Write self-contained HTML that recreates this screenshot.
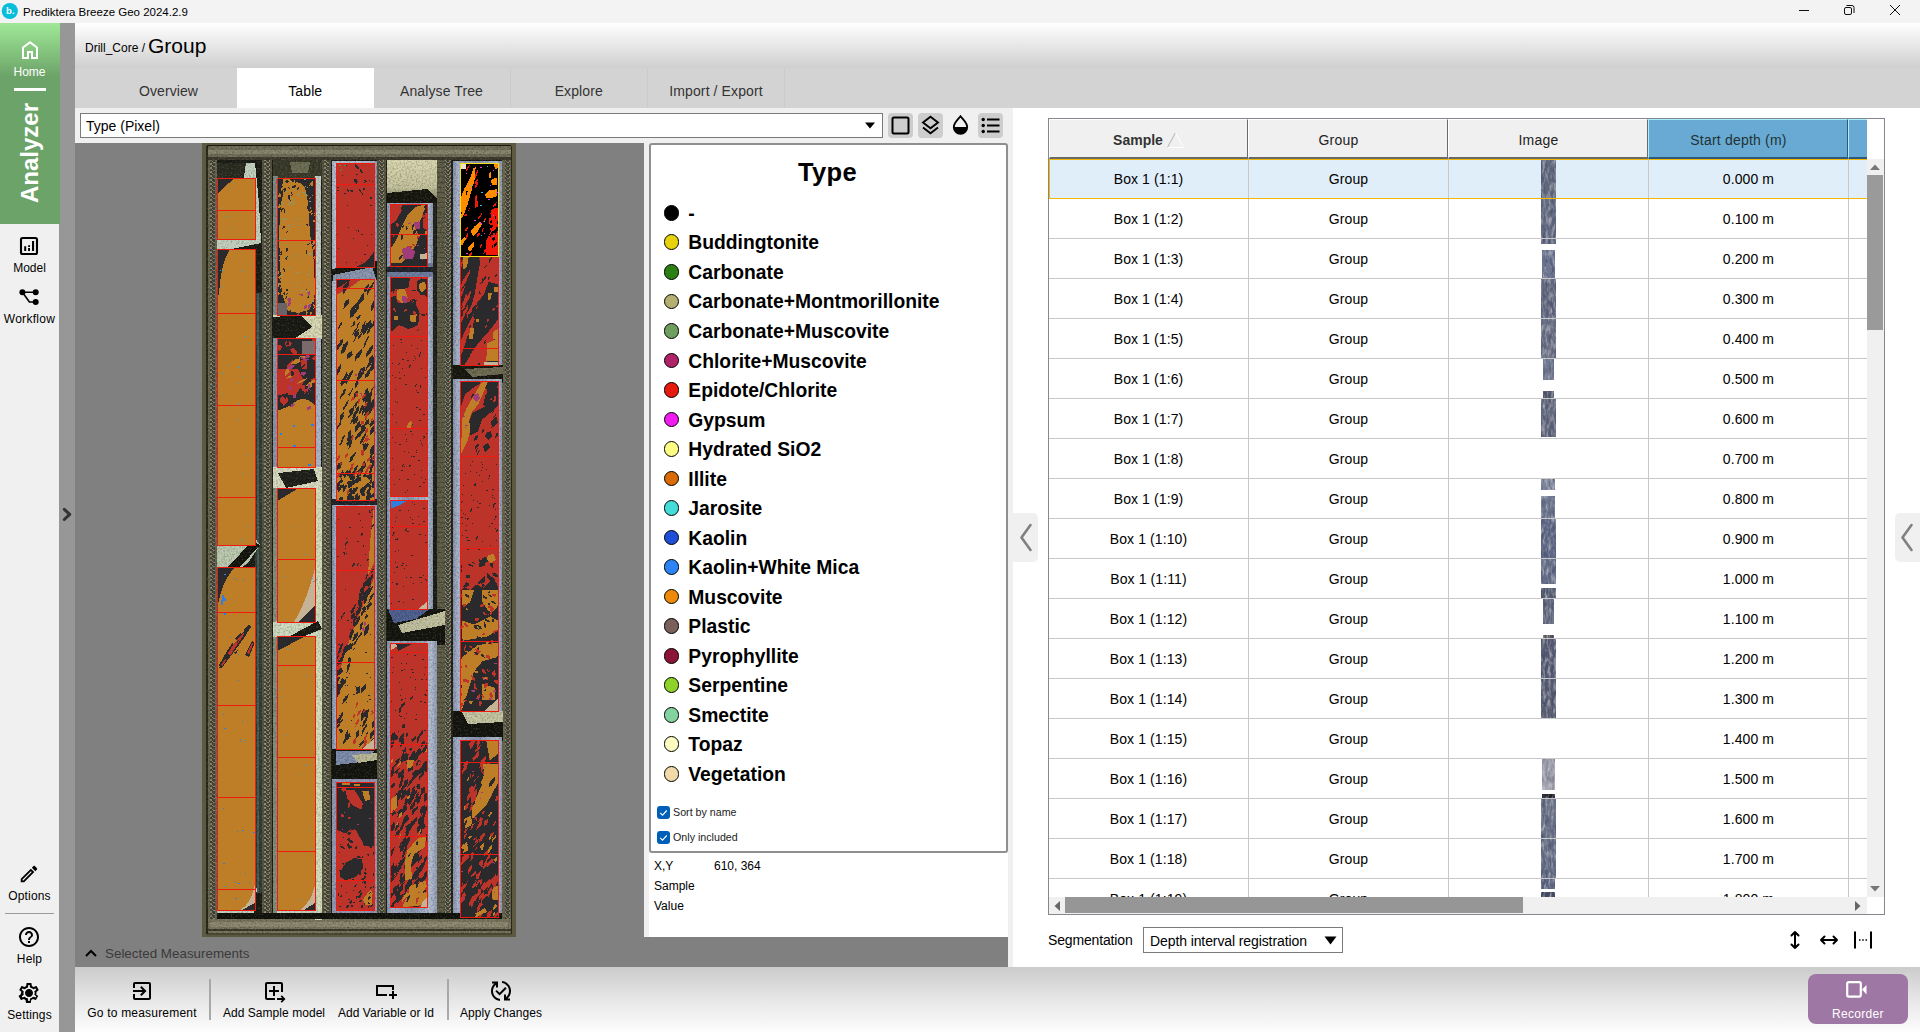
<!DOCTYPE html>
<html lang="en"><head><meta charset="utf-8"><title>Prediktera Breeze Geo 2024.2.9</title>
<style>
*{box-sizing:border-box;margin:0;padding:0}
html,body{width:1920px;height:1032px;overflow:hidden;background:#fff}
body{position:relative;font-family:"Liberation Sans",sans-serif;font-size:14px;color:#000;letter-spacing:.2px}
.abs,body>div,body>svg{position:absolute}
div,span,i,b,svg{position:absolute}
#title{left:0;top:0;width:1920px;height:23px;background:#f3f3f3}
#title .t{left:23px;top:1px;line-height:23px;font-size:11.5px;letter-spacing:0;white-space:nowrap}
#side{left:0;top:23px;width:59px;height:1009px;background:#f0f0f0;z-index:2}
#green{left:0;top:0;width:60px;height:201px;background:linear-gradient(#9fe897 0,#6ca368 54px,#6ca368 100%)}
#strip{left:59px;top:23px;width:16px;height:1009px;background:#979797}
.nl{left:0;width:59px;text-align:center;font-size:12px;letter-spacing:.15px;white-space:nowrap;line-height:16px}
#head{left:75px;top:23px;width:1845px;height:45px;background:linear-gradient(#fff 0,#fdfdfd 4%,#cfcfcf 100%)}
#tabs{left:75px;top:68px;width:1845px;height:40px;background:#d3d3d3}
.tab{top:0;height:40px;line-height:47px;text-align:center;font-size:14px;color:#333;letter-spacing:.1px;border-right:1px solid #cbcbcb}
.tab.on{background:#fff;color:#000;border:0}
#left{left:75px;top:108px;width:938px;height:859px;background:#f0f0f0}
#combo{left:5px;top:5px;width:803px;height:25px;background:#fff;border:1px solid #7a7a7a;font-size:14px;line-height:24px;padding-left:5px;letter-spacing:0}
.ib{top:5px;width:25px;height:25px;border-radius:4px;background:#cdcdcd}
#imgarea{left:0;top:35px;width:569px;height:824px;background:#808080}
#selbar{left:0;top:829px;width:933px;height:30px;background:#808080}
#legend{left:574px;top:35px;width:359px;height:710px;background:#fff;border:2px solid #8f8f8f;border-radius:3px}
#legend h1{position:absolute;left:-1px;top:12px;width:355px;text-align:center;font-size:25.5px;line-height:30px;font-weight:bold;letter-spacing:.3px}
.li{left:0;height:24px;width:355px}
.li i{left:12.7px;top:4.2px;width:15.6px;height:15.6px;border-radius:50%;border:1.3px solid #000}
.li b{left:37.3px;top:1px;line-height:24px;font-size:19.3px;letter-spacing:0;white-space:nowrap}
.cb{left:6px;width:13px;height:13px;border-radius:3px;background:#005fb8}
.cbl{left:22px;font-size:10.7px;letter-spacing:0;color:#222;white-space:nowrap;line-height:13px}
#info{left:574px;top:745px;width:359px;height:84px;background:#fff;font-size:12px;letter-spacing:0}
#info span{line-height:14px;white-space:nowrap}
#right{left:1013px;top:108px;width:907px;height:859px;background:#fff}
#tbl{left:35px;top:10px;width:837px;height:797px;border:1px solid #828790;background:#fff;overflow:hidden}
.th{top:0;height:40px;line-height:40px;text-align:center;font-size:14px;color:#222;background:#f0f0f0;border-top:1px solid #fff;border-left:1px solid #fff;border-right:1px solid #696969;border-bottom:2px solid #696969;white-space:nowrap}
.th.blue{background:#68aad3;border-top:1px solid #a8eefa;border-left:1px solid #a8eefa;border-right:1px solid #2d5a78;border-bottom:2px solid #2d5a78;color:#233}
.tr{left:0;width:818px;height:41px;border-top:1px solid #c8c8c8;border-bottom:1px solid #c8c8c8;z-index:2}
.tr.sel{border:1px solid #f5b800;z-index:3;margin-top:1px;height:40px;width:830px}
.c{top:0;height:39px;line-height:40px;text-align:center;font-size:14px;white-space:nowrap;letter-spacing:.1px}
.sel .c{top:-1px;margin-left:-1px}
.sel:after{margin-left:-1px;margin-top:-1px}
.c1{left:0;width:199px}.c2{left:199px;width:200px;border-left:1px solid #c8c8c8}.c3{left:399px;width:200px;border-left:1px solid #c8c8c8}.c4{left:599px;width:200px;border-left:1px solid #c8c8c8}
.tr:after{content:"";position:absolute;left:799px;top:0;width:1px;height:39px;background:#c8c8c8}
.st{display:block;z-index:3}
#vs{left:818px;top:40px;width:17px;height:738px;background:#f0f0f0;z-index:4}
#hs{left:0;top:778px;width:818px;height:17px;background:#f0f0f0;z-index:4}
#bottom{left:75px;top:967px;width:1845px;height:65px;background:linear-gradient(#cbcbcb 0,#e4e4e4 45%,#fdfdfd 100%)}
.bl{top:38px;font-size:12px;letter-spacing:.05px;white-space:nowrap;text-align:center;line-height:16px}
.sep{top:12px;width:1.5px;height:41px;background:#a8a8a8}
#rec{left:1733px;top:7px;width:100px;height:50px;border-radius:8px;background:#9e77a5}
#rec span{left:0;top:32px;width:100px;text-align:center;color:#fff;font-size:12px;letter-spacing:.3px;line-height:16px}
.col{background:#f0f0f0;width:25px;height:49px;top:405px}

</style></head>
<body>
<div id="title">
<svg style="left:1px;top:2px" width="18" height="18" viewBox="0 0 18 18"><circle cx="8.800" cy="9" r="8.100" fill="#06bddc"/><text x="5" y="12.300" font-family="Liberation Sans,sans-serif" font-weight="bold" font-size="9.500" fill="#fff">b.</text></svg>
<span class="t">Prediktera Breeze Geo 2024.2.9</span>
<svg style="left:1790px;top:0" width="130" height="23" viewBox="0 0 130 23" fill="none" stroke="#111" stroke-width="1"><path d="M9 10.5h10"/><rect x="54.5" y="7.5" width="7" height="7" rx="1.5"/><path d="M56.5 5.5h5.5a2 2 0 0 1 2 2v5.5"/><path d="M100 5l10 10M110 5l-10 10"/></svg>
</div>
<div id="side">
<div id="green">
<svg style="left:18px;top:15px" width="24" height="24" viewBox="0 0 24 24" fill="#fff"><path fill-rule="evenodd" d="M4 21V9l8-6 8 6v12h-7v-6h-2v6zM6 19h3v-6h6v6h3v-9l-6-4.500L6 10z"/></svg>
<span class="nl" style="top:41px;color:#fff;letter-spacing:0">Home</span>
<i style="left:14px;top:65px;width:32px;height:2.500px;background:#fff"></i>
<span style="left:0;top:180px;width:100px;height:59px;line-height:59px;transform-origin:0 0;transform:rotate(-90deg);color:#fff;font-weight:bold;font-size:24px;text-align:center;letter-spacing:0">Analyzer</span>
</div>
<svg style="left:0;top:200px" width="59" height="100" viewBox="0 200 59 100"><rect x="21" y="215" width="16" height="16" rx="1.500" fill="none" stroke="#000" stroke-width="2.100"/><path d="M24.200 223.300h2v4.700h-2zM28.100 222.200h1.900v1.700h-1.900zM28.100 224.900h1.900v3.100h-1.900zM32 218h2.100v10H32z"/><g stroke="#000" stroke-width="1.600" fill="none"><path d="M22.400 269.200h13.300M22.400 269.200l7 9.800h6.300"/></g><circle cx="22.400" cy="269.200" r="3"/><circle cx="35.700" cy="269.200" r="3"/><circle cx="35.700" cy="279" r="3"/></svg>
<span class="nl" style="top:237px;letter-spacing:0">Model</span>
<span class="nl" style="top:288px;letter-spacing:.3px">Workflow</span>
<svg style="left:18px;top:840px" width="22" height="22" viewBox="0 0 24 24" fill="#000"><path d="M14.060 9.020l.92.920L5.920 19H5v-.920l9.060-9.060M17.660 3c-.25 0-.51.100-.7.290l-1.830 1.830 3.750 3.750 1.830-1.830c.39-.39.39-1.020 0-1.410l-2.340-2.340c-.2-.2-.45-.29-.71-.29zm-3.600 3.190L3 17.250V21h3.750L17.810 9.940l-3.750-3.750z"/></svg>
<span class="nl" style="top:865px">Options</span>
<i style="left:5px;top:890px;width:49px;height:1px;background:#9a9a9a"></i>
<svg style="left:17px;top:902px" width="24" height="24" viewBox="0 0 24 24" fill="#000"><path d="M11 18h2v-2h-2v2zm1-16C6.480 2 2 6.480 2 12s4.480 10 10 10 10-4.480 10-10S17.520 2 12 2zm0 18c-4.410 0-8-3.590-8-8s3.590-8 8-8 8 3.590 8 8-3.590 8-8 8zm0-14c-2.210 0-4 1.790-4 4h2c0-1.100.9-2 2-2s2 .9 2 2c0 2-3 1.750-3 5h2c0-2.250 3-2.500 3-5 0-2.210-1.790-4-4-4z"/></svg>
<span class="nl" style="top:928px">Help</span>
<svg style="left:17px;top:958px" width="24" height="24" viewBox="0 0 24 24" fill="#000"><path d="M19.430 12.980c.04-.32.070-.64.070-.98 0-.34-.03-.66-.07-.98l2.110-1.650c.19-.15.240-.42.120-.64l-2-3.460c-.09-.16-.26-.25-.44-.25-.06 0-.12.010-.17.030l-2.490 1c-.52-.4-1.080-.73-1.690-.98l-.38-2.650C14.460 2.180 14.250 2 14 2h-4c-.25 0-.46.180-.49.420l-.38 2.650c-.61.250-1.170.59-1.690.98l-2.490-1c-.06-.02-.12-.03-.18-.03-.17 0-.34.090-.43.250l-2 3.460c-.13.220-.07.490.12.640l2.110 1.650c-.4.320-.7.650-.7.980 0 .33.030.66.070.98l-2.110 1.650c-.19.150-.24.420-.12.640l2 3.460c.9.160.26.250.44.250.06 0 .12-.1.170-.03l2.490-1c.52.400 1.080.73 1.690.98l.38 2.650c.3.240.24.420.49.420h4c.25 0 .46-.18.490-.42l.38-2.650c.61-.25 1.170-.59 1.690-.98l2.490 1c.6.020.12.030.18.030.17 0 .34-.9.430-.25l2-3.460c.12-.22.070-.49-.12-.64l-2.110-1.650zm-1.980-1.710c.4.310.5.520.5.730 0 .21-.2.430-.5.730l-.14 1.130.89.700 1.080.84-.7 1.210-1.270-.51-1.040-.42-.9.680c-.43.320-.84.560-1.250.73l-1.060.43-.16 1.130-.2 1.350h-1.400l-.19-1.350-.16-1.130-1.060-.43c-.43-.18-.83-.41-1.230-.71l-.91-.7-1.060.43-1.270.51-.7-1.210 1.080-.84.890-.7-.14-1.130c-.03-.31-.05-.54-.05-.74s.02-.43.050-.73l.14-1.130-.89-.7-1.080-.84.700-1.210 1.270.51 1.040.42.900-.68c.43-.32.840-.56 1.250-.73l1.060-.43.160-1.130.2-1.350h1.390l.19 1.350.16 1.130 1.060.43c.43.180.83.410 1.230.71l.91.700 1.060-.43 1.270-.51.700 1.210-1.070.85-.89.700.14 1.130zM12 8c-2.210 0-4 1.790-4 4s1.790 4 4 4 4-1.790 4-4-1.790-4-4-4zm0 6c-1.100 0-2-.9-2-2s.9-2 2-2 2 .9 2 2-.9 2-2 2z"/><circle cx="12" cy="12" r="2.600"/></svg>
<span class="nl" style="top:984px">Settings</span>
</div>
<div id="strip"><svg style="left:0;top:480px" width="16" height="24" viewBox="0 480 16 24" fill="none" stroke="#333" stroke-width="3" stroke-linecap="round" stroke-linejoin="round"><path d="M5.300 486.300l5.400 5.100-5.400 5.100"/></svg></div>
<div id="head"><span style="left:10px;top:17px;font-size:12px;line-height:16px;letter-spacing:0;white-space:nowrap">Drill_Core /</span><span style="left:73px;top:8px;font-size:21px;line-height:30px;letter-spacing:0;white-space:nowrap">Group</span></div>
<div id="tabs">
<span class="tab" style="left:25px;width:137px;border-right:0">Overview</span>
<span class="tab on" style="left:162px;width:136.500px">Table</span>
<span class="tab" style="left:298.500px;width:137px">Analyse Tree</span>
<span class="tab" style="left:435.500px;width:137.500px">Explore</span>
<span class="tab" style="left:573px;width:137px">Import / Export</span>
</div>
<div id="left">
<div id="combo">Type (Pixel)<svg style="left:783px;top:8px" width="12" height="7" viewBox="0 0 12 7"><path d="M1 .5h10L6 6.500z" fill="#000"/></svg></div>
<div class="ib" style="left:813px"><svg style="left:3px;top:3px" width="19" height="19" viewBox="0 0 19 19"><rect x="1.500" y="1.500" width="16" height="16" rx="1.500" fill="none" stroke="#000" stroke-width="2"/></svg></div>
<div class="ib" style="left:843px"><svg style="left:3px;top:2px" width="19" height="21" viewBox="0 0 19 21" fill="none" stroke="#000" stroke-width="1.900" stroke-linejoin="miter"><path d="M9.500 1.800L17 7.500 9.500 13.200 2 7.500z"/><path d="M2 12.500l7.500 5.700 7.500-5.700"/></svg></div>
<div class="ib" style="left:873px;background:none"><svg style="left:3px;top:1px" width="19" height="21" viewBox="0 0 19 21"><path d="M9.500 2.200C7 5.500 2.800 9 2.800 13a6.700 6.700 0 0 0 13.400 0c0-4-4.200-7.500-6.700-10.800z" fill="none" stroke="#000" stroke-width="1.900"/><path d="M2.800 13h13.400a6.700 6.700 0 0 1-13.400 0z" fill="#000"/></svg></div>
<div class="ib" style="left:903px"><svg style="left:3px;top:3px" width="19" height="19" viewBox="0 0 19 19" fill="#000"><circle cx="2.200" cy="3.500" r="1.700"/><circle cx="2.200" cy="9.500" r="1.700"/><circle cx="2.200" cy="15.500" r="1.700"/><rect x="6" y="2.500" width="12.500" height="2"/><rect x="6" y="8.500" width="12.500" height="2"/><rect x="6" y="14.500" width="12.500" height="2"/></svg></div>
<div id="imgarea"><div style="left:127px;top:0;width:314px;height:794px;overflow:hidden"><svg width="314" height="794" viewBox="0 0 314 794" shape-rendering="crispEdges">
<defs>
<pattern id="cg" width="6" height="4" patternUnits="userSpaceOnUse"><rect width="6" height="4" fill="#45443a"/><path d="M0 4L3 .5 6 4" fill="none" stroke="#858268" stroke-width="1"/></pattern>
<pattern id="cg2" width="6" height="4" patternUnits="userSpaceOnUse"><rect width="6" height="4" fill="#46453a"/><path d="M0 4L3 .5 6 4" fill="none" stroke="#8f8c72" stroke-width="1"/></pattern>
<pattern id="hl" width="4" height="5" patternUnits="userSpaceOnUse"><rect width="4" height="5" fill="#5f5d47"/><rect y="4" width="4" height="1" fill="#4c4a38"/></pattern>
<linearGradient id="rk3" x1="0" x2="1" y1="0" y2="0"><stop offset="0" stop-color="#8490ae"/><stop offset=".1" stop-color="#aab4ca"/><stop offset=".5" stop-color="#8894b0"/><stop offset=".88" stop-color="#b4bed0"/><stop offset="1" stop-color="#8e9ab4"/></linearGradient>
<linearGradient id="rk2" x1="0" x2="1" y1="0" y2="0"><stop offset="0" stop-color="#a4aec4"/><stop offset=".1" stop-color="#bec6d4"/><stop offset=".9" stop-color="#b0bace"/><stop offset="1" stop-color="#8490aa"/></linearGradient>
<linearGradient id="crm" x1="0" x2="0" y1="0" y2="1"><stop offset="0" stop-color="#dad9b2"/><stop offset=".6" stop-color="#c4c39c"/><stop offset="1" stop-color="#54533e"/></linearGradient>
<filter id="gr" x="0" y="0" width="100%" height="100%"><feTurbulence type="fractalNoise" baseFrequency=".55" numOctaves="2" seed="11" result="n"/><feColorMatrix in="n" values="0 0 0 0 .9 0 0 0 0 .9 0 0 0 0 .85 1.200 0 0 0 -.66" result="w"/><feColorMatrix in="n" values="0 0 0 0 0 0 0 0 0 0 0 0 0 0 0 0 1.500 0 0 -.6" result="d"/><feMerge><feMergeNode in="w"/><feMergeNode in="d"/></feMerge></filter>
<clipPath id="k0"><rect x="15.5" y="35" width="37.5" height="61"/></clipPath>
<clipPath id="k1"><rect x="15.5" y="106" width="37.5" height="296"/></clipPath>
<clipPath id="k2"><rect x="15.5" y="424" width="37.5" height="343"/></clipPath>
<clipPath id="k3"><rect x="75.5" y="35" width="37.5" height="137"/></clipPath>
<clipPath id="k4"><rect x="75.5" y="195" width="37.5" height="129"/></clipPath>
<clipPath id="k5"><rect x="75.5" y="345" width="37.5" height="134"/></clipPath>
<clipPath id="k6"><rect x="75.5" y="493" width="37.5" height="274"/></clipPath>
<clipPath id="k7"><rect x="134" y="20" width="38" height="104"/></clipPath>
<clipPath id="k8"><rect x="134" y="136" width="38" height="221"/></clipPath>
<clipPath id="k9"><rect x="134" y="363" width="38" height="243"/></clipPath>
<clipPath id="k10"><rect x="134" y="639" width="38" height="128"/></clipPath>
<clipPath id="k11"><rect x="188" y="61" width="37.5" height="62"/></clipPath>
<clipPath id="k12"><rect x="188" y="134" width="37.5" height="219"/></clipPath>
<clipPath id="k13"><rect x="188" y="357" width="37.5" height="109"/></clipPath>
<clipPath id="k14"><rect x="188" y="500" width="37.5" height="264"/></clipPath>
<clipPath id="k15"><rect x="258" y="113" width="38" height="109"/></clipPath>
<clipPath id="k16"><rect x="258" y="238" width="38" height="330"/></clipPath>
<clipPath id="k17"><rect x="258" y="597" width="38" height="177"/></clipPath>
<clipPath id="ks"><rect x="258" y="20" width="38" height="93"/></clipPath>
</defs>
<rect width="314" height="794" fill="#5a583f"/>
<rect x="4" y="2" width="306" height="790" fill="#1a1a12"/>
<rect x="5" y="3" width="304" height="14" fill="#6f6c56"/><rect x="5" y="7" width="304" height="4" fill="#87846c"/><rect x="5" y="14" width="304" height="3" fill="#3c3a2a"/>
<rect x="5" y="776" width="304" height="16" fill="#77745c"/><rect x="8" y="779" width="298" height="5" fill="#8c8970"/><rect x="5" y="786" width="304" height="1.500" fill="#3a3828"/><rect x="5" y="790" width="304" height="2" fill="#4a4834"/>
<rect x="5" y="17" width="10" height="759" fill="#67654e"/><rect x="8" y="17" width="5" height="759" fill="url(#cg)"/><rect x="0" y="0" width="5" height="794" fill="#5c5a40"/><rect x="4" y="3" width="1.500" height="788" fill="#2a281c"/>
<rect x="300" y="17" width="10" height="759" fill="#67654e"/><rect x="303" y="17" width="5" height="759" fill="url(#cg)"/><rect x="309" y="0" width="5" height="794" fill="#5c5a40"/><rect x="308.500" y="3" width="1.500" height="788" fill="#2a281c"/>
<rect x="15" y="17" width="285" height="759" fill="#1b1c15"/>
<rect x="60" y="17" width="10" height="758" fill="#56543f"/><rect x="62" y="17" width="6" height="758" fill="url(#cg2)"/>
<rect x="120" y="17" width="9" height="758" fill="#56543f"/><rect x="122" y="17" width="5" height="758" fill="url(#cg2)"/>
<rect x="175" y="17" width="9" height="758" fill="#56543f"/><rect x="177" y="17" width="5" height="758" fill="url(#cg2)"/>
<rect x="235" y="17" width="15" height="758" fill="url(#hl)"/><rect x="243" y="17" width="6" height="758" fill="url(#cg2)"/><rect x="249" y="17" width="2" height="758" fill="#24241a"/>
<rect x="53" y="150" width="7" height="600" fill="#2f3d35"/><rect x="55" y="150" width="2" height="600" fill="#485a52"/>
<rect x="15" y="100" width="2" height="670" fill="#56604e"/>
<path d="M44 20L53 20 57 60 59 100 30 106 15 118 15 96 38 60z" fill="#c5d2c0"/><path d="M15 20H44L38 44 15 60z" fill="#2a2b20"/>
<path d="M15 395L53 395 58 402 46 420 15 440z" fill="#bccab0"/><path d="M26 424L50 398 58 402 38 424z" fill="#15150e"/>
<path d="M15 760L55 745 52 772 30 776 15 774z" fill="#c3d2c2"/>
<rect x="71" y="17" width="49" height="20" fill="#3a3a2a"/><path d="M88 19H108L106 30H90z" fill="#6e6d54"/>
<rect x="113" y="33" width="6" height="140" fill="#c4cec6"/><rect x="71" y="33" width="5" height="140" fill="#7d8a86"/>
<path d="M71 172L120 172 120 196 71 196z" fill="#d9d9b6"/><path d="M71 174L98 172 110 184 92 196 71 196z" fill="#1a1a14"/>
<rect x="113" y="195" width="6" height="130" fill="#aab6c8"/><rect x="71" y="195" width="5" height="130" fill="#8a96a8"/>
<path d="M71 324L120 324 120 346 71 346z" fill="#d9dcc0"/><path d="M76 330L112 326 116 338 84 345z" fill="#20201a"/>
<rect x="113" y="345" width="7" height="432" fill="#d6deba"/><rect x="71" y="345" width="5" height="430" fill="#82907a"/>
<path d="M71 479L120 470 120 494 71 494z" fill="#cfdcc0"/><path d="M88 493L116 478 120 486 100 494z" fill="#191912"/>
<path d="M75 767L113 750 116 770 92 776 75 775z" fill="#c8d6c0"/>
<rect x="130" y="18" width="45" height="108" fill="url(#rk2)"/>
<path d="M130 126L175 118 175 136 130 140z" fill="#15150f"/><path d="M131 132L170 124 175 138 131 142z" fill="#8a96b0"/>
<rect x="130" y="138" width="45" height="222" fill="url(#rk2)"/>
<rect x="130" y="358" width="45" height="250" fill="url(#rk3)"/><rect x="130" y="356" width="45" height="6" fill="#23232a"/>
<path d="M130 606L175 606 175 640 130 640z" fill="#15150f"/><path d="M134 608L172 608 168 618 134 622z" fill="#7f8cab"/><path d="M150 612L175 610 175 617 156 620z" fill="#b9b996"/>
<rect x="130" y="636" width="45" height="136" fill="#9298b2"/>
<rect x="185" y="17" width="50" height="46" fill="url(#crm)"/><path d="M185 50L225 46 235 56 235 70 185 70z" fill="#17170f"/>
<rect x="185" y="60" width="46" height="70" fill="url(#rk3)"/>
<path d="M185 123L231 120 231 136 185 138z" fill="#6e7d9e"/><rect x="185" y="124" width="46" height="5" fill="#20222c"/>
<rect x="185" y="134" width="46" height="222" fill="url(#rk3)"/><rect x="231" y="60" width="3" height="300" fill="#22231b"/>
<rect x="185" y="352" width="46" height="118" fill="url(#rk3)"/>
<path d="M185 466L243 466 243 502 185 502z" fill="#15150f"/><path d="M186 466L228 466 214 476 192 480z" fill="#4f6090"/><path d="M196 482L243 468 243 482 200 490z" fill="#c2c2a0"/>
<rect x="185" y="498" width="50" height="272" fill="url(#rk3)"/>
<rect x="251" y="18" width="49" height="208" fill="url(#rk3)"/>
<path d="M251 222L301 222 301 240 251 240z" fill="#17170f"/><path d="M262 226L301 224 301 231 270 234z" fill="#6d6b52"/>
<rect x="251" y="236" width="49" height="336" fill="url(#rk3)"/>
<path d="M251 568L301 568 301 598 251 598z" fill="#15150f"/><path d="M260 569L301 568 301 579 266 581z" fill="#c6c5a2"/>
<rect x="251" y="594" width="49" height="182" fill="url(#rk3)"/>
<rect x="15" y="770" width="285" height="6" fill="#12120c"/>
<rect x="5" y="3" width="304" height="788" filter="url(#gr)" opacity=".38"/>
<rect x="15.5" y="35" width="37.5" height="61" fill="#be7e28"/>
<g clip-path="url(#k0)">
<path d="M15 35H33L27 40 22 44 18 48 15 52z" fill="#2a2a2c"/>
<path d="M27 44h1v1h-1zM18 67h1v1h-1zM18 65h1v1h-1zM31 40h1v1h-1zM31 84h1v1h-1zM24 73h2v1h-2z" fill="#5f9f8f"/>
</g>
<rect x="15.5" y="106" width="37.5" height="296" fill="#be7e28"/>
<g clip-path="url(#k1)">
<path d="M15 106H28Q19 120 17 150L15 160z" fill="#2a2a2c"/>
<path d="M36 224h2v1h-2zM17 358h1v1h-1zM21 144h1v1h-1zM45 162h1v1h-1zM39 217h1v1h-1zM18 127h1v1h-1zM40 233h1v1h-1zM37 240h1v1h-1zM44 312h1v1h-1zM36 261h2v1h-2zM42 193h2v1h-2zM20 230h2v1h-2zM21 251h1v1h-1zM40 330h1v1h-1zM47 200h1v1h-1zM37 277h1v1h-1zM46 383h1v1h-1zM39 127h2v1h-2zM39 397h2v1h-2zM26 221h1v1h-1zM16 243h1v1h-1zM20 127h2v1h-2z" fill="#4f9fb0"/>
</g>
<rect x="15.5" y="424" width="37.5" height="343" fill="#be7e28"/>
<g clip-path="url(#k2)">
<path d="M15 424H33Q24 434 20 446T15 468z" fill="#2a2a2c"/>
<path d="M17 522L25 508 33 496 42 486 47 481 49 484 42 495 34 506 25 518 19 526z" fill="#2a2a2c"/>
<path d="M26 510L33 499 41 490 42.500 491 35 502 28 513zM19 522l4-6 1.500 1-4 6z" fill="#bc3429"/>
<path d="M30 500l3-4 2 1-3 4zM38 490l3-3 1 1-3 3z" fill="#be7e28"/>
<path d="M43 512L50 498 52.500 500 47 514z" fill="#2a2a2c"/>
<path d="M45 510L50 500 51 501 47 511z" fill="#bc3429"/>
<path d="M35.5 495L37.5 494L37.5 493L38 491L38 491L36.5 492.5L36 493.5L35.5 495ZM24 515L25.5 514L25.5 512.5L26 510.5L26 510.5L24.5 511.5L24 513L24 515ZM17.5 525.5L18.5 525L19.5 524L20.5 522.5L20.5 522.5L18.5 523L17.5 524.5L17.5 525.5ZM27.5 505.5L29.5 505L29 504L29.5 503L29.5 503L28 503.5L28 504L27.5 505.5ZM32.5 511.5L34 510.5L35.5 508.5L36 507L36 507L34.5 508L32.5 509.5L32.5 511.5ZM34.5 500L36 499.5L36.5 498L37 497L37 497L35.5 497.5L35 498.5L34.5 500Z" fill="#2a2a2c"/>
<path d="M20 452h2v3h2v3h-3v4h-2v-5h1zM22 470h2v2h-2z" fill="#2f7fe0"/>
<path d="M34 436h1v1h-1zM22 431h2v1h-2zM22 585h2v1h-2zM36 537h1v1h-1zM35 688h1v1h-1zM36 511h1v1h-1zM43 597h1v1h-1zM43 730h1v1h-1zM38 596h1v1h-1zM40 578h1v1h-1zM33 739h1v1h-1zM47 739h1v1h-1zM36 740h2v1h-2zM20 470h1v1h-1zM18 509h1v1h-1zM40 687h2v1h-2zM21 665h1v1h-1zM21 720h2v1h-2zM23 743h1v1h-1zM33 755h2v1h-2zM21 571h1v1h-1zM28 494h1v1h-1zM41 436h1v1h-1zM31 435h1v1h-1zM38 598h1v1h-1zM51 689h2v1h-2z" fill="#2f7fe0"/>
<path d="M53 740V767H38Q50 760 53 740z" fill="#c4b394"/>
<path d="M53 760V767H40z" fill="#2a2a2c"/>
</g>
<rect x="75.5" y="35" width="37.5" height="137" fill="#2a2a2c"/>
<g clip-path="url(#k3)">
<path d="M84 40Q96 36 103 44L106 60 108 90 112 120 113 150 108 166 96 170 86 168 80 150 78 120 77 90 79 60z" fill="#be7e28"/>
<path d="M78.5 74.5L80 73.5L80.5 72L81.5 70L81.5 70L79.5 70.5L79.5 72.5L78.5 74.5ZM79.5 166.5L80 164.5L79 162.5L77.5 160.5L77.5 160.5L78 163L79 165L79.5 166.5ZM76.5 65.5L77.5 64.5L79 63.5L78.5 61.5L78.5 61.5L76.5 62.5L76 63.5L76.5 65.5ZM105.5 98L107.5 96L107 94L107 91.5L107 91.5L105 93.5L105 95.5L105.5 98ZM85.5 61.5L86.5 59L87 57L86 55L86 55L84 57.5L84.5 59.5L85.5 61.5ZM86.5 86.5L88 85.5L88 84L88 82.5L88 82.5L87 83.5L86.5 85L86.5 86.5ZM102.5 128.5L104.5 127L105.5 125L105 122.5L105 122.5L103.5 124L103 126L102.5 128.5ZM105 118L107 116.5L108.5 115.5L108.5 113L108.5 113L106 114L105 115.5L105 118ZM99.5 46.5L101 46L101.5 44.5L101 43L101 43L100.5 44L99.5 45L99.5 46.5ZM80 72L81.5 72L82.5 71L82.5 69L82.5 69L81.5 69.5L80 70L80 72ZM113 165.5L114 163L113 162L111 161L111 161L111.5 163L112 164.5L113 165.5ZM106.5 134L108.5 133L109.5 131.5L111 129.5L111 129.5L108 130L107.5 132L106.5 134ZM109.5 135L110.5 134L111 132.5L110.5 131L110.5 131L109 132L109 133.5L109.5 135ZM112 159L113.5 156.5L112 155L110 154L110 154L109.5 156L111 157.5L112 159ZM111 73.5L113 72.5L113.5 71L112.5 69.5L112.5 69.5L111 70L110.5 71.5L111 73.5ZM89.5 50.5L89.5 48.5L89.5 47.5L88 46.5L88 46.5L88 48L88 49.5L89.5 50.5ZM108 67.5L108.5 66L109.5 65L109 63.5L109 63.5L107.5 64.5L107.5 66L108 67.5ZM106 154L107 153.5L107 152.5L108.5 151L108.5 151L106 151.5L106 152.5L106 154ZM78.5 48L80.5 47L81.5 45.5L82 43.5L82 43.5L79.5 44.5L78.5 45.5L78.5 48ZM85.5 41.5L87.5 40L89 38.5L88.5 36.5L88.5 36.5L87.5 38L86 39.5L85.5 41.5ZM112 80.5L112.5 79L112.5 77.5L112 76.5L112 76.5L110 78L111.5 79L112 80.5ZM82.5 45L83 43.5L82.5 42L80 41L80 41L80.5 42.5L81 44L82.5 45ZM80.5 38L83 38L83 36.5L83.5 34.5L83.5 34.5L81.5 35L80.5 36L80.5 38ZM107.5 42.5L109.5 41.5L111 40L111.5 38L111.5 38L110 38.5L108 40L107.5 42.5ZM87.5 76.5L89.5 74.5L89 72.5L87.5 70.5L87.5 70.5L86.5 72.5L86.5 74.5L87.5 76.5ZM105 139L106 137.5L106.5 136L107.5 133.5L107.5 133.5L105 135L105 137L105 139ZM108 172L109.5 171L110 170L108.5 168.5L108.5 168.5L108 169.5L108 170.5L108 172ZM84 71.5L85 70.5L84.5 69L84 68L84 68L81 69L83 70L84 71.5ZM110.5 43L111 41.5L110 40.5L108.5 40L108.5 40L108 41.5L109 42.5L110.5 43ZM82.5 40L83.5 38.5L84 37L84.5 35L84.5 35L82.5 36.5L82.5 38L82.5 40ZM82.5 39L84 37.5L85.5 36.5L84 34.5L84 34.5L83 36L82 37L82.5 39ZM78 105.5L79.5 104L82 102.5L82 100L82 100L80.5 101.5L78.5 103L78 105.5ZM81.5 67.5L83 66.5L83.5 65.5L84.5 63.5L84.5 63.5L82 64L82 65.5L81.5 67.5ZM92.5 41.5L92.5 40L93 38L92 36.5L92 36.5L91.5 38.5L91.5 40L92.5 41.5ZM78 138L80 136.5L80.5 135L80 133.5L80 133.5L79.5 135L78 136.5L78 138ZM82 145L83.5 143.5L83 142.5L81.5 141.5L81.5 141.5L81 143L81.5 144L82 145ZM81 60L84 59.5L85 58L84.5 55.5L84.5 55.5L82.5 56.5L81.5 58L81 60ZM111.5 117L113 116L114 114.5L114 112L114 112L112 113L111.5 114.5L111.5 117ZM107 56L109 55L110 53.5L111 52L111 52L109.5 53L108 54L107 56ZM80.5 52L82.5 50.5L83 48.5L82 46L82 46L80.5 47.5L80.5 49.5L80.5 52ZM76.5 144L78.5 143.5L79 142L80 140L80 140L77.5 140.5L76 141.5L76.5 144ZM75.5 153L77 152L78 150.5L76.5 148.5L76.5 148.5L75 149.5L75.5 151.5L75.5 153ZM103.5 109.5L106 108.5L107.5 107.5L107 105L107 105L105 106L104 107L103.5 109.5ZM111 102.5L112.5 101L113.5 99.5L113 97L113 97L111 98.5L110 100.5L111 102.5ZM81.5 43L82.5 41L83 39L80.5 37L80.5 37L81 39L80.5 41L81.5 43ZM83.5 54.5L84.5 52.5L84.5 50L83.5 48L83.5 48L82.5 50L83 52.5L83.5 54.5ZM110.5 107L112 105.5L113 104L112 102L112 102L112 103.5L110.5 105L110.5 107ZM104.5 171.5L106 169.5L105 168L104 166.5L104 166.5L103.5 168.5L104 170L104.5 171.5ZM78.5 146L78.5 144.5L80.5 142.5L80.5 140.5L80.5 140.5L79 142L76.5 143.5L78.5 146ZM84.5 101.5L86.5 99.5L85.5 97.5L84.5 95.5L84.5 95.5L84 97.5L83.5 99.5L84.5 101.5ZM109 70.5L109.5 68.5L110 67.5L108.5 66.5L108.5 66.5L108.5 68L107.5 69.5L109 70.5ZM78.5 91L79.5 89.5L81.5 87.5L80.5 85.5L80.5 85.5L79 87L78 89L78.5 91ZM80.5 121L82.5 119.5L83.5 117.5L82 115L82 115L80.5 116.5L80 118.5L80.5 121ZM88 124L88.5 122L88.5 120.5L87 119L87 119L85.5 121L86 122.5L88 124ZM94 171L95.5 169L95 167.5L94 166L94 166L93.5 168L94 169.5L94 171ZM85 131.5L85 129.5L83.5 128L82.5 126.5L82.5 126.5L82.5 128.5L84 130L85 131.5ZM109.5 110.5L111 109L111.5 107L113 105L113 105L110 106L109.5 108L109.5 110.5ZM79 152.5L80.5 150.5L81.5 148.5L82 146.5L82 146.5L80.5 148L79 150L79 152.5ZM90.5 164L90.5 162.5L90.5 161L88.5 161L88.5 161L87.5 162.5L88.5 163L90.5 164ZM103 86L105.5 85L107 83L106.5 80.5L106.5 80.5L105 81.5L103 83L103 86ZM108 113.5L109.5 112.5L110 111L109 109.5L109 109.5L109 111L108 112L108 113.5ZM107.5 90.5L108 88L108 86L107.5 83.5L107.5 83.5L106.5 86L106 88L107.5 90.5ZM105 67L105.5 65L106 63.5L103.5 62.5L103.5 62.5L103.5 64L104 65.5L105 67ZM77 136.5L78 135.5L79 134L78.5 132L78.5 132L77.5 133L76.5 134.5L77 136.5ZM81.5 44L83 42.5L84 40.5L84 38L84 38L82.5 39.5L81.5 42L81.5 44ZM77 54.5L79 53.5L79 51.5L77.5 49.5L77.5 49.5L77 51L75.5 52.5L77 54.5ZM77.5 132L76.5 130L76.5 128L74.5 126L74.5 126L75 128L75.5 130.5L77.5 132ZM108 72.5L109.5 71.5L111.5 70.5L112.5 68.5L112.5 68.5L110.5 69.5L109 70.5L108 72.5ZM111.5 144.5L112.5 143L111 141.5L110 141L110 141L110 142.5L111 144L111.5 144.5ZM87.5 38.5L88 36.5L87.5 35.5L85.5 34L85.5 34L85.5 36L85.5 37.5L87.5 38.5Z" fill="#be7e28"/>
<path d="M80 112.5L80 111.5L80 110.5L79 110L79 110L78 111.5L78.5 112L80 112.5ZM83.5 117.5L85 116L85.5 114L86 112L86 112L84 114L83.5 115.5L83.5 117.5ZM89 53L90.5 51.5L90 49.5L90.5 48L90.5 48L89 49.5L89.5 51.5L89 53ZM103 148.5L104.5 148L104.5 147.5L105 146L105 146L103.5 146.5L103.5 147.5L103 148.5ZM111 73.5L113 71.5L112 70L112 68.5L112 68.5L110.5 70.5L109.5 72L111 73.5ZM76.5 144.5L78 144.5L79 143.5L79.5 141.5L79.5 141.5L77.5 142L76.5 143L76.5 144.5ZM83 71L83 69L82.5 67.5L82.5 66L82.5 66L82 67.5L82 69.5L83 71ZM105 102L106.5 102L107.5 101L107.5 100L107.5 100L107 100.5L105.5 101L105 102ZM111.5 46L113 44.5L113 43L113 41.5L113 41.5L112 43L112 44.5L111.5 46ZM85.5 171L87 170L87.5 168.5L89 167L89 167L86.5 168L86.5 169.5L85.5 171ZM82.5 48.5L83.5 48L84 46.5L84.5 45L84.5 45L82.5 45.5L82 47L82.5 48.5ZM93 40L94.5 39L95 38L95.5 36.5L95.5 36.5L93.5 37L93 38L93 40ZM107 156L107 154.5L107.5 153L105.5 151.5L105.5 151.5L106.5 153L105.5 154.5L107 156ZM84.5 148L85.5 148L86 147.5L86 146L86 146L84 146L83.5 147L84.5 148ZM87 54L87.5 53L87.5 52L86.5 51.5L86.5 51.5L86 52.5L86 53.5L87 54ZM106 83.5L106 82L105 81L104 80.5L104 80.5L103.5 82L104.5 82.5L106 83.5ZM95 47L96 46.5L96.5 45.5L96.5 44L96.5 44L96 44.5L95 45.5L95 47ZM84 109.5L85.5 108L86 106L86.5 104L86.5 104L84.5 105.5L84 107.5L84 109.5ZM79.5 112.5L80 111L79.5 109.5L79.5 108L79.5 108L78.5 109.5L78.5 111L79.5 112.5ZM76 85.5L77 84.5L77 83.5L77 82.5L77 82.5L75 83.5L75.5 84.5L76 85.5ZM79 69L80.5 67.5L81.5 66L81.5 64.5L81.5 64.5L80 65.5L79 67L79 69ZM110 54.5L111 53.5L111 53L109.5 52.5L109.5 52.5L109 53L109 53.5L110 54.5ZM88.5 57.5L88 56L87 55L87 53.5L87 53.5L86 55L87 56.5L88.5 57.5ZM105 111.5L105.5 110L105 108.5L104.5 107L104.5 107L104 108.5L104 110L105 111.5ZM110 169L110 167.5L109 166L108 165.5L108 165.5L107 167L109 168L110 169ZM112 158L113 157.5L113 156.5L112.5 155.5L112.5 155.5L111.5 156L111.5 157L112 158ZM102 39L102.5 37.5L102.5 35.5L101.5 34L101.5 34L100.5 35.5L100.5 37.5L102 39ZM79.5 51.5L81.5 50.5L80.5 49L80 47.5L80 47.5L79 49L79.5 50.5L79.5 51.5ZM78.5 160L79.5 158L79 156L78.5 154L78.5 154L77.5 156L78 158L78.5 160ZM85 90.5L85 89.5L86 88L84.5 87.5L84.5 87.5L84.5 88.5L84 89.5L85 90.5ZM89.5 47L90.5 46L91.5 44.5L92 42.5L92 42.5L90 43.5L89.5 45.5L89.5 47ZM80.5 85.5L82.5 85L83 84L83 82.5L83 82.5L81 82.5L81 84L80.5 85.5ZM83 156.5L84 155.5L85 154.5L84.5 153L84.5 153L84 154L83 155L83 156.5ZM87.5 46.5L88 45.5L86.5 44.5L86.5 43.5L86.5 43.5L86 44.5L87 45.5L87.5 46.5ZM84 153L84.5 152L86 151L87 149.5L87 149.5L85 150.5L84 151.5L84 153ZM81.5 152.5L83 151L83.5 149.5L83 148L83 148L82 149L81.5 150.5L81.5 152.5ZM106 67L106.5 65.5L106 63.5L105 62L105 62L104.5 64L105.5 65.5L106 67ZM93 45L93.5 43.5L93.5 42.5L91.5 41.5L91.5 41.5L91.5 43.5L92 44.5L93 45ZM87 56.5L88 55.5L88 54L89 52.5L89 52.5L87 53.5L87 55L87 56.5ZM82.5 128.5L83 127L82.5 126L81.5 125L81.5 125L81 126.5L81.5 127.5L82.5 128.5Z" fill="#2a2a2c"/>
<path d="M89 58h1v1h-1zM76 169h2v1h-2zM79 132h2v1h-2zM96 50h1v1h-1zM91 61h1v1h-1zM76 160h1v1h-1zM98 162h1v1h-1zM85 69h1v1h-1zM76 140h2v1h-2zM86 61h1v1h-1zM106 161h1v1h-1zM104 148h2v1h-2zM87 60h2v1h-2zM87 85h1v1h-1zM89 148h1v1h-1zM77 112h1v1h-1zM105 131h2v1h-2zM110 102h1v1h-1zM81 76h1v1h-1zM78 128h1v1h-1zM91 166h1v1h-1zM77 95h1v1h-1zM102 36h2v1h-2zM106 142h1v1h-1zM86 125h1v1h-1zM91 81h1v1h-1zM99 147h2v1h-2zM81 75h1v1h-1zM96 82h1v1h-1zM79 79h1v1h-1zM110 158h2v1h-2zM111 165h1v1h-1zM105 44h1v1h-1zM97 76h1v1h-1zM110 100h1v1h-1zM86 82h2v1h-2zM77 61h1v1h-1zM92 47h1v1h-1zM89 114h1v1h-1zM95 112h1v1h-1zM80 60h2v1h-2zM95 51h2v1h-2zM85 48h1v1h-1zM85 102h1v1h-1zM84 113h1v1h-1zM94 115h1v1h-1zM90 45h1v1h-1zM107 110h2v1h-2zM103 51h2v1h-2zM101 49h2v1h-2zM90 59h2v1h-2zM96 140h1v1h-1zM103 43h1v1h-1zM89 38h1v1h-1zM83 76h2v1h-2zM91 155h1v1h-1zM107 111h2v1h-2zM107 58h2v1h-2zM88 139h1v1h-1zM105 52h1v1h-1zM102 163h2v1h-2zM77 117h1v1h-1zM95 144h1v1h-1zM109 127h1v1h-1zM82 96h2v1h-2zM96 51h1v1h-1zM79 144h1v1h-1zM95 75h1v1h-1zM89 55h2v1h-2zM95 129h2v1h-2z" fill="#6fa58f"/>
<path d="M106.5 152.5L108 151L107.5 149.5L107.5 148L107.5 148L105.5 149.5L105.5 151L106.5 152.5ZM101 153L100.5 151.5L99 150.5L97 150.5L97 150.5L97.5 152L99.5 153L101 153ZM97 173L97 172L96.5 170.5L96 170L96 170L94 172L95.5 172.5L97 173ZM102 166.5L104 165.5L105 164L104.5 161.5L104.5 161.5L102.5 162.5L102 164L102 166.5ZM87 159.5L88 158L89.5 157L87 155.5L87 155.5L85.5 156.5L85.5 158L87 159.5ZM88 158.5L89 157L89 155.5L87.5 154.5L87.5 154.5L85 156L86 157.5L88 158.5ZM85.5 163.5L88 162.5L89 160L89.5 158L89.5 158L87.5 159L86 161L85.5 163.5ZM108 164L109 162L108 161L106 162L106 162L106 164L106.5 165.5L108 164Z" fill="#a03c78"/>
<path d="M76 160h9v12h-9z" fill="#6a6468"/>
</g>
<rect x="75.5" y="195" width="37.5" height="129" fill="#be7e28"/>
<g clip-path="url(#k4)">
<path d="M75 195H113V262Q100 250 90 262L75 268z" fill="#2a2a2c"/>
<path d="M98 219L100.5 221.5L102.5 219.5L104.5 218L104.5 218L101.5 214.5L99.5 216.5L98 219ZM100 219L102.5 220L105 219.5L105.5 216.5L105.5 216.5L103 215L101 216L100 219ZM106.5 250.5L105.5 246.5L103.5 245.5L102.5 242L97 242.5L97 242.5L99.5 246L101 248.5L102 251L106.5 250.5ZM77.5 208L79.5 205.5L80.5 203L77 201.5L77 201.5L74.5 204L75.5 206.5L77.5 208ZM93.5 242.5L99 240L97.5 237L95.5 233.5L95.5 233.5L89.5 236L92.5 239L93.5 242.5ZM108 240L112 240.5L114.5 239L114 234.5L114 234.5L110.5 235.5L108 236.5L108 240ZM82.5 251L86.5 249.5L88 247L90.5 244.5L89.5 240L89.5 240L86 242L82.5 244L82 247L82.5 251ZM115.5 216L113.5 213L112 213L110 215.5L110 215.5L111.5 217L113.5 217L115.5 216ZM114 201.5L115 197.5L116.5 194L109.5 195L109.5 195L109.5 198.5L110.5 200.5L114 201.5ZM95.5 212L94.5 208L92 205.5L87.5 203.5L87.5 203.5L89 208.5L91 211L95.5 212ZM84.5 203.5L89 202.5L89.5 200.5L86.5 197.5L86.5 197.5L83.5 198.5L82.5 200.5L84.5 203.5ZM86 230L88.5 227.5L89.5 224.5L90.5 221L90.5 217L90.5 217L87 220L84.5 222.5L84.5 226L86 230ZM78 246L82 242.5L81 240L77 237.5L77 237.5L72.5 241L74 244L78 246ZM105 226.5L105 222L105.5 218L99.5 217.5L99.5 217.5L99 222L100 225.5L105 226.5ZM81.5 262.5L85.5 258.5L85.5 255L81 252L81 252L77.5 256L78.5 259L81.5 262.5ZM103 205.5L105.5 206.5L108.5 207L110 203L110 203L106.5 201L104.5 203L103 205.5Z" fill="#bc3429"/>
<path d="M76 226h20l6 12-8 14H76z" fill="#bc3429"/>
<path d="M84.5 235.5L87.5 235L90.5 233.5L92 231L92 231L89.5 231.5L86.5 233L84.5 235.5ZM103.5 205.5L107.5 205L110.5 203.5L113.5 200L113.5 200L108.5 199.5L106 202.5L103.5 205.5ZM89.5 220.5L93.5 221L97 219.5L99 215.5L99 215.5L95 215.5L91.5 217.5L89.5 220.5ZM83 233L85.5 231L87.5 228.5L87 224.5L87 224.5L84 226.5L82.5 229.5L83 233ZM94.5 241L98 240L100.5 238.5L103.5 237L106 235L106 235L102.5 236L99.5 237L97 238.5L94.5 241ZM105 246L107.5 245L110 243.5L110 241L110 241L107.5 241.5L106 243.5L105 246ZM103.5 243L107 242.5L109.5 240.5L112 239.5L114.5 236.5L114.5 236.5L111 237L108 238L106 240.5L103.5 243ZM97 217L100.5 217L103 216L104 212.5L104 212.5L101 213L97.5 213.5L97 217Z" fill="#be7e28"/>
<path d="M88.5 247L89.5 245L90.5 243.5L87 242L87 242L87 244L86.5 245.5L88.5 247ZM104.5 267.5L106.5 266.5L109 266L109.5 263L109.5 263L106.5 263.5L104.5 264.5L104.5 267.5ZM87.5 264L90 264L91 263.5L92.5 261.5L92.5 261.5L89.5 261L89 262L87.5 264ZM108.5 217.5L106 216L103 215.5L100.5 215.5L100.5 215.5L102 217.5L105.5 218L108.5 217.5ZM103.5 216L102 215L100.5 214L98.5 214.5L98.5 214.5L99.5 216.5L101.5 216.5L103.5 216ZM90.5 255L93.5 254.5L94.5 253.5L93.5 251L93.5 251L92.5 252L90.5 252.5L90.5 255ZM99 232L101.5 232.5L103.5 231L104 229L104 229L102.5 229L99.5 229L99 232ZM89 239.5L90 238L91.5 236.5L89 234.5L89 234.5L88 236.5L88 238L89 239.5ZM109.5 245.5L108.5 243.5L107.5 241L105 240.5L105 240.5L106 242.5L107 245L109.5 245.5ZM108 213.5L106.5 212L104 212L102.5 213.5L102.5 213.5L103.5 215.5L106.5 215L108 213.5ZM84.5 226L88.5 226L90.5 225.5L92.5 222.5L92.5 222.5L88.5 222L87 223.5L84.5 226ZM109 248L108 246L106 245L104.5 245.5L104.5 245.5L104.5 248L107 248L109 248Z" fill="#a03c78"/>
<path d="M103.5 254.5L104 252.5L106 250L104.5 247.5L104.5 247.5L103.5 249.5L102 252L103.5 254.5ZM85 211.5L85.5 210L86 208L85 206.5L85 206.5L84 208L84 210L85 211.5ZM108.5 220L108 218.5L107 216.5L105 216.5L105 216.5L105 219L106.5 220.5L108.5 220ZM100.5 216.5L99 215.5L99 214L97.5 214L97.5 214L98 215L98 216.5L100.5 216.5ZM109.5 240L109 237.5L109.5 235L109.5 232.5L109.5 232.5L108 235L107.5 237.5L109.5 240ZM87.5 220L86 218L86 218L84 218.5L84 218.5L85 220L85 220.5L87.5 220ZM89.5 233.5L91.5 231.5L91.5 229.5L89.5 227.5L89.5 227.5L89 229.5L88.5 231.5L89.5 233.5ZM84 206.5L87.5 206.5L89.5 205.5L92 203.5L92 203.5L88 203L86.5 204L84 206.5ZM103 249.5L101.5 248.5L98.5 248L96.5 249L96.5 249L98.5 250L101.5 250L103 249.5ZM102.5 209L104 208L104 207L104.5 205.5L104.5 205.5L103 206.5L103 207.5L102.5 209ZM92.5 260L91 259L90 258.5L88 259L88 259L89.5 260L90.5 260.5L92.5 260ZM90 259L90.5 257L90 255L88.5 254L88.5 254L88 256L89 258L90 259ZM99 226L101 224.5L102.5 223L103 220.5L103 220.5L101 222L99.5 223.5L99 226ZM84 256L84 254L83.5 252L81 251L81 251L81.5 253.5L82.5 255L84 256ZM109.5 251L109 248.5L107 246.5L105.5 245L105.5 245L105.5 247.5L107.5 249.5L109.5 251ZM83.5 202.5L87 202L87 200.5L87.5 198L87.5 198L85 198.5L84.5 200L83.5 202.5ZM98.5 207.5L99.5 206L100 204.5L100 203L100 203L98.5 204.5L98.5 206L98.5 207.5ZM80 251.5L83 252.5L85 252.5L87 251L87 251L84.5 250L82.5 251L80 251.5Z" fill="#2a2a2c"/>
<path d="M100 198h13v14h-13z" fill="#7a6a6c"/>
<path d="M106 321h3v2h-3zM109 281h3v2h-3zM78 290h2v2h-2zM91 302h3v2h-3zM91 282h2v2h-2z" fill="#2f7fe0"/>
</g>
<rect x="75.5" y="345" width="37.5" height="134" fill="#be7e28"/>
<g clip-path="url(#k5)">
<path d="M75 345H97L75 358z" fill="#2a2a2c"/>
<path d="M113 425V479H92Q104 460 113 425z" fill="#c4b394"/>
<path d="M113 462V479H96z" fill="#2a2a2c"/>
<path d="M90 383h1v1h-1zM102 411h1v1h-1zM83 433h1v1h-1zM85 416h2v1h-2zM111 438h2v1h-2zM109 435h2v1h-2z" fill="#4f9fb0"/>
</g>
<rect x="75.5" y="493" width="37.5" height="274" fill="#be7e28"/>
<g clip-path="url(#k6)">
<path d="M75 493H104L75 508z" fill="#2a2a2c"/>
<path d="M113 742V767H98Q110 758 113 742z" fill="#c4b394"/>
<path d="M113 760V767H102z" fill="#2a2a2c"/>
<path d="M78 553h1v1h-1zM107 686h1v1h-1zM85 592h1v1h-1zM98 756h1v1h-1zM77 545h1v1h-1zM108 708h1v1h-1zM79 527h1v1h-1zM103 622h2v1h-2zM108 705h1v1h-1zM105 533h1v1h-1zM96 631h1v1h-1zM85 505h2v1h-2z" fill="#4f9fb0"/>
</g>
<rect x="134" y="20" width="38" height="104" fill="#bc3429"/>
<g clip-path="url(#k7)">
<path d="M161.5 52L160 49.5L158.5 47L157 45L157 45L157.5 47.5L159 49.5L161.5 52ZM147 49.5L146.5 47.5L145.5 45.5L144.5 44L144.5 44L144.5 46L145.5 48L147 49.5ZM155 41L155.5 38.5L155 36.5L152.5 35L152.5 35L153.5 37.5L154 39.5L155 41ZM164.5 39.5L164.5 38.5L163.5 37.5L161.5 37L161.5 37L163 38L163.5 39L164.5 39.5ZM151 49.5L151 48L150 47L148 46.5L148 46.5L148.5 48.5L150 49L151 49.5ZM157.5 27L157 24L155 22.5L153 21.5L153 21.5L153 24L155.5 25.5L157.5 27ZM154.5 24L154 22L152.5 20L151.5 18.5L151.5 18.5L152 20.5L153 22.5L154.5 24ZM162.5 47.5L162.5 46L162.5 45L161.5 44L161.5 44L161.5 45L161 46.5L162.5 47.5ZM155 41.5L155 39L154.5 37L151.5 36L151.5 36L152 38.5L153.5 40L155 41.5ZM160.5 30.5L160.5 29L160 27.5L158.5 26L158.5 26L158 28L159 29.5L160.5 30.5Z" fill="#2a2a2c"/>
<path d="M135 44h2v1h-2zM168 54h2v1h-2zM162 111h2v1h-2zM154 31h2v1h-2zM146 84h1v1h-1zM154 119h1v1h-1zM154 87h1v1h-1zM168 62h2v1h-2zM159 119h1v1h-1zM142 50h2v1h-2zM135 47h2v1h-2zM170 38h1v1h-1zM159 91h2v1h-2zM162 46h1v1h-1zM135 91h1v1h-1zM144 119h1v1h-1zM156 87h1v1h-1zM160 51h1v1h-1zM137 22h1v1h-1zM140 32h1v1h-1zM169 91h1v1h-1zM162 39h1v1h-1zM145 62h1v1h-1zM151 95h1v1h-1zM168 55h2v1h-2zM136 105h1v1h-1zM165 102h1v1h-1zM144 22h1v1h-1zM167 37h1v1h-1zM156 88h1v1h-1z" fill="#2a2a2c"/>
<path d="M172 108V124H154Q166 120 172 108z" fill="#2a2a2c"/>
<path d="M137 22h2v1h-2zM139 26h1v1h-1zM137 22h1v1h-1zM142 22h2v1h-2zM138 27h1v1h-1z" fill="#3f9f3f"/>
</g>
<rect x="134" y="136" width="38" height="221" fill="#be7e28"/>
<g clip-path="url(#k8)">
<path d="M134 136H160L146 146 134 152z" fill="#bc3429"/>
<path d="M134 136H150L134 146z" fill="#2a2a2c"/>
<path d="M160.5 193L163 191L164.5 188L166.5 185.5L167.5 182.5L167.5 182.5L165.5 185L163 187.5L161.5 190L160.5 193ZM149.5 192.5L152 190L154 187.5L156 184.5L156.5 182L158 178.5L158 178.5L155.5 181L155 184L152.5 186.5L151 189.5L149.5 192.5ZM167.5 285L169.5 282.5L172 280L173 276.5L173 276.5L169.5 278.5L167.5 281.5L167.5 285ZM145.5 277L147.5 274L150.5 271L151.5 268L152 264.5L153 261.5L153 261.5L151 264L150 267L148.5 270.5L145.5 273.5L145.5 277ZM136.5 303L140 300.5L141 297.5L142 295L143.5 291.5L143.5 291.5L140 294L139.5 297L138.5 300L136.5 303ZM168 311L171 308.5L173.5 306.5L173.5 303L173 299.5L173 299.5L171.5 302L169 304.5L168 307.5L168 311ZM150 275.5L153.5 272.5L156 269.5L157 266L157 262L157 262L154.5 265L153.5 268L151 271.5L150 275.5ZM167 318L169 314.5L171 311.5L173 308L174 304L174 304L171.5 307L169.5 310.5L167.5 314L167 318ZM161.5 268L166.5 266.5L168 263.5L169 259.5L169 256L169 256L166.5 258L163.5 261L162.5 264L161.5 268ZM138.5 276.5L141 274L141.5 271L142 268L142 268L140 270.5L138 273L138.5 276.5ZM142 240.5L145.5 238.5L147.5 236L149 232.5L150.5 230L151.5 226.5L151.5 226.5L148.5 228.5L147 231L145.5 234.5L143.5 237L142 240.5ZM138 256.5L139.5 254L142.5 251L143.5 248.5L144.5 245L144.5 245L141.5 247L140.5 250L138.5 253L138 256.5ZM161 205.5L163.5 202.5L164.5 199L166 196L167.5 192L167.5 192L165 195L163 198.5L162 202L161 205.5ZM159 291.5L162 289L164 285.5L162.5 281L162.5 281L158.5 283.5L158.5 287.5L159 291.5ZM134.5 327L138 325.5L139.5 322.5L140 319L140 319L136.5 320.5L134.5 323L134.5 327ZM168.5 169L171 166L173 163L175 159.5L173 155L173 155L171.5 158.5L169.5 162L168.5 165L168.5 169ZM147 335L150.5 333L152.5 330L154.5 327.5L155.5 324.5L156 321.5L156 321.5L153.5 323.5L152 326L151 329.5L148.5 331.5L147 335ZM145.5 215.5L148.5 214L151 212L149.5 208L149.5 208L146.5 209.5L145 212L145.5 215.5ZM146.5 305.5L149 303L150 300L150 297L151 293.5L151 293.5L148.5 296L147.5 299L147 302L146.5 305.5ZM161.5 309.5L163 307L165.5 304.5L167 301L167 301L164 303.5L162 306.5L161.5 309.5ZM166.5 271.5L167.5 268.5L169 265.5L169.5 261.5L169.5 261.5L166.5 264.5L165.5 267.5L166.5 271.5ZM168 228.5L171 226L174.5 223.5L176 220.5L175.5 216L175.5 216L172.5 218.5L171 221.5L168 224.5L168 228.5ZM158.5 312L161.5 310L163 307L165 304.5L166 301L167 298L167 298L165 300.5L163 303L161.5 306L160 309L158.5 312ZM160 190.5L162.5 188L164 185.5L165.5 183L164.5 179.5L164.5 179.5L164 182L162 184.5L160.5 187.5L160 190.5ZM162 274L164.5 271L166 267.5L165.5 263.5L165.5 263.5L163.5 266.5L162.5 270.5L162 274ZM144 241.5L146 238L147.5 234.5L147.5 230.5L147.5 230.5L146 234L143.5 237.5L144 241.5ZM166.5 220.5L170 218.5L171 215.5L171 212L171 212L168 214L167 217L166.5 220.5ZM161.5 150L165 147.5L166.5 144L167 140L167 140L164.5 143L162 146L161.5 150ZM151 199.5L153 197L154.5 194L156.5 191.5L156.5 188.5L157 185L157 185L155 187.5L154.5 190.5L153.5 193.5L152 196.5L151 199.5ZM160.5 306.5L162.5 304.5L164.5 303L164 300L164 300L160.5 301.5L160.5 304L160.5 306.5ZM156 332L158 329.5L159.5 326L162 323.5L163 320L163.5 316.5L163.5 316.5L161.5 319L160 322.5L158 325.5L155.5 328.5L156 332ZM165 259L168.5 256.5L169.5 253L169.5 249L169.5 249L166 251.5L165.5 255.5L165 259ZM168 320.5L171 318.5L171.5 315.5L173 312.5L173 312.5L169.5 314.5L168 317L168 320.5ZM165 259.5L167.5 256.5L168.5 253.5L170 250L170.5 247L172 243.5L172 243.5L169.5 246.5L168.5 249.5L167 252.5L166 256L165 259.5ZM169 228L171.5 226L171.5 223L175 221L175 217.5L175 214L175 214L172.5 216L171.5 219L169 221.5L169 225L169 228ZM165.5 152L167.5 148.5L169.5 145L170 141L170 141L167 144L165 147.5L165.5 152ZM168.5 292L171 290L173 287.5L174.5 285L173.5 281L173.5 281L171.5 283L169 285.5L167.5 288.5L168.5 292ZM160.5 260L163 257L163 254L164.5 250.5L166 247.5L166 244L166 244L163.5 247L162.5 250L161.5 253.5L160.5 256.5L160.5 260ZM139 244L141 241.5L142.5 238.5L144 235.5L146 232.5L144.5 229L144.5 229L143 231.5L141.5 234.5L139 237L138.5 240.5L139 244ZM169.5 165L172 163L172.5 160L173 157L173 157L171 159L170 162L169.5 165ZM153 297.5L155.5 295L158.5 293L158.5 290L159.5 286.5L159.5 286.5L157 289L155.5 291.5L153.5 294.5L153 297.5ZM155 177.5L157 176L158 174L159 171.5L159 171.5L156.5 173L154.5 174.5L155 177.5ZM163.5 269L165 266.5L167 263.5L167.5 260.5L169 257L169 257L166.5 259.5L165.5 263L163.5 266L163.5 269ZM148.5 175.5L150.5 173L153.5 170.5L153 167.5L152.5 163.5L152.5 163.5L149.5 166L149.5 169L147.5 172L148.5 175.5ZM135.5 207L137.5 204.5L139.5 201.5L141 199.5L141 195.5L141 195.5L138 197.5L137.5 200.5L134.5 203L135.5 207ZM148 270.5L149.5 269L151 267L149.5 264.5L149.5 264.5L148 266L146.5 268L148 270.5ZM151 256L154.5 253.5L155.5 251L155.5 247.5L155.5 247.5L152.5 249.5L152 252.5L151 256ZM157.5 302L160 299.5L162 296L164 292.5L164 289L164 289L162 292L160 295L158 298.5L157.5 302ZM139 211L142.5 209L144 206.5L144.5 203.5L146 200.5L146.5 197L146.5 197L144.5 199.5L141 201.5L140.5 204.5L139.5 207.5L139 211ZM163.5 227.5L165.5 225.5L167.5 223L169.5 220.5L171 218L172 215L172 215L169 216.5L167 219L165.5 222L164 224.5L163.5 227.5ZM165 189.5L167 187.5L169 185L172 182.5L172 179L172 179L170.5 181.5L167.5 183.5L166 186.5L165 189.5ZM153 218.5L154.5 216L157.5 214L159 211.5L160 208L160 205L160 205L158 207L156 209.5L154 212L152.5 215L153 218.5ZM149.5 183.5L152.5 182L152.5 179.5L153 177.5L153 177.5L151.5 179L151 181L149.5 183.5ZM164 214L166.5 211.5L169 208.5L170.5 205.5L170.5 202L170.5 202L168.5 204.5L166.5 207.5L164.5 210L164 214ZM157 271.5L159.5 268.5L161.5 265L161 261.5L161 261.5L159 264L157.5 268L157 271.5ZM140.5 268.5L142.5 266L144.5 263L146 260L147 256.5L147 256.5L144.5 259L143 262L141 265L140.5 268.5ZM153.5 288.5L156.5 285.5L159 282L157.5 278L157.5 278L155 281L153 284L153.5 288.5ZM162.5 278.5L164.5 275.5L165.5 272.5L167.5 269.5L168 266.5L169 263L169 263L166 266L165.5 269L164 272L163.5 275.5L162.5 278.5ZM163 282.5L166.5 281L167.5 279L166.5 276L166.5 276L164.5 277.5L163 279.5L163 282.5ZM165 212.5L168.5 210.5L170 207L169 203L169 203L167 206L165 208.5L165 212.5ZM146.5 255L148 252L150 248.5L151 244.5L151 244.5L149 248L146.5 251.5L146.5 255ZM148.5 175L151.5 173L153 170.5L155 168L157 165L157.5 161.5L157.5 161.5L155 163.5L153 166.5L150.5 169L150 172L148.5 175ZM158.5 189.5L161 187L163 183.5L163 180.5L164.5 177L164.5 177L162 180L160.5 182.5L159.5 186L158.5 189.5ZM136 187L138 184L140 181.5L140.5 178L140.5 178L138 180.5L136.5 183.5L136 187ZM163 235L166.5 233L168.5 230L167.5 225.5L167.5 225.5L165.5 228.5L163.5 231.5L163 235ZM148 171L150.5 168.5L153 166L155.5 162.5L156 158.5L156 158.5L153 161L150 164L148.5 167L148 171ZM135 287L136.5 284L139 281L139.5 277.5L141.5 274.5L142 271L142 271L140 274L138 277L137.5 280.5L135.5 283.5L135 287ZM141.5 165.5L144.5 163L147.5 160.5L147 156L147 156L143 158L142 161.5L141.5 165.5ZM147 319.5L150.5 317.5L151 314.5L153 312L154.5 308.5L154.5 308.5L151.5 310.5L149 313L148 316L147 319.5ZM165.5 224.5L167 222L169.5 219.5L171.5 216.5L173 213.5L174.5 211L174.5 211L172 213L170.5 216L168.5 218.5L166 221.5L165.5 224.5ZM151 281.5L155 279.5L156.5 276L156 272L156 272L153.5 274.5L151.5 277.5L151 281.5ZM148 282L150.5 279L152.5 276L154 273L154.5 269.5L154.5 269.5L152.5 272L151 275L149 278L148 282ZM167 331.5L170 329L170.5 325.5L172 322L173.5 319L173.5 315L173.5 315L171 318L170 321L168 324.5L167.5 328L167 331.5ZM140.5 207.5L142.5 206L143.5 203.5L144 200.5L144 200.5L141.5 202L140 204.5L140.5 207.5ZM141 151L143.5 148.5L144 145L147 142L146.5 138L146.5 138L144 140.5L141 143.5L140.5 147L141 151ZM153 194.5L156 192.5L156 190L156.5 187L156.5 187L153 188.5L152 191L153 194.5ZM165 270.5L168 267.5L170.5 265L171 261.5L173.5 258.5L173.5 255L173.5 255L170.5 257L169 260.5L167 263L166 266.5L165 270.5ZM135.5 231.5L137.5 228.5L139 224.5L139 220.5L139 220.5L136.5 224L135 227.5L135.5 231.5ZM170.5 181L172.5 180L173 178L173 176L173 176L172 177.5L170.5 178.5L170.5 181ZM163 260L165.5 257.5L166.5 254.5L167 251L166.5 247.5L166.5 247.5L164 250L161.5 253L162.5 256.5L163 260ZM158.5 329.5L161.5 326.5L164.5 323L164 319L164 319L162 322L158.5 325L158.5 329.5ZM145 298.5L148.5 296.5L149 293L148.5 290L149.5 286.5L149.5 286.5L146.5 289L146 292L145.5 295.5L145 298.5ZM160.5 190.5L163.5 188.5L165.5 186L168 183.5L168.5 180.5L169.5 176.5L169.5 176.5L166 179L164.5 181L161.5 183.5L160 186.5L160.5 190.5ZM164.5 192.5L167 189.5L168.5 186.5L169.5 183L170 179.5L170 179.5L167.5 182.5L167 186L165.5 189L164.5 192.5ZM156 162L159 159.5L162 157L161.5 153.5L162.5 149.5L162.5 149.5L159.5 152L158 155L156 158L156 162ZM154 239L157 236.5L159.5 234L161.5 231L162.5 228L162.5 223.5L162.5 223.5L158.5 225.5L157 229L156 232L155 235.5L154 239ZM167 271L169.5 268.5L170 266L172 263.5L172.5 260L172.5 260L170.5 262.5L168 264.5L167.5 267.5L167 271ZM145 304L146.5 301.5L148.5 299.5L150.5 297L150.5 294L151.5 291L151.5 291L149 293L147.5 295L146.5 298L144.5 300.5L145 304ZM169.5 224L171.5 220.5L173 217L172.5 213.5L172.5 213.5L171 216.5L170 220L169.5 224ZM153.5 244.5L155 243L156 241L156 238L156 238L153.5 240L153 242L153.5 244.5ZM155.5 197L158 194.5L159.5 192.5L160.5 189.5L160.5 189.5L158 191.5L156 193.5L155.5 197ZM153 266L154.5 263.5L155.5 260L156.5 256.5L156.5 256.5L153.5 259.5L152.5 262.5L153 266ZM144.5 335L146.5 332L148 329.5L150 326.5L151 323L152 320L152 320L150.5 323L148.5 325.5L146.5 328.5L145.5 331.5L144.5 335ZM159.5 273L161.5 270.5L163.5 267.5L163.5 264.5L164.5 261.5L164.5 261.5L161 263.5L161 266.5L160 269.5L159.5 273ZM168.5 147L170.5 144.5L171.5 141.5L172.5 138L172.5 138L170 140.5L169.5 143.5L168.5 147Z" fill="#2a2a2c"/>
<path d="M163.5 298L165 296L165.5 294L165.5 292L165.5 292L164 293.5L163.5 295.5L163.5 298ZM170 267L172 266L172.5 265L173 263L173 263L171 264L170.5 265.5L170 267ZM161 302.5L162 300L164.5 297L164 293.5L164 293.5L163 296.5L160.5 299L161 302.5ZM154.5 254L156.5 253.5L156 252L155.5 250L155.5 250L153 250.5L154 252.5L154.5 254ZM162.5 276L165 273.5L166.5 271.5L167 268L167 268L164.5 270L164 273L162.5 276ZM159.5 256.5L162 255L163.5 253L163.5 250.5L163.5 250.5L161.5 252L160 254L159.5 256.5ZM152 331L155 330.5L155 329L154 327.5L154 327.5L153 328L153 329L152 331ZM164 330.5L165.5 329.5L166 328L165.5 326L165.5 326L164 327L164 328.5L164 330.5ZM148.5 297.5L151 296.5L151.5 294.5L152.5 292L152.5 292L150 293.5L149 295.5L148.5 297.5ZM163.5 290L166 289L165.5 287L165.5 285L165.5 285L164 286.5L162.5 288L163.5 290ZM156 261L157.5 259.5L158 257L159 255L159 255L156.5 256.5L156 258.5L156 261ZM168.5 278.5L170 277L171.5 276L171 274L171 274L170 275L168.5 276.5L168.5 278.5ZM143 315L145 313.5L146 312L146 310L146 310L144 311.5L143 313L143 315ZM148 328L151 326L151.5 322.5L152.5 319L152.5 319L149.5 321.5L149 325L148 328ZM149 258L151.5 257L153 255.5L151 253L151 253L150 254L149.5 256L149 258ZM165 299.5L165.5 298L167.5 296.5L166 294.5L166 294.5L165 295.5L162.5 297L165 299.5ZM162 332L164.5 330L165.5 327.5L167 325L167 325L164 326.5L163 329L162 332ZM160.5 323.5L162.5 323L163 322L162.5 320L162.5 320L160 320L160 321.5L160.5 323.5ZM165 327L168 325.5L169 323L169 320.5L169 320.5L167 322L165 324.5L165 327ZM159 282L161.5 281L161.5 279.5L161.5 277.5L161.5 277.5L159 278L159 279.5L159 282ZM163 276.5L165.5 276L165 274L166 272.5L166 272.5L162.5 272.5L163 274.5L163 276.5ZM161.5 266L164 264L165 261.5L166 258.5L166 258.5L163 260.5L163 263L161.5 266Z" fill="#bc3429"/>
<path d="M146.5 357.5L148 355.5L149.5 353.5L150 350L150 350L146.5 351.5L145.5 354L146.5 357.5ZM145 359.5L147.5 358.5L150 357L151 354L151 354L148.5 355L146 357L145 359.5ZM145.5 361L148.5 358L149.5 355.5L148.5 351.5L148.5 351.5L144.5 354L145.5 357.5L145.5 361ZM135 347L137.5 346L137.5 344L137 341.5L137 341.5L135 342.5L133.5 344L135 347ZM164.5 357.5L168 356.5L169 353.5L169 350L169 350L166 351.5L164 354.5L164.5 357.5ZM167.5 341.5L170 340L170 338.5L169.5 336L169.5 336L168 338L167.5 339.5L167.5 341.5ZM142 335L144 333L145.5 330L145.5 326.5L145.5 326.5L143.5 329L141 331.5L142 335ZM153.5 339L155.5 338.5L159 337.5L159.5 333.5L159.5 333.5L155.5 334L154 336.5L153.5 339ZM153 340.5L155.5 339.5L157.5 337.5L156 334L156 334L153.5 336L150.5 337.5L153 340.5ZM149 337.5L151.5 336.5L153 335.5L152.5 332.5L152.5 332.5L149 333L149.5 335L149 337.5ZM146 333.5L148.5 332L149 330L149 327.5L149 327.5L146.5 328.5L146.5 331L146 333.5ZM147 351L151 351.5L151 349.5L151.5 346.5L151.5 346.5L148 347L148 349L147 351ZM150 351.5L152.5 351L154 348.5L155 345.5L155 345.5L152 346.5L149.5 348.5L150 351.5ZM148.5 358.5L149.5 356.5L152 355L149 352L149 352L148 354L147 356L148.5 358.5ZM134.5 343.5L137.5 343L137.5 341.5L136 340L136 340L135 340.5L134 341.5L134.5 343.5ZM167 345.5L168 344.5L169.5 343.5L168.5 341.5L168.5 341.5L166.5 342L166 343.5L167 345.5ZM138 335L140 333L142 330L140.5 327L140.5 327L139.5 329L137.5 332L138 335ZM148 337L151 334.5L152.5 332.5L150.5 329L150.5 329L149.5 331L147.5 333.5L148 337ZM170 345L173.5 344L173 340.5L173 337.5L173 337.5L170.5 339L170 342L170 345ZM137 360L140.5 359L141 356.5L140.5 354L140.5 354L137.5 354.5L137 357L137 360ZM135 334.5L137 334L138.5 333L138.5 330.5L138.5 330.5L137 331.5L135.5 332.5L135 334.5ZM163.5 351L167 349L169 346.5L169.5 343.5L169.5 343.5L167 345L165.5 347.5L163.5 351ZM169 353L171 352.5L172 351.5L172.5 349.5L172.5 349.5L170.5 350.5L170 351.5L169 353ZM148.5 342.5L150 341L151 339L150.5 337L150.5 337L149.5 338.5L148 340.5L148.5 342.5ZM136.5 342L139 340L141.5 338.5L139.5 335L139.5 335L138.5 337L136 339L136.5 342ZM166 356.5L167 354L168.5 351L168 347.5L168 347.5L165.5 350.5L164.5 353.5L166 356.5ZM151.5 357L154.5 354.5L155.5 352.5L155.5 349.5L155.5 349.5L153.5 351.5L153 354L151.5 357ZM136.5 349L138 347L139.5 344.5L139 341.5L139 341.5L137.5 343.5L135.5 346L136.5 349ZM159.5 352L162 349.5L164 346.5L163.5 342.5L163.5 342.5L159.5 345L157.5 348L159.5 352ZM170.5 354L172.5 353L173.5 351.5L173.5 349L173.5 349L171.5 350L170 351.5L170.5 354ZM145.5 346L147 345L149.5 344L149.5 341L149.5 341L147.5 341.5L145.5 343.5L145.5 346ZM146.5 343.5L149.5 343L149.5 340.5L150 338L150 338L146 338L145 340L146.5 343.5ZM146 349.5L149.5 349L150 347.5L150 345L150 345L148 345.5L146.5 347L146 349.5ZM160 353.5L162 353L163 352L163 349.5L163 349.5L160 350L159 351L160 353.5ZM137.5 345.5L140.5 344.5L142 343L141.5 340.5L141.5 340.5L140.5 341.5L138.5 343L137.5 345.5ZM151 348L154.5 348L155.5 346.5L156 343.5L156 343.5L153.5 344.5L151.5 345L151 348ZM167.5 337L170 335.5L170 333L169.5 330.5L169.5 330.5L165 332L165 334L167.5 337ZM148 357L150.5 357L152.5 356L152 353L152 353L150 353.5L147 353.5L148 357ZM147.5 342L152 341.5L154 339.5L154.5 335.5L154.5 335.5L151.5 337L148.5 338L147.5 342ZM155 335.5L156.5 334L157.5 333L158 331L158 331L155.5 332L154.5 333.5L155 335.5ZM155.5 334L158 332L159 329.5L158.5 326.5L158.5 326.5L155.5 328L155.5 331L155.5 334ZM141 349L143 347L144.5 344.5L145.5 341.5L145.5 341.5L142 343L141 345.5L141 349ZM162.5 345.5L165.5 344.5L167.5 342L167 339.5L167 339.5L165 340.5L163 343L162.5 345.5ZM155 334.5L158.5 333L160 330.5L161 327L161 327L157.5 329L155.5 330.5L155 334.5ZM154 358L157 357.5L158 355L158 352L158 352L155 353L152.5 355L154 358ZM161.5 334L164.5 334L164.5 332L164 330.5L164 330.5L162.5 331L160.5 332L161.5 334ZM166 356L169.5 355L171 353L172.5 350.5L172.5 350.5L169.5 351.5L166.5 352.5L166 356ZM136.5 347.5L139 347L139 345.5L139.5 343.5L139.5 343.5L137.5 343.5L136.5 345L136.5 347.5Z" fill="#2a2a2c"/>
<path d="M160 313L161.5 311.5L161.5 309L162 306.5L162 306.5L159.5 308.5L159 311L160 313ZM135.5 318.5L136.5 317L138 314.5L137.5 312L137.5 312L136 314L134.5 316L135.5 318.5ZM159.5 309L160.5 308.5L162.5 307L161 305.5L161 305.5L160.5 306.5L158.5 307.5L159.5 309ZM165.5 319L167.5 317.5L167.5 315.5L168 313.5L168 313.5L166 315L165 316.5L165.5 319ZM150.5 333.5L152.5 332.5L154 330.5L154.5 328.5L154.5 328.5L153 329.5L152 331.5L150.5 333.5ZM137.5 322L139.5 321.5L140 320L138 319L138 319L138 320L137.5 321L137.5 322ZM155.5 332.5L157 332L159 330L159 327.5L159 327.5L157 328.5L155.5 330.5L155.5 332.5ZM135.5 335L137 333.5L138 331.5L137 329L137 329L136 330.5L135 332.5L135.5 335ZM145.5 352L146.5 350L147.5 348L147 346L147 346L145.5 347.5L145 349.5L145.5 352ZM169 317.5L171 317L171 315.5L172 314L172 314L169.5 314.5L170 316L169 317.5Z" fill="#bc3429"/>
<path d="M159.5 253L160 252L159.5 251L160 250L160 250L158 250.5L158.5 251.5L159.5 253ZM156 241L157 241L157.5 240.5L157 239L157 239L156 239L155.5 240L156 241ZM155.5 232L155 231L154 230.5L152.5 231L152.5 231L153.5 232.5L154.5 232.5L155.5 232ZM159.5 229.5L160.5 229L160.5 228L160 227L160 227L159 227.5L158.5 228.5L159.5 229.5Z" fill="#a03c78"/>
</g>
<rect x="134" y="363" width="38" height="243" fill="#bc3429"/>
<g clip-path="url(#k9)">
<path d="M172 435L166 450 158 470 150 490 143 510 137 530 134 545V606H172z" fill="#be7e28"/>
<path d="M172 363V420L166 432 168 400 170 380z" fill="#be7e28"/>
<path d="M169 430L170.5 429L171.5 427L172.5 425L172.5 425L170.5 426.5L169 428L169 430ZM155 424L156 422.5L156.5 421.5L157 420L157 420L155 421L155.5 422.5L155 424ZM143 407L143 406.5L144 406L143 405L143 405L143 405.5L142 406L143 407ZM140 402.5L141 402L140 401L140 400.5L140 400.5L139 400.5L140.5 401.5L140 402.5ZM141.5 412.5L143 411.5L143 410L143.5 408L143.5 408L141.5 409.5L141.5 410.5L141.5 412.5ZM164.5 418.5L165.5 417.5L167.5 417L167 415.5L167 415.5L166 416L164.5 417L164.5 418.5ZM159 393L160.5 392L161 391L160 389L160 389L159 390L159 391.5L159 393ZM152 422L152.5 421.5L153 420.5L152 419L152 419L151.5 420L151 421L152 422ZM169.5 385.5L170 384L171.5 382.5L172 380.5L172 380.5L170.5 382L169.5 383.5L169.5 385.5ZM156 373.5L156.5 372.5L157.5 371L157.5 369.5L157.5 369.5L157 370.5L155.5 372L156 373.5ZM150.5 423.5L151.5 422.5L153 421.5L153 419.5L153 419.5L151.5 420.5L150 422L150.5 423.5ZM169 368L170 367L171 366L171 365L171 365L170 366L169 367L169 368ZM155 400L155 399.5L156.5 398.5L156 397.5L156 397.5L155.5 398L154 399L155 400ZM161 404L161.5 403.5L162.5 402.5L162 401L162 401L161.5 402L160.5 402.5L161 404ZM143 403L144.5 401.5L145.5 400L146 398L146 398L144.5 399L143 401L143 403ZM167.5 370L168.5 369.5L168.5 368.5L167.5 367L167.5 367L166.5 368L166.5 368.5L167.5 370Z" fill="#2a2a2c"/>
<path d="M153 551.5L157.5 550L158.5 547L158 543L158 543L154 544.5L154.5 548.5L153 551.5ZM134.5 582L137 579.5L138.5 577L140 574L141 571.5L141 568L141 568L139.5 570.5L138 573L135.5 575.5L134.5 578.5L134.5 582ZM144 531L146.5 527.5L147.5 524L147.5 519.5L147.5 519.5L145 523L145 527L144 531ZM163.5 455.5L166.5 452.5L168.5 449.5L168 446L169 442.5L169 442.5L166 445.5L165 448.5L164 451.5L163.5 455.5ZM163.5 444L168 441.5L168.5 438.5L170.5 435L170.5 431L170.5 431L168.5 434L166 437L165.5 440.5L163.5 444ZM152.5 482.5L154.5 480.5L155.5 478L156 475.5L156 475.5L154.5 477.5L153 479.5L152.5 482.5ZM158.5 455L160.5 452.5L161.5 450L162 447L162 447L160 449.5L158.5 452L158.5 455ZM148 498L149.5 495L150.5 492L152 489L151 485.5L151 485.5L149 488L147.5 491L147.5 494.5L148 498ZM138.5 477.5L140 474.5L142.5 471L143.5 467.5L143.5 467.5L141.5 470.5L138.5 473.5L138.5 477.5ZM163 492L165 490.5L165 488.5L166 486.5L166 486.5L162.5 487.5L162.5 489.5L163 492ZM135 545L137.5 544L137 542.5L136 540L136 540L134 541.5L133.5 543L135 545ZM159.5 592.5L161.5 589.5L163 586L165 583L165.5 579.5L165.5 579.5L163.5 582.5L161 585.5L160 588.5L159.5 592.5ZM160 458.5L163 456L165.5 452.5L165 448.5L165 448.5L162.5 451L161 454.5L160 458.5ZM135.5 522.5L138 521L140 519.5L137 516.5L137 516.5L136 518L135.5 520.5L135.5 522.5ZM162 454.5L164.5 452L167 449.5L168 445.5L168 445.5L164.5 448L162.5 451L162 454.5ZM162 454L165 451.5L165.5 448.5L165.5 445.5L165.5 445.5L163 448L161.5 450.5L162 454ZM159 467.5L162 466.5L163 465L162.5 463L162.5 463L161 464L160.5 465.5L159 467.5ZM162 461.5L164.5 458.5L165.5 455L165 451L165 451L163 454L162 457.5L162 461.5ZM149 476.5L152.5 475L153.5 472.5L153 469.5L153 469.5L150.5 470.5L149 473L149 476.5ZM135.5 540.5L136.5 538.5L137.5 536L137.5 533.5L137.5 533.5L135 535.5L134 537.5L135.5 540.5ZM162 574.5L166 572L166.5 569L167 565.5L167 565.5L164 567.5L162.5 570L162 574.5ZM164.5 442L168.5 440L169 436.5L170.5 433L170.5 433L165.5 435L165.5 438.5L164.5 442ZM162.5 442L165 440.5L166.5 438.5L166 435.5L166 435.5L165 437.5L164 440L162.5 442ZM139.5 545.5L141 542.5L144 539.5L143.5 535.5L143.5 535.5L141 538.5L138.5 541.5L139.5 545.5ZM137 532L139.5 530L141 528L139.5 524.5L139.5 524.5L137 526.5L136.5 529L137 532ZM159.5 585L161.5 583L163.5 580.5L164.5 578L165.5 574.5L165.5 572L165.5 572L164 574L162.5 577L161 579L160.5 582L159.5 585ZM135 550.5L136.5 547.5L140 544.5L138.5 540.5L138.5 540.5L136 543L134 546.5L135 550.5ZM161 445L164.5 442.5L166.5 439L166 435L166 435L163.5 438L161 441L161 445ZM156.5 462L159 459L160.5 456L160.5 452.5L160.5 452.5L158.5 455L156 458L156.5 462ZM150.5 483.5L153 481L153 478L155 475L154.5 471.5L154.5 471.5L153.5 474.5L150.5 477L150.5 480L150.5 483.5ZM152 502.5L154 500L155.5 497L157 494.5L159.5 492L159.5 488.5L159.5 488.5L158 491L156 494L154.5 496.5L152.5 499.5L152 502.5ZM162 493L165 490.5L166.5 487.5L167 484L166.5 480.5L166.5 480.5L164 483L162.5 486L161.5 489L162 493ZM143.5 598L147 596L147.5 593L147.5 590L147.5 590L144.5 592L143.5 594.5L143.5 598ZM146.5 497L148.5 494L150 490.5L151 486.5L151 486.5L148.5 489.5L147 493L146.5 497ZM159.5 473L161.5 470.5L163.5 467L163.5 463.5L163.5 463.5L161.5 466.5L159 469.5L159.5 473ZM147 508L148 505.5L149.5 503L149 499.5L149 499.5L146.5 502L146 505L147 508ZM156 466.5L159.5 464.5L160 462L160.5 458.5L160.5 458.5L157.5 460.5L157 463.5L156 466.5ZM137.5 582L138.5 580L140.5 578L141 575.5L141 575.5L139.5 577L137.5 579.5L137.5 582ZM159.5 459.5L161 456.5L163 454L163 451L163 447.5L163 447.5L161.5 450.5L161 453.5L160 456.5L159.5 459.5ZM157 604L160 601.5L162 599L162.5 595.5L162.5 595.5L160 598L158.5 600.5L157 604ZM140 513.5L141.5 512L143.5 511L143 508.5L143 508.5L141 509.5L140 511L140 513.5ZM150 498.5L154 496L155.5 493L156 489L156 489L152.5 491.5L151 494.5L150 498.5ZM159 579L161 576L163 573L162.5 569L162.5 569L160 572L158.5 575L159 579ZM139 544.5L140 543L140.5 541.5L141.5 539.5L141.5 539.5L140 541L139 542.5L139 544.5ZM135 549L138.5 547L139.5 544L139.5 540L139.5 540L136.5 542L135 545L135 549ZM158.5 551L161 548.5L163.5 546.5L164 543L164.5 540L164.5 540L162 542L160 544.5L158.5 547L158.5 551ZM132.5 552.5L135.5 550.5L135.5 547.5L138 544.5L136.5 541L136.5 541L134.5 544L133 546.5L132 549.5L132.5 552.5ZM157.5 455L160 452.5L161 449.5L160.5 446.5L160.5 446.5L159 449L157 451.5L157.5 455ZM157.5 450.5L159 448L162 445.5L163 442.5L163 439L163 439L161.5 441.5L160 444.5L157.5 447L157.5 450.5ZM133.5 518.5L135.5 516L137 513L138 510L138 510L135.5 512.5L134.5 515.5L133.5 518.5ZM137.5 591L140 589.5L141 588.5L140 585.5L140 585.5L137 586.5L137.5 588.5L137.5 591ZM132.5 556.5L135.5 554L137.5 551L137.5 547L137.5 547L134.5 549L132.5 552.5L132.5 556.5ZM158.5 579L160.5 576L161 572.5L162.5 568.5L162 565L162 565L160.5 568L159 571.5L158.5 575.5L158.5 579ZM134 534.5L136.5 532L137 529L138 526L138 526L134.5 528L134.5 531.5L134 534.5ZM167.5 607L169.5 604.5L171.5 602L172.5 599L173.5 596.5L174 593L174 593L171 595L169.5 597.5L168.5 600.5L167 603.5L167.5 607ZM148 507L149.5 505L151 502.5L150.5 499.5L150.5 499.5L149 501.5L148 504.5L148 507ZM166.5 444.5L167.5 443L169.5 441.5L168.5 438.5L168.5 438.5L166.5 440L166 442L166.5 444.5ZM154 595L157 592.5L157 589.5L157.5 586.5L157.5 586.5L154.5 589L154 592L154 595ZM133 588.5L135.5 585.5L138 582L138.5 578L138.5 578L136 581.5L133.5 584.5L133 588.5ZM166 453L168 450L170 446.5L171 442.5L171 442.5L168 445.5L167 449.5L166 453ZM157 456.5L159.5 453.5L161.5 450.5L162 447L163 443L163 443L160 446L159 449.5L157.5 452.5L157 456.5ZM157.5 488.5L160 485.5L160.5 482L160.5 478.5L160.5 478.5L158 481.5L158 485L157.5 488.5ZM162.5 437L165 435.5L165.5 433L166.5 430.5L166.5 430.5L163.5 432L163.5 434.5L162.5 437ZM152.5 474.5L155.5 472.5L157.5 470L159 467.5L159 464L159 464L156.5 466L154 468L154 471.5L152.5 474.5ZM146 520.5L148.5 519L149 516.5L148 514L148 514L146 515.5L146 518L146 520.5ZM165.5 467L167.5 464.5L170 461.5L169 458L169 458L167 460.5L164.5 463.5L165.5 467ZM141 513.5L143 511L145.5 508L145.5 505L145.5 501.5L145.5 501.5L142.5 504L141.5 506.5L140.5 510L141 513.5ZM162.5 477.5L164 475.5L166 473L165 470.5L165 470.5L163.5 472.5L162.5 475L162.5 477.5ZM135 512.5L138 510L139.5 506.5L140.5 503L141.5 499.5L141.5 499.5L138.5 502L137.5 505.5L136 509L135 512.5ZM170 585.5L172 583L172 580L172.5 577L172.5 577L170 579.5L169.5 582L170 585.5ZM140.5 560.5L144 558L145.5 554.5L147 550.5L147 550.5L143.5 553.5L141.5 556.5L140.5 560.5ZM138 540.5L140.5 539L142 537L141 534L141 534L139.5 535.5L138.5 538L138 540.5ZM167.5 597L170 594.5L171 592L173.5 589.5L174 586.5L174.5 583.5L174.5 583.5L172.5 585.5L170 588L168 590.5L168 593.5L167.5 597ZM164.5 593.5L165 592L165.5 590.5L166 588.5L166 588.5L164 590L164 591.5L164.5 593.5ZM148.5 472L151 469.5L152.5 466.5L153.5 463.5L154 460L154 460L152 463L150 466L148.5 468.5L148.5 472ZM165.5 461L168 458L170 455L171.5 452L172.5 448.5L172.5 448.5L170 451.5L168 454L167 457.5L165.5 461ZM152.5 483.5L155.5 481.5L156.5 478.5L158 475.5L158.5 472L158.5 472L156 474.5L154 477.5L153 480L152.5 483.5ZM137 521L140.5 518.5L141.5 515L142.5 512L143 508.5L143 508.5L139.5 510.5L139.5 514L137.5 517L137 521ZM141 601.5L142.5 599.5L144.5 597.5L143.5 595L143.5 595L142 597L140.5 599L141 601.5ZM143 594.5L145.5 592L145.5 589.5L145.5 586.5L145.5 586.5L144.5 589L143.5 591.5L143 594.5Z" fill="#2a2a2c"/>
<path d="M153.5 583.5L155.5 581L157 578.5L156.5 575.5L156.5 575.5L155 578L153.5 580.5L153.5 583.5ZM169 572.5L171 571L172 569.5L170.5 567L170.5 567L169.5 568.5L169.5 570.5L169 572.5ZM150.5 602L154 600L154 597.5L154.5 594L154.5 594L152 596.5L150.5 598.5L150.5 602ZM154 573.5L157 571.5L158 569.5L159.5 566.5L159.5 566.5L156.5 568L155.5 571L154 573.5ZM169 607.5L171.5 606L171.5 604L172 602L172 602L170.5 603.5L169.5 605L169 607.5ZM162 601.5L164.5 600L165 598L163.5 596L163.5 596L163 597.5L162 599L162 601.5ZM161 570.5L162.5 569L163.5 567.5L163 565.5L163 565.5L162 566.5L161 568.5L161 570.5ZM151 575L153 574L153.5 573L152.5 571L152.5 571L151.5 572L151 573.5L151 575ZM152.5 565.5L155 563L156 560.5L156.5 557.5L156.5 557.5L154.5 560L154 562.5L152.5 565.5ZM162.5 603.5L164 602L164.5 600.5L164 599L164 599L163.5 600L163 601.5L162.5 603.5ZM162.5 597L164 595.5L165 593L165 590.5L165 590.5L163.5 592.5L162 594.5L162.5 597ZM159 608.5L161 606.5L162.5 604L162.5 601L162.5 601L161 603.5L159.5 605.5L159 608.5Z" fill="#bc3429"/>
<path d="M136 477h1v1h-1zM149 505h1v1h-1zM136 376h1v1h-1zM168 534h1v1h-1zM144 395h1v1h-1zM162 458h1v1h-1zM144 534h2v1h-2zM149 577h1v1h-1zM135 413h2v1h-2zM160 384h1v1h-1zM149 479h1v1h-1zM168 491h1v1h-1zM136 501h2v1h-2zM160 570h2v1h-2zM158 377h1v1h-1zM155 464h1v1h-1zM137 572h1v1h-1zM145 477h2v1h-2zM140 515h1v1h-1zM167 556h2v1h-2zM148 486h1v1h-1zM147 593h2v1h-2zM170 582h1v1h-1zM158 582h1v1h-1zM168 556h1v1h-1zM147 530h1v1h-1zM144 410h1v1h-1zM167 604h2v1h-2zM153 543h1v1h-1zM150 489h1v1h-1zM143 446h1v1h-1zM158 422h1v1h-1zM166 552h2v1h-2zM163 411h1v1h-1zM165 558h1v1h-1zM152 505h1v1h-1zM143 542h1v1h-1zM151 501h1v1h-1zM147 384h2v1h-2zM162 468h2v1h-2zM164 530h2v1h-2zM169 373h2v1h-2zM151 551h2v1h-2zM138 505h1v1h-1zM161 445h1v1h-1zM144 559h1v1h-1zM145 542h1v1h-1zM163 509h2v1h-2zM157 601h1v1h-1zM151 506h1v1h-1z" fill="#2a2a2c"/>
<path d="M161.5 488.5L163.5 487L162.5 485.5L161.5 484L161.5 484L160 485.5L160.5 487L161.5 488.5ZM162 483L164 482L164.5 481L163.5 479L163.5 479L161.5 479.5L162 481.5L162 483Z" fill="#a03c78"/>
<path d="M172 596V606H160z" fill="#c4b394"/>
</g>
<rect x="134" y="639" width="38" height="128" fill="#bc3429"/>
<g clip-path="url(#k10)">
<path d="M134 639.700H172V702.500H162.800L157.500 693.800 152.300 683.300 143.600 690.300 134 686.800z" fill="#2a2a2c"/>
<path d="M143.600 647.500L152.300 646.700 161 660.600 159.300 666.700 150.600 662.400 145.300 655.400z" fill="#bc3429"/>
<path d="M148.5 675L148.5 674L146.5 673.5L145.5 674L145.5 674L146 675.5L147.5 675.5L148.5 675ZM148.5 650.5L146.5 649L145 649.5L143.5 650.5L143.5 650.5L145 651.5L146.5 652L148.5 650.5ZM142 674L142 672L141 671.5L139 671L139 671L139 673.5L140.5 674L142 674ZM146 665L147.5 663.5L148.5 661.5L147.5 659L147.5 659L145.5 661L145.5 663L146 665ZM141 649L143.5 648L143.5 646L143.5 644L143.5 644L140.5 645L139.5 646.5L141 649Z" fill="#bc3429"/>
<path d="M170 705L169.5 703.5L168.5 702.5L166.5 702.5L166.5 702.5L167.5 704.5L168.5 704.5L170 705ZM158.5 694L161.5 694L162 693L163 691L163 691L160 691L159.5 692L158.5 694ZM146 705L148 703.5L147 701.5L147.5 699.5L147.5 699.5L145 701L145.5 702.5L146 705ZM148.5 687.5L151 687L152 686L152.5 684L152.5 684L150.5 684L149.5 685L148.5 687.5ZM160.5 686L160 685L160 684L158.5 683L158.5 683L158.5 684.5L158.5 685.5L160.5 686ZM145 697L146 698L147.5 698.5L148.5 697L148.5 697L147.5 695L146 695.5L145 697ZM145 691L147 692L148 691.5L149.5 690L149.5 690L147.5 688.5L146 688.5L145 691ZM148 699.5L150 700.5L151 700L150.5 698L150.5 698L148.5 696.5L148 698L148 699.5ZM154.5 688L155 685.5L153.5 683.5L153 682L153 682L151.5 684L152.5 686L154.5 688ZM150.5 705L150 703L148 703.5L146.5 704L146.5 704L147.5 705.5L149.5 705L150.5 705ZM143 706L142 704L140 702.5L137 702.5L137 702.5L138.5 704L141 705.5L143 706ZM153.5 706.5L155 705.5L155.5 704.5L154.5 703L154.5 703L153.5 704.5L153 705.5L153.5 706.5Z" fill="#2a2a2c"/>
<path d="M160.200 648.400L167.100 648.100 168 656.300 163.100 658.500z" fill="#be7e28"/>
<path d="M138.400 728.600L143.600 719.900 152.300 715 160.200 716.400 161 725.100 154 733.900 143.600 737.300 138 733.900z" fill="#2a2a2c"/>
<path d="M159 714.5L157.5 713.5L156.5 713L154 714L154 714L156.5 715L157.5 715L159 714.5ZM157.5 732.5L159 731L158.5 729.5L158 727.5L158 727.5L157 729L157 730.5L157.5 732.5ZM158.5 737L160.5 737L162 736.5L163 734.5L163 734.5L161 734.5L160 735.5L158.5 737ZM137 728L139 729L139 728L140.5 727L140.5 727L138.5 726.5L138 726.5L137 728ZM140 721L142 722L142.5 721.5L142 720L142 720L141.5 719.5L141 719.5L140 721ZM148.5 732L150 733L151.5 733L152.5 731.5L152.5 731.5L151.5 730.5L150 730.5L148.5 732ZM155.5 731.5L158 730.5L159 729.5L158.5 727.5L158.5 727.5L156.5 728L156 729.5L155.5 731.5ZM164 732L164.5 730L164 729.5L161.5 729L161.5 729L162.5 730.5L162.5 732L164 732ZM141.5 735.5L143.5 735.5L143 734L142.5 733L142.5 733L141.5 733.5L141.5 734.5L141.5 735.5ZM163 741.5L164.5 739.5L164 738L162 737L162 737L161.5 738.5L162 740L163 741.5Z" fill="#2a2a2c"/>
<path d="M172 713L173 712L172.5 710L172.5 708.5L172.5 708.5L170.5 710L171 711.5L172 713ZM159.5 714.5L161.5 715L161 714L162 712.5L162 712.5L159.5 712.5L160 713.5L159.5 714.5ZM163 731L164.5 731L165.5 730.5L163.5 729L163.5 729L162.5 729.5L162.5 730L163 731ZM162.5 703L163.5 703L164 702L163 701L163 701L162.5 701L162 702L162.5 703ZM163 745L164 744.5L163.5 743.5L163 742.5L163 742.5L162 743L163 744L163 745ZM171 732.5L172.5 732.5L172 731L172.5 730L172.5 730L170.5 730.5L170.5 731.5L171 732.5ZM170.5 745L172 744.5L172 743.5L171 742.5L171 742.5L170.5 743L170.5 744L170.5 745ZM161.5 736.5L163 735.5L164 734L163 732.5L163 732.5L162 734L161 735L161.5 736.5ZM165 703.5L166 702.5L165.5 702L165 701L165 701L164 701.5L163.5 702.5L165 703.5ZM163.5 727.5L163.5 726L163.5 724.5L164 723L164 723L162.5 724.5L162.5 726L163.5 727.5ZM159.5 703L161 702L162 701L162 699L162 699L160.5 700L160.5 701.5L159.5 703ZM166 713L167 712.5L167 711.5L166.5 710.5L166.5 710.5L165 711.5L166 712L166 713Z" fill="#2a2a2c"/>
<path d="M156.5 755L158 754.5L159 753.5L158.5 752L158.5 752L157 752.5L156 753L156.5 755ZM148.5 761.5L149.5 760.5L150.5 759L150 757L150 757L148.5 758L148 759.5L148.5 761.5ZM162.5 762L163.5 761.5L164 760L165.5 758.5L165.5 758.5L162.5 759L162 760L162.5 762ZM158.5 765L160.5 764L161 762.5L161.5 761L161.5 761L160 762L159.5 763L158.5 765ZM139 754.5L139.5 753.5L140 752.5L139.5 751.5L139.5 751.5L139 752.5L138 753.5L139 754.5ZM153 745L153.5 744L154.5 742.5L155 741L155 741L153 742L152 743L153 745ZM148.5 764L151 764L151 763L150 761.5L150 761.5L149 762L148.5 762.5L148.5 764ZM144 765.5L145.5 764.5L146.5 763.5L146.5 761.5L146.5 761.5L145 762.5L144 764L144 765.5ZM135.5 754L137 752.5L137 750.5L135.5 749L135.5 749L136 750.5L135.5 752L135.5 754ZM153.5 755.5L155 755.5L155.5 754L156.5 753L156.5 753L154.5 753L153.5 753.5L153.5 755.5ZM151 738L151.5 738L152 737L152 736L152 736L150 736L149.5 737L151 738ZM168.5 746.5L169 745.5L170 744L170.5 742.5L170.5 742.5L169.5 743.5L168 744.5L168.5 746.5ZM142.5 750.5L144.5 750L144.5 749.5L144.5 748.5L144.5 748.5L144 749L143.5 749.5L142.5 750.5ZM139 744.5L140 744L139.5 743L139.5 742L139.5 742L138.5 742.5L139 743.5L139 744.5Z" fill="#2a2a2c"/>
<path d="M161 756.500L168 746.900 170.600 749.600 169.700 761.800H163.600z" fill="#be7e28"/>
<path d="M156.5 751L158 750L158.5 748.5L158.5 746.5L158.5 746.5L157 748L156.5 749.5L156.5 751ZM167.5 751L167.5 750.5L168.5 749.5L167.5 749L167.5 749L167.5 749.5L166.5 750L167.5 751ZM168 764.5L169.5 764L170.5 762.5L170.5 760.5L170.5 760.5L169.5 761.5L168.5 763L168 764.5ZM166.5 756.5L167.5 755.5L168.5 754.5L167 753L167 753L167 754L165.5 755L166.5 756.5ZM157 759.5L158 759L159.5 758L159.5 756.5L159.5 756.5L158.5 757L157 758.5L157 759.5ZM165.5 766L167 765L167 763.5L168 762L168 762L166.5 763L166 764.5L165.5 766ZM158 753L159.5 752L159.5 750.5L159.5 749L159.5 749L158 750L158 751.5L158 753ZM166 761L168 760.5L167 759.5L166.5 758.5L166.5 758.5L165 759L166 760L166 761Z" fill="#2a2a2c"/>
<path d="M147 759h1v1h-1zM146 756h2v1h-2zM162 684h2v1h-2zM137 641h1v1h-1zM147 670h2v1h-2zM151 747h1v1h-1zM148 682h1v1h-1zM151 759h2v1h-2zM168 652h1v1h-1zM165 659h1v1h-1zM142 650h2v1h-2zM160 764h1v1h-1zM160 739h1v1h-1zM137 763h2v1h-2zM137 663h1v1h-1zM141 694h1v1h-1zM138 701h1v1h-1zM165 640h1v1h-1zM137 709h1v1h-1zM146 762h1v1h-1zM159 716h1v1h-1zM159 762h1v1h-1zM165 683h1v1h-1zM158 747h1v1h-1z" fill="#2a2a2c"/>
<path d="M142 669h1v1h-1zM153 698h1v1h-1zM150 651h1v1h-1zM156 695h1v1h-1zM155 681h2v1h-2zM169 659h1v1h-1zM167 675h2v1h-2zM140 686h1v1h-1z" fill="#a03c78"/>
<path d="M140 640h8v2h-8zM152 641h6v2h-6z" fill="#be7e28"/>
</g>
<rect x="188" y="61" width="37.5" height="62" fill="#2a2a2c"/>
<g clip-path="url(#k11)">
<path d="M189 119.600L188.400 106 194.500 96.500 200 83 205.400 72 213.500 64 220.300 62 223 65.300 219 76.200 213.500 87 217.600 92.500 213.500 103.300 206.700 111.400 200 119.600z" fill="#be7e28"/>
<path d="M188.400 61.300H200L198.600 69.400 193.200 79 188.400 81.600z" fill="#bc3429"/>
<path d="M220.300 72.100L225.400 70.800V87L221.600 85.700z" fill="#bc3429"/>
<path d="M188.5 68L190 67.5L191 66L190.5 64L190.5 64L189.5 65L188 66.5L188.5 68ZM192 70L194 69.5L195 69L194.5 66.5L194.5 66.5L191 66.5L191 68L192 70ZM188.5 79.5L190 79.5L190.5 78.5L190.5 77L190.5 77L188.5 77.5L188 78L188.5 79.5ZM196 65L197.5 63.5L197.5 62L197 60L197 60L194 61L195 63L196 65ZM195.5 69L197 68.5L199 68.5L200 66.5L200 66.5L198 66.5L196 67L195.5 69ZM193.5 83L196 84L196.5 83L197 81L197 81L194.5 80L194 81L193.5 83ZM190.5 93.5L193 94L193 92.5L193 91L193 91L191.5 90.5L191 91.5L190.5 93.5Z" fill="#bc3429"/>
<path d="M224.5 92L225.5 92L227 91L227 90L227 90L226 90L225 91L224.5 92ZM207.5 105L209.5 105L210 104L210.5 102.5L210.5 102.5L209 103L208 103.5L207.5 105ZM211 103L212.5 102.5L212 101.5L211 100.5L211 100.5L209.5 101L210 102L211 103ZM205.5 104.5L207.5 104L207 103.5L206.5 102.5L206.5 102.5L205.5 103L206 103.5L205.5 104.5ZM215.5 95.5L217 94.5L217.5 93.5L216 92.5L216 92.5L215 93L215 94L215.5 95.5ZM204.5 105L206.5 105L207.5 104L208 102.5L208 102.5L206.5 103L205 103.5L204.5 105Z" fill="#bc3429"/>
<path d="M211.5 91.5L213.5 90.5L214 89L214.5 87L214.5 87L212 87.5L211 89L211.5 91.5ZM198.5 98L200.5 96L201 93.5L201.5 91L201.5 91L199.5 92.5L199 95L198.5 98ZM219 79L220.5 77.5L222.5 75L224 72.5L224 72.5L221.5 74.5L219.5 76.5L219 79ZM215.5 102.5L217.5 102L217 100.5L218.5 99L218.5 99L215.5 99L215.5 100L215.5 102.5ZM216.5 108L218 106.5L219.5 105L221.5 103L221.5 103L218 104L217 105.5L216.5 108ZM196.5 117.5L198.5 116.5L200.5 113.5L201.5 111L201.5 111L199 112.5L196.5 115L196.5 117.5ZM191.5 96L192.5 94.5L194 93L193 90.5L193 90.5L192 92L191.5 94L191.5 96ZM198 76L198.5 75L199.5 74L199.5 72L199.5 72L198 73L197 74.5L198 76ZM211.5 110L214.5 108.5L215 106L216 103L216 103L213.5 105L212.5 107L211.5 110ZM204 72.5L205.5 71.5L206 70L206 68L206 68L204 69L204 70.5L204 72.5ZM207 118L209.5 116L210.5 114L211 111L211 111L208.5 112.5L207.5 115L207 118ZM204 87L206 86L206 84L206.5 82L206.5 82L204.5 83L203.5 85L204 87ZM210.5 86.5L211.5 84.5L212 82L213 79.5L213 79.5L211 81.5L209.5 83.5L210.5 86.5ZM199 85.5L201 84.5L202 83.5L202.5 82L202.5 82L200.5 82.5L200 83.5L199 85.5Z" fill="#2a2a2c"/>
<path d="M205.5 85.5L207 85.5L207 84L207 82.5L207 82.5L205.5 83L204.5 83.5L205.5 85.5ZM221 64L222 63.5L223 62L224.5 60.5L224.5 60.5L222 61L220.5 62L221 64ZM211 79L214 78L214.5 76.5L215.5 75L215.5 75L213.5 75.5L212.5 77L211 79ZM210.5 93.5L211.5 93L212 92L211.5 90.5L211.5 90.5L209.5 91L210 92.5L210.5 93.5ZM216.5 68L217.5 67L219 65.5L220.5 63L220.5 63L217.5 64.5L215.5 65.5L216.5 68ZM222.5 91.5L225 91L225.5 89.5L225.5 87.5L225.5 87.5L223 88L223 89.5L222.5 91.5Z" fill="#be7e28"/>
<path d="M200 106L206.700 103.300 213.500 108.700 210.800 115.500 201.300 115.500z" fill="#a03c78"/>
<path d="M212.100 78.900H217.600V85.700H212.800z" fill="#a03c78"/>
<path d="M215 102h2v1h-2zM216 78h1v1h-1zM206 80h2v1h-2zM220 91h2v1h-2zM214 90h1v1h-1zM222 105h1v1h-1zM223 70h2v1h-2zM208 79h1v1h-1zM209 109h1v1h-1zM220 116h1v1h-1z" fill="#a03c78"/>
<path d="M217.600 111.400L225.400 110.100V115.500H217.600z" fill="#c4b394"/>
<path d="M209 117H226V123H209z" fill="#2a2a2c"/>
</g>
<rect x="188" y="134" width="37.5" height="219" fill="#bc3429"/>
<g clip-path="url(#k12)">
<path d="M188 134H208L206.700 144.200 200 146.900 194.500 145.500 188 149.600z" fill="#2a2a2c"/>
<path d="M188 155L193.200 152.300 195.900 160.400 205.400 159 213.500 160.400 217.600 170 216.200 182 206.700 186.200 197.200 182 190.400 187.600H188z" fill="#2a2a2c"/>
<path d="M214.800 138.700L219 135.400 225.400 136V152.300H219L214.800 146.900z" fill="#2a2a2c"/>
<path d="M202.5 169L203 168.5L205 167.5L204.5 166L204.5 166L203.5 166L202 167.5L202.5 169ZM213 159L215.5 159L217 158.5L217.5 155.5L217.5 155.5L215 155.5L214.5 157L213 159ZM208 155.5L209 153.5L208.5 152.5L206 152L206 152L206 154L207 154.5L208 155.5ZM194.5 169L193.5 167L192.5 165L190.5 164.5L190.5 164.5L191 166.5L192 168L194.5 169ZM215.5 158L215 156L215 154L212 153L212 153L213 155L213 157L215.5 158ZM215 172.5L214 169.5L213 168.5L210.5 168L210.5 168L211.5 170.5L212 171.5L215 172.5ZM213.5 157L214.5 156.5L215.5 156L216 154L216 154L213.5 154L212.5 155L213.5 157Z" fill="#bc3429"/>
<path d="M192 150.5L192.5 148.5L193 147L190.5 146L190.5 146L190.5 148L190.5 149.5L192 150.5ZM223.5 172L222 170.5L220 170.5L218.5 172L218.5 172L220 172.5L222 173L223.5 172ZM210 147.5L211.5 148.5L213.5 148L214 147L214 147L213 146.5L211 146.5L210 147.5ZM209 161.5L210 159.5L210 158L207 156.5L207 156.5L208 158.5L207.5 160.5L209 161.5ZM212.5 159L214 159L214.5 158L215 156.5L215 156.5L213.5 157L212.5 157.5L212.5 159ZM200 179.5L201.5 180L203 179L203.5 178L203.5 178L202.5 178L200.5 178L200 179.5ZM190.5 142L189.5 141L189 140L187 140.5L187 140.5L187 142L188 143L190.5 142ZM224.5 153.5L225 152L224.5 151L223 150L223 150L223 151L223.5 152.5L224.5 153.5ZM223.5 172L225.5 171.5L225 171L225 170L225 170L224 169.5L224 170L223.5 172ZM214.5 187L215.5 188L215.5 187L216.5 186.5L216.5 186.5L215.5 186L215.5 186.5L214.5 187ZM202.5 173.5L204 174L207 173.5L208 171.5L208 171.5L206 171.5L203 172L202.5 173.5ZM210 158L212.5 157.5L212.5 156.5L211 155.5L211 155.5L209 156L210 157L210 158ZM198 148.5L196 147.5L195.5 146.5L194 147.5L194 147.5L195 149L195.5 149L198 148.5ZM210 160L210.5 158.5L212 157.5L210 156L210 156L210 157L209 158.5L210 160ZM203 181.5L203 180L203 178.5L201 177.5L201 177.5L200.5 179.5L201 180.5L203 181.5ZM212 161L213.5 160L214 158.5L213 157L213 157L212.5 158L211.5 159.5L212 161Z" fill="#2a2a2c"/>
<path d="M194.500 146.900L202.600 145.500 206 155 200 160.400 195.200 156.400z" fill="#be7e28"/>
<path d="M217.600 140L223 138.700 224.300 145.500 219.600 149.600 216.900 145.500z" fill="#be7e28"/>
<path d="M207.400 172.600L214.800 171.300 213.500 179.400H208.700z" fill="#be7e28"/>
<path d="M192 173h4v4h-4z" fill="#be7e28"/>
<path d="M200 153L205.400 153.700 204.700 160.400 200.600 159z" fill="#a03c78"/>
<path d="M201 321h1v1h-1zM221 271h2v1h-2zM193 258h1v1h-1zM219 334h1v1h-1zM205 347h1v1h-1zM200 216h2v1h-2zM217 277h2v1h-2zM219 300h1v1h-1zM212 331h1v1h-1zM204 296h1v1h-1zM197 301h2v1h-2zM193 299h1v1h-1zM190 220h1v1h-1zM213 215h1v1h-1zM211 313h2v1h-2zM219 225h1v1h-1zM210 281h1v1h-1zM202 232h1v1h-1zM220 302h1v1h-1zM223 234h1v1h-1zM218 297h1v1h-1zM207 323h1v1h-1zM203 349h1v1h-1zM208 288h2v1h-2zM205 336h2v1h-2zM203 291h1v1h-1zM190 271h1v1h-1zM199 327h2v1h-2zM196 221h1v1h-1zM205 217h2v1h-2zM194 279h1v1h-1zM212 213h1v1h-1zM219 197h1v1h-1zM191 326h1v1h-1zM197 336h1v1h-1zM206 309h1v1h-1zM191 202h1v1h-1zM223 336h1v1h-1zM190 294h1v1h-1zM221 339h2v1h-2zM216 317h2v1h-2zM202 308h1v1h-1zM214 264h2v1h-2zM217 266h2v1h-2zM210 291h1v1h-1zM197 235h2v1h-2zM221 293h2v1h-2zM211 217h1v1h-1zM209 313h1v1h-1zM214 247h1v1h-1zM195 259h1v1h-1zM192 341h1v1h-1zM215 249h2v1h-2zM199 199h1v1h-1zM202 323h1v1h-1zM204 298h1v1h-1zM200 225h1v1h-1zM209 202h1v1h-1zM204 209h1v1h-1zM203 241h2v1h-2zM215 205h1v1h-1zM224 290h2v1h-2zM197 229h1v1h-1zM197 220h1v1h-1zM207 322h2v1h-2zM190 315h1v1h-1zM198 196h2v1h-2zM193 234h1v1h-1zM217 343h2v1h-2zM219 327h1v1h-1z" fill="#2a2a2c"/>
<path d="M189 233L190.5 233L191 232L191 231L191 231L190.5 231.5L189.5 232.5L189 233ZM217.5 213.5L218 212L219 210.5L218.5 209L218.5 209L218 210L217 211.5L217.5 213.5ZM213.5 310.5L215 309.5L214.5 308.5L215 307L215 307L213.5 308L213.5 309L213.5 310.5ZM199 324.5L201 324L201.5 322.5L202 321L202 321L200.5 322L200 323L199 324.5ZM213.5 243.5L214 242.5L215 242L214 240.5L214 240.5L214 241.5L212.5 242L213.5 243.5ZM207.5 224.5L207.5 223.5L209 222.5L208.5 221.5L208.5 221.5L207.5 222L206.5 223L207.5 224.5ZM187.5 209L188.5 208.5L188.5 207.5L189 206.5L189 206.5L187.5 207L187 208L187.5 209ZM193.5 247.5L193.5 247L194 246L194 245.5L194 245.5L193.5 246L193 246.5L193.5 247.5ZM222 297L222 296L222.5 295L222.5 293.5L222.5 293.5L221.5 294.5L221 295.5L222 297ZM218.5 244.5L219 243.5L219 242L219.5 241L219.5 241L218 242L218 243L218.5 244.5Z" fill="#2a2a2c"/>
<path d="M205 283l3-5 2 1-1 6-3 1z" fill="#be7e28"/>
</g>
<rect x="188" y="357" width="37.5" height="109" fill="#bc3429"/>
<g clip-path="url(#k13)">
<path d="M188 357H206L198 362 188 366z" fill="#2f7fe0"/>
<path d="M210 359h1v1h-1zM209 412h2v1h-2zM221 365h2v1h-2zM224 437h2v1h-2zM202 425h1v1h-1zM217 434h2v1h-2zM201 443h1v1h-1zM223 392h1v1h-1zM219 439h1v1h-1zM194 374h1v1h-1zM212 361h1v1h-1zM193 378h1v1h-1zM208 434h2v1h-2zM197 367h2v1h-2zM210 456h2v1h-2zM193 396h1v1h-1zM205 388h2v1h-2zM221 378h2v1h-2zM223 399h2v1h-2zM223 436h1v1h-1zM211 440h1v1h-1zM206 367h1v1h-1zM217 391h2v1h-2zM204 434h1v1h-1zM192 429h1v1h-1zM196 407h1v1h-1zM221 432h1v1h-1zM204 422h1v1h-1zM199 422h2v1h-2zM210 380h2v1h-2zM217 381h1v1h-1zM190 439h1v1h-1zM218 434h2v1h-2zM209 383h1v1h-1zM210 359h1v1h-1zM216 373h1v1h-1zM208 374h1v1h-1zM210 376h1v1h-1zM196 458h2v1h-2zM193 419h1v1h-1zM190 384h1v1h-1zM189 460h1v1h-1zM201 459h1v1h-1zM193 408h1v1h-1zM200 420h2v1h-2z" fill="#2a2a2c"/>
<path d="M202.5 388L204.5 387.5L204.5 386.5L205 385L205 385L203 386L203 387L202.5 388ZM194 441.5L195.5 441.5L195.5 440.5L195.5 439.5L195.5 439.5L194 440L194 440.5L194 441.5ZM190.5 392.5L192 391.5L192 390.5L193 389L193 389L190.5 389.5L191 391L190.5 392.5ZM194 397L195.5 396.5L195.5 396L195.5 395L195.5 395L194.5 395.5L194.5 396L194 397ZM225.5 403L226.5 402.5L226 401L227 400L227 400L225 400.5L225.5 401.5L225.5 403ZM194 425.5L195.5 425L195.5 424L195.5 422.5L195.5 422.5L194.5 423.5L194 424L194 425.5Z" fill="#2a2a2c"/>
<path d="M226 458V466H216z" fill="#c4b394"/>
</g>
<rect x="188" y="500" width="37.5" height="264" fill="#bc3429"/>
<g clip-path="url(#k14)">
<path d="M188 500H200L188 508z" fill="#c4b394"/>
<path d="M194 500H212L196 508z" fill="#2a2a2c"/>
<path d="M213 576h2v1h-2zM196 588h1v1h-1zM222 559h2v1h-2zM191 524h1v1h-1zM213 544h1v1h-1zM220 516h2v1h-2zM197 572h1v1h-1zM197 539h1v1h-1zM208 534h1v1h-1zM199 520h1v1h-1zM198 594h1v1h-1zM198 573h2v1h-2zM202 575h1v1h-1zM224 536h1v1h-1zM189 558h1v1h-1zM199 546h1v1h-1zM202 526h1v1h-1zM212 512h2v1h-2zM198 552h1v1h-1zM213 546h1v1h-1zM203 555h1v1h-1zM224 547h1v1h-1zM219 536h2v1h-2zM204 520h1v1h-1zM199 527h2v1h-2zM222 551h2v1h-2zM213 536h1v1h-1zM209 526h2v1h-2zM210 529h2v1h-2zM223 552h2v1h-2zM205 511h1v1h-1zM201 591h1v1h-1zM223 524h1v1h-1zM189 514h2v1h-2zM190 529h1v1h-1zM222 531h1v1h-1zM214 571h1v1h-1zM222 587h2v1h-2zM218 558h2v1h-2zM193 567h1v1h-1z" fill="#2a2a2c"/>
<path d="M199 565L200.5 563.5L203 561.5L202.5 559L202.5 559L201 560.5L198.5 562L199 565ZM208 557.5L210 556L210.5 554.5L211.5 552.5L211.5 552.5L209.5 554L208.5 555.5L208 557.5ZM223 604L224.5 603L225.5 601.5L225 599.5L225 599.5L224 600.5L223.5 602L223 604ZM197 570.5L199 568.5L198.5 566L199 563.5L199 563.5L197 565.5L197.5 568L197 570.5ZM201.5 610.5L202.5 609.5L203.5 608L202.5 606L202.5 606L200 607L201 609L201.5 610.5ZM208 608L209 607L210 606L209.5 604.5L209.5 604.5L208.5 605L207.5 606.5L208 608ZM201 609.5L204 608.5L204 606L203.5 603.5L203.5 603.5L201.5 605L201.5 607L201 609.5ZM194.5 597L195.5 595.5L196 594.5L196.5 592.5L196.5 592.5L194 593.5L193.5 595L194.5 597ZM220.5 611L223 608.5L223 606L222.5 603.5L222.5 603.5L221.5 606L221 608L220.5 611ZM200 584.5L202.5 584.5L202.5 582.5L202.5 581L202.5 581L200.5 581.5L199.5 582.5L200 584.5ZM203.5 594L205.5 593L205.5 591.5L205.5 589.5L205.5 589.5L204 590.5L203.5 592L203.5 594ZM222 601L222 600.5L222.5 599L222.5 597.5L222.5 597.5L221 598.5L221 600L222 601ZM199 558L200 557.5L201.5 556L201 554.5L201 554.5L200.5 555.5L198.5 556.5L199 558ZM204 572L204.5 571L205.5 570L205 568.5L205 568.5L204.5 569.5L203.5 571L204 572Z" fill="#2a2a2c"/>
<path d="M205.5 629L210.5 627L210.5 623L211 619L211 619L207 621L205.5 624.5L205.5 629ZM222 699.5L226 696.5L227.5 693L227.5 689L227.5 689L224.5 691.5L222 694.5L222 699.5ZM222.5 609.5L225 608L226.5 605L227 602L227 602L223.5 603.5L221.5 606L222.5 609.5ZM203.5 689.5L208 687.5L208.5 684.5L211 681.5L210 677.5L210 677.5L208.5 680L204.5 682L204.5 686L203.5 689.5ZM196.5 600L200 597.5L201.5 594L201.5 589.5L201.5 589.5L198.5 592.5L197 596L196.5 600ZM217.5 679.5L221.5 677L222.5 673.5L224 670L224 670L219.5 672L219 675.5L217.5 679.5ZM186 734.5L190 733L191 730L190.5 726.5L190.5 726.5L188 728L186 730.5L186 734.5ZM191.5 667.5L195 665L196 661L196.5 657.5L196.5 657.5L193 659.5L192 663.5L191.5 667.5ZM221 751L224 748.5L226 746L225.5 742.5L225.5 742.5L223 744.5L222 747.5L221 751ZM195 760L198.5 757.5L200.5 754.5L202 751L203.5 747.5L203.5 747.5L199.5 749.5L198 753L195.5 755.5L195 760ZM208.5 719L210.5 716.5L214.5 714L213.5 709.5L213.5 709.5L211 712L208 715.5L208.5 719ZM193 658L196 656L197.5 652.5L198 648.5L198 648.5L194 650.5L192.5 654L193 658ZM218 675L223 673L223.5 670L225 667L225 663L225 663L221.5 665.5L219.5 668L219 671L218 675ZM187 732L190 729.5L191 726.5L192.5 723.5L192 719.5L192 719.5L190 722.5L187.5 725.5L187 728.5L187 732ZM201.5 618.5L205.5 617L206 613.5L207 610.5L207 610.5L204 612L203 615L201.5 618.5ZM217 683L220 680.5L220 677L220 673.5L220 673.5L216.5 676L216 679L217 683ZM215 690.5L217.5 688L219 685L220.5 682L220.5 678.5L220.5 678.5L218 681L215.5 683.5L215 687L215 690.5ZM200 715.5L202.5 712.5L203.5 709L205.5 705.5L205 702L205 702L203 705L201.5 708.5L200.5 712L200 715.5ZM190 673.5L191.5 672L194 670.5L193 667.5L193 667.5L191.5 669L189.5 670.5L190 673.5ZM208.5 659.5L211.5 656.5L212 653.5L214.5 650L214.5 646.5L214.5 646.5L212.5 649L209.5 652L209 655.5L208.5 659.5ZM209 754.5L213.5 753L213.5 749.5L215 747L215.5 743.5L215.5 743.5L211.5 745L210 748L210.5 751.5L209 754.5ZM202 726.5L205 724.5L207 721.5L208 718.5L208 718.5L204 720L202 723L202 726.5ZM208 762L211 760L213.5 756L214.5 752.5L214.5 752.5L212 755L209 758.5L208 762ZM192.5 633L195 631.5L196 628L198 625L198 625L194 627L192.5 629.5L192.5 633ZM209 717.5L213 717L213.5 714.5L212.5 712L212.5 712L209.5 713L210 715.5L209 717.5ZM190 667L193.5 666L195 664L194 661L194 661L192 662L191 664.5L190 667ZM222.5 753.5L227.5 752.5L228 749L228 745.5L228 745.5L225 747L224 750L222.5 753.5ZM213 744L215.5 741L216.5 737L217 733L217 733L215 736.5L212.5 739.5L213 744ZM215.5 600L217 597L218 593.5L220.5 590.5L220.5 587L220.5 587L218.5 590L216.5 593L214.5 596L215.5 600ZM186 716L189 714L190.5 711.5L191.5 708.5L192.5 705.5L193.5 702.5L193.5 702.5L191 705L189.5 707.5L188 710L187 713L186 716ZM191.5 660L195.5 658L198 655.5L199 653L199.5 649L200.5 645.5L200.5 645.5L197 647.5L195 650.5L193.5 653L192 656L191.5 660ZM193.5 692.5L196.5 691.5L197.5 689.5L197.5 687L197.5 687L195 688L194 690L193.5 692.5ZM217 637.5L219 634.5L221.5 632L222 628.5L222 628.5L219 631L217 633.5L217 637.5ZM193 688L195 686L197 683.5L197 680L197 680L194.5 682L193.5 685L193 688ZM200 669.5L202.5 668.5L205 666.5L204 663.5L204 663.5L201.5 665L200 667L200 669.5ZM209.5 600L211.5 597.5L214 595L214 592L214 592L212.5 594L209.5 596.5L209.5 600ZM186 691.5L189 689L191.5 686L192 682L192 678.5L192 678.5L190 681.5L188 684L186.5 687.5L186 691.5ZM198 621L201 618L202 614.5L201.5 610L201.5 610L199 613.5L198.5 617L198 621ZM211 633.5L213.5 632L214.5 629L215 626.5L215 626.5L212 628L210 630L211 633.5ZM197.5 709L201.5 707.5L202.5 704L203 700L203 700L199.5 702L198 705.5L197.5 709ZM191 598L193.5 597L194.5 594.5L195 592L195 592L191.5 593L189.5 595L191 598ZM207.5 668L210.5 665.5L212 663.5L213.5 660.5L213 657L213 657L211 659.5L209 662L208 664.5L207.5 668ZM214 623L217.5 621.5L218.5 619.5L219.5 616.5L219.5 616.5L216 617.5L214.5 619.5L214 623ZM217 760.5L220 760L220.5 758L220.5 755.5L220.5 755.5L217 756.5L217 758L217 760.5ZM211 619.5L214.5 617L216 615L217 612L215.5 608L215.5 608L213 610L210 612.5L210 615.5L211 619.5ZM223.5 625L226 623.5L227 621L226.5 618.5L226.5 618.5L224.5 620L223 622L223.5 625ZM210.5 661.5L212.5 660L214 658.5L213 656L213 656L211 657L210.5 659L210.5 661.5ZM219 651.5L222.5 649.5L222.5 647L222 643.5L222 643.5L219 645.5L219 648.5L219 651.5ZM216.5 745.5L220 744L220 740.5L221.5 738L222.5 735L222.5 731.5L222.5 731.5L220.5 734L217 736L218 739.5L216.5 742.5L216.5 745.5ZM187.5 757L189.5 755L191.5 752L191.5 749L191.5 749L188.5 751L187 753.5L187.5 757ZM198 688L200.5 686L201.5 683L203 680L205 677.5L204.5 674L204.5 674L202.5 676L200.5 679L199.5 682L198.5 684.5L198 688ZM204 653.5L208 651.5L208 648.5L208 645L208 645L205.5 647L204.5 650L204 653.5ZM221.5 609.5L225 607L226.5 604L227.5 600L229.5 596.5L229.5 596.5L225 599L223.5 602L222.5 605.5L221.5 609.5ZM199 602L201.5 600.5L201.5 598L202 595L202 595L199 596.5L199 599.5L199 602ZM222 659.5L225 656.5L226.5 653L227 648.5L227 648.5L222 651L221.5 655L222 659.5ZM219.5 604L221.5 602.5L223 600L222 597L222 597L220.5 599L218 601L219.5 604ZM216.5 728L220.5 726L222.5 722L222.5 718L222.5 718L219.5 720.5L216.5 724L216.5 728ZM215 646.5L218 646L218.5 643.5L218 640.5L218 640.5L215 641L214.5 643.5L215 646.5ZM210 719L211.5 716.5L214.5 714.5L216.5 711.5L216 708L218 705L218 705L214 707L213 709.5L212 713L209.5 715.5L210 719ZM193.5 734L195.5 731L197.5 727.5L199.5 724.5L199 720.5L199 720.5L197.5 723.5L195.5 727L193.5 730.5L193.5 734ZM201.5 753.5L205 751L206 747L205.5 743.5L205.5 743.5L203 746L202 749.5L201.5 753.5ZM205 753L207 750L208.5 747L210 743.5L210 740L210 740L207.5 742.5L206.5 746L205 749.5L205 753ZM204.5 644.5L207.5 642L209.5 639.5L211 636.5L212.5 634L213 630.5L213 630.5L211.5 633L209.5 636L207.5 638L206.5 641L204.5 644.5ZM185.5 602L188.5 600L190 597.5L192 595.5L194 592.5L193 589L193 589L190 590.5L189 593.5L187.5 596L185.5 598.5L185.5 602ZM190.5 752L194.5 750L195 747L197 744.5L196.5 740.5L196.5 740.5L194 743L191 745L190.5 748L190.5 752ZM200 671.5L202 669L205 666L204.5 662.5L205 659.5L205 659.5L202 662L201 664.5L199.5 668L200 671.5ZM203.5 689L207 687.5L206.5 685.5L207 682.5L207 682.5L203 683.5L204.5 686.5L203.5 689ZM200.5 702.5L203 700.5L203.5 697.5L204 694L204 694L201 696.5L200 699L200.5 702.5ZM198.5 650.5L201 648.5L201.5 646L202.5 643L202.5 643L199.5 644.5L198.5 647L198.5 650.5ZM201 755L204 752L207 749.5L207.5 745.5L208 741.5L208 741.5L204 744L203 747.5L202 751L201 755ZM202.5 746L205.5 745L206 743L206 740.5L206 740.5L204 741.5L202.5 743.5L202.5 746ZM209.5 736.5L213 735L214.5 732.5L214.5 729L214.5 729L211.5 731L210 733.5L209.5 736.5ZM210 760L213 757.5L215.5 755L214.5 751L214.5 751L212 753.5L210 756.5L210 760ZM195.5 673.5L200.5 672L201 669L200.5 665.5L200.5 665.5L197 667L195.5 669.5L195.5 673.5ZM215 661L217.5 659L218.5 655.5L218.5 652L218.5 652L214.5 654L214 657.5L215 661ZM192.5 625L194.5 622L197 619L198.5 614.5L198.5 614.5L194 617L192.5 621L192.5 625ZM222 754.5L223 752L225.5 749.5L226 746.5L227 743.5L227 740L227 740L225 742.5L223.5 745.5L222.5 748L221.5 751.5L222 754.5ZM201.5 682L204 679L207 676L206 671.5L206 671.5L202 674L201 678L201.5 682ZM207.5 623L210 621L211 617.5L212.5 614.5L213.5 611L212.5 607.5L212.5 607.5L210 609.5L208.5 613L206.5 616L207 619.5L207.5 623ZM209.5 738L212.5 736L213.5 733L215 731L216.5 727.5L216 724.5L216 724.5L214.5 727L212.5 729.5L211 732L211 735L209.5 738ZM201 738.5L204 736.5L205.5 733.5L207 731L207.5 727L207.5 727L205 729.5L203.5 732.5L202 735.5L201 738.5ZM221.5 720.5L224 718.5L225 715.5L226 712.5L226 712.5L222.5 714.5L221.5 717L221.5 720.5ZM203.5 693.5L207 690.5L208.5 687L208.5 683L208.5 683L206 686L205 689.5L203.5 693.5ZM204.5 756L206.5 753.5L208.5 750.5L208 747L208 747L207 749.5L203.5 752L204.5 756ZM202.5 664L204 661L207 658L206.5 654.5L207 651L207 651L205 654L203 657L202.5 660.5L202.5 664ZM197.5 741L201.5 739.5L202 736.5L204 734.5L203.5 730.5L203.5 730.5L200 732L198 734.5L197.5 737.5L197.5 741ZM217.5 653.5L219.5 651.5L221.5 649.5L223.5 647L223 643.5L223 643.5L220.5 645L219 647.5L218 650.5L217.5 653.5ZM213.5 736.5L216 734L217.5 730.5L220 727L219.5 723L219.5 723L216.5 725.5L214.5 729L212.5 732L213.5 736.5ZM219.5 739.5L222 737.5L224.5 734.5L225.5 732L226.5 728.5L226.5 725.5L226.5 725.5L224.5 728L222.5 730.5L221.5 733L220.5 736.5L219.5 739.5ZM197 645L200 642L200.5 639L201.5 635L202 631.5L202 631.5L199.5 634.5L198.5 638L197.5 641.5L197 645ZM209.5 724L212.5 721.5L214.5 719L216.5 716.5L217.5 714L217 710L217 710L214.5 712.5L212.5 714.5L210.5 717.5L210 720L209.5 724ZM213 634L216.5 632.5L218.5 629.5L219 626L219 626L215 627.5L213 630L213 634ZM198 723L199.5 721.5L202.5 719.5L201 716L201 716L199 718L196 720L198 723ZM216 721L217.5 718L220 715L220 711L220 711L217.5 713.5L216 717L216 721ZM202.5 643L205.5 641.5L206 639L205.5 636L205.5 636L202.5 637.5L202 640L202.5 643ZM196.5 706L199 704L199.5 701.5L200 699L200 699L197.5 701L197.5 703L196.5 706ZM187.5 766L191.5 764L192.5 760.5L195.5 757.5L196 754L196 754L193.5 756.5L191 759.5L189 762.5L187.5 766ZM218 684.5L220.5 682L222.5 679L221.5 675.5L221.5 675.5L218.5 677.5L217 680.5L218 684.5ZM209.5 672.5L212.5 669.5L215.5 666L216 662L216 662L213 665L209.5 668L209.5 672.5ZM211 637L214.5 634.5L216.5 632L219 629L218.5 625L218.5 625L216 627.5L213.5 630L211.5 632.5L211 637ZM200.5 647L202 645L205 642.5L205.5 639L206 636L206 636L204 638.5L202.5 641L200 643.5L200.5 647ZM223.5 629L225.5 628L227 625.5L227 622.5L227 622.5L224.5 624L222.5 626L223.5 629ZM218 692L220 689.5L220.5 686.5L224 683.5L222 680L222 680L219.5 682L217.5 685L216.5 688L218 692ZM202.5 737L205 735L207.5 732.5L207 729.5L207 729.5L205 731.5L203 733.5L202.5 737ZM218 670L221 668.5L223 665.5L223.5 661.5L223.5 661.5L220 663.5L218 666.5L218 670ZM188 605.5L191 603.5L192 601L191.5 598L191.5 598L189.5 599.5L188.5 602L188 605.5ZM212 658.5L214.5 655.5L216.5 652L216.5 648.5L216.5 648.5L214.5 651.5L213 654.5L212 658.5ZM207.5 726L209.5 724.5L210 723L209.5 720.5L209.5 720.5L208 722L207 723.5L207.5 726ZM213.5 760L217 758.5L218 756L217 753L217 753L215 754.5L214 757L213.5 760ZM188 729L190.5 727.5L192 725L192.5 722L192.5 722L190.5 724L188.5 726L188 729ZM203 704.5L205.5 702L207 699L208.5 695.5L208 692L208 692L206 694.5L203 697L202.5 700.5L203 704.5ZM203.5 764L206 763L206.5 761L207 758.5L207 758.5L204 759.5L203.5 761.5L203.5 764ZM209.5 653L212.5 651.5L213.5 649L213 645.5L213 645.5L210.5 647.5L209.5 650L209.5 653ZM196 635.5L200.5 633L202 629.5L202.5 625.5L202.5 625.5L199.5 628L196 630.5L196 635.5ZM205 622L206 620L208 618L208.5 615.5L208.5 615.5L206 617L204 619L205 622ZM212.5 747L214 744L216 741L217 737.5L218 734.5L218 734.5L215 737L212.5 740L212 743L212.5 747ZM207.5 688L210 685.5L211 683L213 680L215.5 677L215 673.5L215 673.5L213 675.5L210.5 678.5L208.5 681.5L208 684.5L207.5 688ZM205 744L209 743L210.5 740L210 736L210 736L206 737.5L204.5 740.5L205 744ZM208 654.5L210 652L211.5 648.5L212.5 645.5L213 642L213 642L210.5 644.5L210 648L208.5 651L208 654.5ZM201.5 618L205.5 616.5L205.5 613L204.5 609.5L204.5 609.5L202 611.5L200 614.5L201.5 618ZM211 770.5L214.5 768L217 765L217.5 761.5L217 757.5L217 757.5L214.5 760L211.5 763L210.5 766.5L211 770.5ZM184.5 734.5L187.5 733L189 730L190.5 727.5L193 725.5L193.5 722L193.5 722L190.5 723.5L188 726L187 728.5L186 731.5L184.5 734.5ZM217 682L219.5 679.5L220.5 676.5L222.5 673.5L223 669.5L223 669.5L220 672L217.5 675L217 678L217 682ZM195.5 727L198 725L200 722.5L201.5 719.5L203 716.5L203 713L203 713L201 715.5L198 717.5L197 720.5L196 724L195.5 727ZM215 711.5L217.5 709.5L219 707L220 704L222 701.5L221.5 698L221.5 698L220 700.5L217.5 703L217 706L215.5 708.5L215 711.5ZM199 657L201.5 655L203.5 652.5L205 650L204 646L204 646L201 647.5L200 650.5L199 653.5L199 657ZM216.5 750L219.5 747.5L221 744.5L222 741.5L222.5 738L222.5 738L219 740L217.5 743.5L217 746.5L216.5 750ZM198.5 674L200.5 671.5L202.5 668.5L202.5 665.5L202.5 662.5L202.5 662.5L201 665L199.5 667.5L198 670.5L198.5 674ZM198 604L201 602L202 599L201 595.5L201 595.5L199.5 598L198.5 601L198 604ZM186 636.5L189.5 634L191.5 631.5L192 628L192 625L193.5 621.5L193.5 621.5L190 624L189.5 627L187 629.5L186 632.5L186 636.5ZM188.5 741L190 738.5L192.5 735.5L194.5 733L195.5 729.5L195 726L195 726L193.5 728.5L191 731.5L189 734.5L188.5 738L188.5 741ZM206 661L208 659.5L209 657L208.5 654L208.5 654L205.5 655.5L205.5 658.5L206 661ZM192.5 730.5L196 729.5L196.5 727L197 723.5L197 723.5L193 725L192 727.5L192.5 730.5ZM200 706L202.5 704L204.5 701.5L203 698L203 698L200 699.5L200 703L200 706ZM206 740.5L209.5 739L209 736.5L209.5 734L209.5 734L207 736L206.5 737.5L206 740.5ZM186.5 735.5L189.5 733L192 730.5L193.5 727.5L194.5 724.5L195 721L195 721L192.5 723.5L191 726L190 729.5L187.5 732L186.5 735.5ZM201.5 758L204.5 755.5L206.5 752.5L208 750L209 746L209 746L205 748L203.5 751L203 754.5L201.5 758ZM207.5 716L211.5 713.5L212 710.5L212 707L212.5 703.5L212.5 703.5L210 706L207.5 709L207.5 712L207.5 716ZM203 696L205 693.5L207 690.5L207.5 687L207.5 683.5L207.5 683.5L205.5 686L204.5 689.5L203 692.5L203 696ZM186 600L189.5 597.5L190.5 594L192.5 590L192.5 590L188 592.5L186.5 596L186 600ZM221 610L223 609L224 607.5L224.5 604.5L224.5 604.5L221 605.5L220 607.5L221 610ZM207 662L209 660.5L211 659L211.5 656L211.5 656L208.5 657.5L206.5 659L207 662ZM194 754.5L197 753.5L198 752L197 749L197 749L193.5 749.5L193 751.5L194 754.5ZM189 645.5L191 644.5L193 642.5L192.5 639.5L192.5 639.5L190.5 641L189 643L189 645.5ZM194 756L198.5 755L198 752L198.5 748.5L198.5 748.5L195.5 750.5L194 752.5L194 756ZM219.5 752L222.5 750L223.5 747L224 743.5L224 743.5L220.5 745.5L219.5 748.5L219.5 752ZM195 752L196.5 750L200 748L201.5 745.5L201 742L203 739L203 739L199.5 741L198.5 743.5L196.5 746L195 749L195 752ZM214.5 613.5L218 611.5L220 609L218 605L218 605L215.5 607L214.5 610L214.5 613.5ZM187 689L191 687.5L193 684.5L192.5 680L192.5 680L188.5 682L187.5 685.5L187 689ZM218 631L222 629.5L223 626.5L223 623.5L225.5 621L225.5 617L225.5 617L222 619L220.5 622L219 624.5L218.5 627.5L218 631Z" fill="#2a2a2c"/>
<path d="M188 657.100L194.600 651.900 195.500 664.100 189.400 669.300z" fill="#be7e28"/>
<path d="M205.100 707.700L215.600 695.500 224.300 693.700 222.500 704.200 212.100 711.200 208.600 721.600 210.300 735.600 203.300 737.300 202.500 721.600z" fill="#be7e28"/>
<path d="M199.900 756.500L208.600 742.500 224.300 737.300 225.500 761.700 201.600 764z" fill="#be7e28"/>
<path d="M205.100 617H212.100L210.300 624 205.100 625.700z" fill="#be7e28"/>
<path d="M186 623.5L188 621L190.5 619L191 615.5L191 615.5L189 618L186.5 620L186 623.5ZM193.5 682.5L195.5 681.5L195.5 680L196.5 678.5L196.5 678.5L194.5 679L194.5 681L193.5 682.5ZM216.5 691.5L218.5 689.5L219.5 687L219 684.5L219 684.5L218 686.5L217 688.5L216.5 691.5ZM187.5 673.5L188.5 672L189.5 670L189.5 667.5L189.5 667.5L188 669.5L187 671.5L187.5 673.5ZM216.5 700L218 698L218.5 696L218.5 693.5L218.5 693.5L217 695L216 697.5L216.5 700ZM224 610.5L224.5 609L226.5 607.5L226.5 605L226.5 605L224 606.5L223 608.5L224 610.5ZM196 696.5L198.5 694.5L199 692L199.5 689.5L199.5 689.5L198 691.5L197.5 694L196 696.5ZM205 656.5L206.5 655.5L207.5 654.5L207.5 652L207.5 652L206 653.5L204.5 654.5L205 656.5ZM197 675L199.5 673L200.5 671L200 668L200 668L198 670L197 672L197 675ZM195 624.5L197.5 622.5L199 620L199.5 617L199.5 617L198 619L196 621.5L195 624.5Z" fill="#be7e28"/>
<path d="M193 716.5L195.5 715.5L196 713.5L196.5 711L196.5 711L194 712L193 714L193 716.5ZM191.5 623L192.5 622L194 620L193.5 618.5L193.5 618.5L193 620L191 621L191.5 623ZM193 704.5L194.5 703L196 701L195.5 698.5L195.5 698.5L193 700L192 702L193 704.5ZM222.5 750.5L225 748L226.5 745L226 741.5L226 741.5L224.5 744L222.5 747L222.5 750.5ZM207 702.5L209.5 700.5L211.5 698.5L212.5 696L212.5 696L210 698L208.5 700L207 702.5ZM222 760.5L224 759L225 757.5L224 755.5L224 755.5L223.5 757L222.5 758.5L222 760.5ZM204.5 751L207 749.5L207 747.5L207.5 745L207.5 745L205.5 746.5L205 748L204.5 751ZM218.5 675L220 673.5L221 671L221 669L221 669L220 670.5L219 672.5L218.5 675ZM191 636.5L193 634.5L195 632L194 629L194 629L193 631L191.5 634L191 636.5ZM192 734L193.5 733L193.5 731.5L194 729.5L194 729.5L192 730.5L192.5 732.5L192 734ZM201 607L203 605L203.5 602.5L204 600L204 600L202 602L201.5 604.5L201 607ZM210 732.5L211.5 730L212.5 726.5L213.5 723.5L213.5 723.5L211 726L210 729.5L210 732.5ZM198.5 753L201 751L203 749L203 746.5L203 746.5L201.5 748L199.5 750.5L198.5 753ZM207.5 688.5L210.5 686.5L212 684L213.5 680.5L213.5 680.5L210.5 683L209.5 685.5L207.5 688.5ZM215.5 651.5L218.5 650.5L218.5 648.5L219 646.5L219 646.5L217 647.5L216.5 649.5L215.5 651.5ZM192.5 637.5L194.5 635L195 633L196 630.5L196 630.5L193.5 632.5L193 634.5L192.5 637.5ZM202.5 656.5L204.5 655L205.5 653.5L204 651.5L204 651.5L202.5 652.5L202.5 654.5L202.5 656.5ZM201.5 761.5L202.5 759L204 756L205.5 753L205.5 753L203 755.5L200.5 758L201.5 761.5ZM215 623.5L217.5 621L218.5 618.5L219.5 615.5L219.5 615.5L217 618L216 620.5L215 623.5ZM199.5 735L202 733L202.5 730L202.5 727L202.5 727L200.5 729L200 732L199.5 735ZM214 761.5L215.5 759.5L216.5 756.5L217 753.5L217 753.5L214 755.5L214 758.5L214 761.5ZM208.5 661.5L211 660L212.5 657.5L214 655L214 655L211 656.5L209.5 659L208.5 661.5Z" fill="#bc3429"/>
<path d="M205.5 714L207.5 713L208 711.5L209 709.5L209 709.5L207 711L206.5 712L205.5 714ZM214 745L215.5 743.5L216 741.5L217.5 739L217.5 739L214.5 741L214 742.5L214 745ZM221 750L222 749.5L224 748.5L223 746.5L223 746.5L222 747.5L220.5 748.5L221 750ZM204 759.5L205.5 758.5L207 756.5L207.5 754.5L207.5 754.5L206 756L204.5 758L204 759.5ZM213.5 726.5L216 726L216.5 725L215.5 723.5L215.5 723.5L214.5 724L213.5 725L213.5 726.5ZM197.5 734L199.5 733L200.5 731.5L201 729.5L201 729.5L198.5 730.5L198 732L197.5 734ZM221 760L222.5 759.5L223 759L222.5 757.5L222.5 757.5L221 757.5L220.5 758.5L221 760ZM222 733L224 732L225.5 730.5L225.5 728.5L225.5 728.5L224.5 730L223 731.5L222 733ZM220.5 725L221.5 724L221.5 722.5L222.5 721L222.5 721L220 722L220 723L220.5 725ZM203 747L204.5 746L205.5 744L205 742L205 742L204 743.5L203 745L203 747ZM196 746.5L197.5 745.5L198.5 744L198.5 743L198.5 743L197.5 743.5L196.5 745L196 746.5ZM213.5 702.5L215.5 701.5L215.5 699.5L215.5 698L215.5 698L214.5 699L214 700.5L213.5 702.5ZM205.5 757.5L207 756L208 753.5L208.5 751L208.5 751L206 753L205 755L205.5 757.5ZM220.5 765L222.5 764L223.5 763L223 761L223 761L221.5 761.5L221 763.5L220.5 765Z" fill="#2a2a2c"/>
<path d="M206 629h1v1h-1zM216 749h2v1h-2zM208 736h1v1h-1zM199 727h2v1h-2zM209 686h1v1h-1zM203 669h1v1h-1zM210 731h1v1h-1zM214 719h1v1h-1zM195 672h1v1h-1zM220 603h1v1h-1zM195 729h1v1h-1zM208 649h1v1h-1zM204 644h1v1h-1zM221 740h1v1h-1z" fill="#a03c78"/>
<path d="M221 758L225.500 754V764H219z" fill="#c4b394"/>
</g>
<rect x="258" y="113" width="38" height="109" fill="#2a2a2c"/>
<g clip-path="url(#k15)">
<path d="M276 113H295.600V141L286.500 139 281.800 151.600 272.500 163 267.900 168 272.500 151.600 276 130.700 278.300 119z" fill="#bc3429"/>
<path d="M262.700 222L267.900 212 276 200.400 286.500 188.800 295.600 177V200.400L288.800 206 284.200 222z" fill="#bc3429"/>
<path d="M258 200L262 190 272 170 268 185 262 205 258 215z" fill="#bc3429"/>
<path d="M264.5 194.5L267 191.5L269 188.5L270.5 185.5L270.5 182L272 179L273 175.5L273 175.5L270 178L269 181.5L268 184.5L266.5 187.5L265.5 191L264.5 194.5ZM260 167.5L262.5 165L263.5 162L265 159L267 156.5L268 153L268.5 150.5L269.5 146.5L269.5 146.5L267 149.5L266 152.5L264 155L263 158.5L261 161L260.5 164.5L260 167.5ZM257 158L258.5 155L260 151.5L261.5 148.5L262.5 145L263.5 141.5L263.5 141.5L261.5 145L259.5 148L259 151.5L257.5 154.5L257 158ZM257 181.5L259.5 179L261 176.5L262.5 173L263 170.5L265.5 167.5L266 164.5L266 161.5L266 161.5L264.5 164L263 166.5L260.5 169L261 172.5L258.5 175L258 178L257 181.5ZM255.5 129.5L258 127L259.5 124L260.5 120.5L260.5 117L260.5 117L259 120L258 123L256.5 126L255.5 129.5ZM259 164.5L261.5 162L262.5 159L264.5 156.5L265 153.5L265.5 150L265.5 150L263.5 152.5L262.5 155.5L261 158.5L260 161L259 164.5ZM258.5 147.5L260 145L262 142L264 139.5L265 136L266.5 133.5L268 130L267.5 126.5L267.5 126.5L266.5 129L264.5 132L262.5 135L260.5 138L259.5 141L258 144L258.5 147.5ZM267 187.5L268.5 185.5L270 182L271.5 179L272 176.5L272 173L272 173L270.5 175.5L269.5 178.5L268 181.5L266 184.5L267 187.5ZM259 167.5L262 164.5L263 161.5L264 158L265 154.5L265 154.5L262.5 157.5L260.5 160.5L260.5 164L259 167.5ZM265.5 174.5L266.5 171.5L269.5 169L269.5 165.5L270 162L270 162L268 165L266.5 168L264.5 170.5L265.5 174.5ZM257.5 149L259.5 146L261.5 142.5L263 139L263 135L263 135L261 138.5L260 142L257.5 145L257.5 149Z" fill="#bc3429"/>
<path d="M280 138.5L282.5 137L283.5 135.5L283.5 133L283.5 133L282 134.5L281 136.5L280 138.5ZM292.5 136.5L293.5 134.5L295 132L295.5 129.5L295.5 129.5L293.5 131.5L292.5 134L292.5 136.5ZM286 152.5L287 151.5L288 150L288.5 148L288.5 148L286 149L285 150.5L286 152.5ZM278 143L278.5 141.5L279.5 140L280 138L280 138L278.5 139.5L277.5 141L278 143ZM279.5 162L280.5 159.5L281.5 157.5L281 154.5L281 154.5L280.5 157L279.5 159L279.5 162ZM286.5 120.5L288.5 118.5L289.5 116L289.5 113.5L289.5 113.5L288 115.5L286.5 118L286.5 120.5ZM282 125L283.5 124L284.5 123L284.5 121.5L284.5 121.5L284 122.5L282.5 123.5L282 125ZM276.5 151L278.5 150.5L278.5 149.5L278 148L278 148L277 148.5L277 149.5L276.5 151ZM279.5 139.5L281 138L281 136.5L281 134.5L281 134.5L279.5 136L279.5 137.5L279.5 139.5ZM286.5 136.5L287 135.5L288 134.5L288.5 133L288.5 133L286.5 134L285.5 135L286.5 136.5ZM274.5 118.5L276 117.5L277.5 116L277.5 114.5L277.5 114.5L276.5 115.5L275.5 117L274.5 118.5ZM288 148.5L290 147L290.5 145L291.5 142.5L291.5 142.5L289.5 144L288 146L288 148.5ZM286 158.5L287.5 156.5L289 154.5L288 151.5L288 151.5L286.5 153.5L286 156L286 158.5ZM291.5 149.5L292.5 148.5L294 147L294.5 145L294.5 145L292.5 146L291.5 147.5L291.5 149.5ZM279 140.5L281 139.5L281 138L282 136.5L282 136.5L280 137.5L279.5 138.5L279 140.5ZM288.5 159.5L290 158L291.5 157L291.5 154.5L291.5 154.5L290 156L288.5 157.5L288.5 159.5Z" fill="#2a2a2c"/>
<path d="M273.5 198.5L274.5 198L274.5 197L275 196L275 196L274 196.5L274 197.5L273.5 198.5ZM281.5 201L283.5 200L285 199L284.5 196.5L284.5 196.5L283 197.5L281.5 199L281.5 201ZM284.5 215L286 214L287.5 212.5L288 210.5L288 210.5L286.5 211.5L285 213.5L284.5 215ZM287.5 209.5L288 207.5L289 205.5L288.5 203.5L288.5 203.5L288.5 205.5L287 207L287.5 209.5ZM294 209.5L295.5 208.5L296.5 206.5L297 205L297 205L295.5 206L294.5 207.5L294 209.5ZM291 200L293 198.5L294.5 196L294 193.5L294 193.5L292.5 195.5L290.5 197.5L291 200ZM266.5 185.5L268 184.5L269 183L269 181.5L269 181.5L267.5 182.5L266.5 184L266.5 185.5ZM265.5 203.5L267 201.5L268.5 199L268.5 196.5L268.5 196.5L267.5 198.5L266.5 201L265.5 203.5ZM276 223L278 222.5L278.5 221L277.5 219.5L277.5 219.5L276.5 220L276 221.5L276 223ZM264.5 205.5L266.5 204L268 202L267.5 199.5L267.5 199.5L266.5 201L265 203L264.5 205.5ZM263 198.5L264.5 197.5L265.5 196L265 194.5L265 194.5L264.5 195.5L264 197L263 198.5ZM273.5 189.5L274.5 189L275.5 187.5L275 186L275 186L274.5 187L272.5 187.5L273.5 189.5ZM265 217L266 215.5L268 213.5L268 211.5L268 211.5L266.5 213L265 215L265 217ZM279.5 184.5L281.5 183L284 181.5L283 178.5L283 178.5L281.5 180L280.5 182L279.5 184.5Z" fill="#2a2a2c"/>
<path d="M290.5 168.5L292 167L293 166L292 164.5L292 164.5L291 165L290.5 166.5L290.5 168.5ZM273.5 166.5L275 166L275 164.5L276 163L276 163L273.5 164L273.5 165L273.5 166.5ZM273.5 162.5L274.5 161.5L274.5 160.5L274.5 159L274.5 159L273.5 160L273.5 161L273.5 162.5ZM295 165.5L295.5 164L297 162.5L296.5 161L296.5 161L295.5 161.5L294 163.5L295 165.5ZM283.5 199L284.5 198.5L285 197.5L284 196L284 196L284 197L283 198L283.5 199ZM281.5 186L284 184.5L285 183L285 180.5L285 180.5L284 182.5L283 184L281.5 186ZM289 188L291 187L293 185L293 183L293 183L291.5 184.5L289.5 186L289 188ZM285 179L286.5 178L287 177L286.5 175.5L286.5 175.5L285 176L285 177.5L285 179Z" fill="#bc3429"/>
<path d="M260.900 114.400H266.700L265 124 260.500 127z" fill="#be7e28"/>
<path d="M292.300 143.500H295.600V149.300H292.300z" fill="#be7e28"/>
<path d="M286.500 150.400H290L288 157.400 285.500 157z" fill="#be7e28"/>
<path d="M267.900 185.300H272.500L270.500 196H267z" fill="#be7e28"/>
<path d="M285.300 200.400L295.600 195V218H284.200z" fill="#be7e28"/>
<path d="M291 189L295.600 186V196H291z" fill="#be7e28"/>
<path d="M274 176h3v3h-3z" fill="#be7e28"/>
<path d="M281.800 219H296V222H281.800z" fill="#c4b394"/>
</g>
<rect x="258" y="238" width="38" height="330" fill="#bc3429"/>
<g clip-path="url(#k16)">
<path d="M258 238H279.800L272 244.300 263.300 251 259.500 261.700 258 265.600z" fill="#2a2a2c"/>
<path d="M283 240L296 238V262L290 268 281 262 284 250z" fill="#2a2a2c"/>
<path d="M270 270L285.600 262.200 291.500 267 279.800 276.800 276 288.400 268.200 292.300 267.200 278.700z" fill="#2a2a2c"/>
<path d="M289 278l5-3 2 4-4 5-3-2zM284 290l5-2 1 5-4 4-3-3zM281 303l5-3 2 4-5 5z" fill="#2a2a2c"/>
<path d="M292.5 276.5L294 276.5L295 275.5L294.5 274L294.5 274L293 274.5L292 275.5L292.5 276.5ZM274 305L275.5 304L277 303L276.5 300.5L276.5 300.5L275 301.5L274 303L274 305ZM266.5 267L269.5 265.5L269.5 263.5L271 261L271 261L268 262.5L268 264.5L266.5 267ZM268 288.5L269 288L269 287L269.5 286L269.5 286L268 286L268 287L268 288.5ZM272 298L274.5 296.5L275.5 294.5L275.5 292L275.5 292L273.5 293.5L272 295.5L272 298ZM290 270L291.5 269L291.5 267.5L291.5 266.5L291.5 266.5L291 267.5L290.5 268.5L290 270ZM273.5 309.5L275 308.5L274.5 306.5L276 305L276 305L274 306L273.5 308L273.5 309.5ZM273.5 243L276.5 242L277.5 240.5L277.5 238L277.5 238L276 239.5L275 241L273.5 243ZM293 295.5L295 294L296 292L295.5 290L295.5 290L294 291.5L293.5 293.5L293 295.5ZM292 294L294.5 293.5L295.5 292L296.5 290L296.5 290L294 290.5L293.5 292.5L292 294ZM274.5 313L276 311L277.5 308.5L278 306L278 306L276.5 308L275 310.5L274.5 313ZM291 262L292 261.5L293 261L293 259.5L293 259.5L291 260L290.5 261L291 262ZM289 285.5L290.5 283.5L290.5 282L292 280L292 280L289.5 281.5L289.5 283.5L289 285.5ZM281.5 266.5L283 265.5L283.5 264L284.5 262.5L284.5 262.5L282.5 263.5L282 265L281.5 266.5ZM279.5 291L281 289.5L282 287.5L282 285.5L282 285.5L280.5 287L280 289L279.5 291ZM284 253.5L286 253L286 252L285.5 250.5L285.5 250.5L284 251L284.5 252L284 253.5ZM264.5 244L266.5 243.5L265.5 242.5L266.5 241L266.5 241L265 241.5L265 242.5L264.5 244ZM291.5 274.5L293 273L294 272L294 270L294 270L293.5 271.5L292 273L291.5 274.5ZM272.5 306.5L274 305.5L274 304.5L274 303L274 303L272.5 304L273 305.5L272.5 306.5ZM274 250.5L275.5 249L277 247.5L277.5 245.5L277.5 245.5L276 246.5L274 248.5L274 250.5ZM285.5 265L287.5 264L287.5 263L288 261.5L288 261.5L286 262.5L286 263.5L285.5 265ZM268.5 255L270.5 254L271.5 252.5L271.5 250.5L271.5 250.5L270 251.5L269.5 253L268.5 255Z" fill="#2a2a2c"/>
<path d="M288 257.5L289.5 257L290 256.5L290.5 255L290.5 255L289 255.5L288 256L288 257.5ZM284 251.5L285.5 249.5L285 248L285.5 245.5L285.5 245.5L283 247.5L283.5 249L284 251.5ZM292 257.5L293.5 256L293.5 254.5L294 252.5L294 252.5L291.5 254L292 255.5L292 257.5ZM295 246L296 244.5L297.5 242.5L297 240.5L297 240.5L296 242L294.5 244L295 246ZM290.5 259L292.5 258.5L293.5 257.5L293.5 255.5L293.5 255.5L292 256.5L291 257.5L290.5 259Z" fill="#bc3429"/>
<path d="M296 238L285.600 239 280.800 251 276 261.700 270 268.500 267.200 277.200 268.200 287 265.300 298.600 259.500 310 258 312V303.400L260.400 290.800V275.300L264.300 265.600 270 256 276 245.300 280.800 238z" fill="#be7e28"/>
<path d="M272 252l4-2 2 5-4 4-3-3z" fill="#a03c78"/>
<path d="M259 270h1v1h-1zM260 270h1v1h-1zM263 284h1v1h-1zM261 273h2v1h-2zM264 282h2v1h-2zM263 282h1v1h-1z" fill="#a03c78"/>
<path d="M294 321h1v1h-1zM270 380h1v1h-1zM260 351h1v1h-1zM280 398h1v1h-1zM293 366h1v1h-1zM279 319h1v1h-1zM275 364h2v1h-2zM284 347h2v1h-2zM280 324h1v1h-1zM269 352h1v1h-1zM289 380h2v1h-2zM279 327h1v1h-1zM290 346h2v1h-2zM261 370h1v1h-1zM280 338h1v1h-1zM265 397h2v1h-2zM277 332h1v1h-1zM266 397h2v1h-2zM263 330h1v1h-1zM268 328h1v1h-1zM260 392h1v1h-1zM261 342h1v1h-1zM287 383h1v1h-1zM294 397h1v1h-1zM264 382h1v1h-1zM293 385h1v1h-1zM263 387h2v1h-2zM292 355h1v1h-1zM290 354h1v1h-1zM286 335h1v1h-1zM288 402h1v1h-1zM271 357h1v1h-1zM259 374h2v1h-2zM274 329h1v1h-1zM263 371h1v1h-1zM268 322h1v1h-1zM292 376h1v1h-1zM263 375h1v1h-1zM280 321h1v1h-1zM290 352h1v1h-1zM260 380h1v1h-1zM284 326h1v1h-1zM270 318h1v1h-1zM277 360h2v1h-2zM275 358h1v1h-1z" fill="#2a2a2c"/>
<path d="M272 343L273.5 342.5L273.5 341L274.5 340L274.5 340L272.5 340.5L272 341.5L272 343ZM264.5 395.5L265 395L266 394.5L266 393.5L266 393.5L265 394L263.5 394.5L264.5 395.5ZM292.5 375L293.5 374.5L294.5 373.5L294 373L294 373L293 373.5L292.5 374L292.5 375ZM291.5 362.5L292.5 362L293.5 361L293.5 359.5L293.5 359.5L292.5 360.5L291.5 361.5L291.5 362.5ZM273.5 398L275 396.5L275.5 394.5L276.5 392.5L276.5 392.5L274.5 394L274 396L273.5 398ZM290.5 365.5L292 365L291.5 364L291.5 363L291.5 363L290.5 363.5L291 364.5L290.5 365.5ZM287 363.5L288 363L288 362.5L288 361.5L288 361.5L287 362L286.5 362.5L287 363.5ZM268 369L269.5 367.5L269.5 366L270.5 364.5L270.5 364.5L269 365.5L268.5 367L268 369ZM294 389L295 388.5L296.5 387.5L295.5 386L295.5 386L295 386.5L293.5 387.5L294 389ZM265 377L266.5 376L266.5 375L265.5 373.5L265.5 373.5L265.5 374.5L264.5 375.5L265 377ZM259 360.5L260 360L260.5 359L260.5 358L260.5 358L259.5 358.5L259 359.5L259 360.5ZM291 363.5L292 362L293 360.5L293.5 358.5L293.5 358.5L292 360L290.5 361.5L291 363.5ZM286.5 334.5L288 334L288.5 333L288 331.5L288 331.5L287 332L287 333.5L286.5 334.5ZM259 368.5L260 368L259.5 367.5L260 366.5L260 366.5L258.5 367L259 367.5L259 368.5Z" fill="#2a2a2c"/>
<path d="M258 449L262 444 268 447 274 441 281 445 288 439 296 443V568H258z" fill="#2a2a2c"/>
<path d="M288 437.5L289 434L287.5 431.5L285 430L285 430L284.5 433L286 435.5L288 437.5ZM279.5 439.5L281 437.5L283 435L283.5 432L283.5 432L281 434L278.5 436.5L279.5 439.5ZM268.5 449.5L271 449L273.5 448L274.5 445.5L274.5 445.5L271.5 445.5L270 447.5L268.5 449.5ZM291.5 426L291 423.5L291 420.5L287.5 419L287.5 419L287.5 422.5L289 424L291.5 426ZM296.5 433.5L294.5 431L292.5 430L289.5 429.5L289.5 429.5L291.5 432.5L293 434L296.5 433.5ZM271 424L270.5 422L268 421L266 420.5L266 420.5L267 423L269.5 423.5L271 424ZM279.5 445L280.5 443.5L281.5 441.5L278.5 440.5L278.5 440.5L278 442L278.5 444L279.5 445ZM279.5 423L280 420L279.5 417.5L277 415.5L277 415.5L277 418L278 420.5L279.5 423ZM291 443.5L293.5 444L295 443.5L295 440.5L295 440.5L292 440L291 441L291 443.5ZM261.5 443.5L264.5 443.5L267 443L267 439.5L267 439.5L265 440L263 441L261.5 443.5ZM285.5 451.5L289 450.5L291.5 448.5L292.5 445.5L292.5 445.5L290 446.5L286.5 447.5L285.5 451.5ZM288 451.5L287 449L285 446.5L282 448L282 448L283 450.5L284.5 452.5L288 451.5ZM277 443.5L280 442L280.5 438.5L281 435L281 435L278 437L275.5 440L277 443.5ZM281 448L282.5 447L283.5 446L283.5 444.5L283.5 444.5L280 444.5L279.5 445.5L281 448ZM275 446L278 446L281 445L283 442L283 442L280 442.5L277 443.5L275 446ZM281.5 420L285.5 419L286 416.5L283.5 413.5L283.5 413.5L280.5 415L279.5 417L281.5 420ZM277 424L280 423.5L283.5 422.5L282.5 418L282.5 418L279 418.5L277 421L277 424ZM267.5 435L268 432L265.5 431.5L263.5 432L263.5 432L263.5 434L265 435.5L267.5 435ZM288 450L291.5 450.5L292.5 449L293 446.5L293 446.5L290.5 446.5L289 447.5L288 450ZM293.5 448L291 445L289 442.5L286.5 441.5L286.5 441.5L287 444.5L289 446.5L293.5 448ZM287 445L291 444.5L293.5 442.5L294 439L294 439L291 439.5L287.5 440.5L287 445ZM278.5 449.5L278 446.5L277 445.5L274 445.5L274 445.5L274.5 449.5L276 449.5L278.5 449.5ZM277 450.5L280 451L281 449.5L281 448L281 448L279.5 448L278 448.5L277 450.5ZM281.5 440.5L282.5 438.5L283 436.5L281.5 435L281.5 435L280.5 436.5L278.5 438.5L281.5 440.5ZM289 442L292 439.5L293.5 437L290.5 433.5L290.5 433.5L287.5 436L288.5 439L289 442ZM264.5 443L266.5 441.5L265.5 440L264 438.5L264 438.5L263.5 440L263 441.5L264.5 443Z" fill="#2a2a2c"/>
<path d="M266.5 407L266.5 406L267.5 405.5L266 405L266 405L265.5 406L265 406.5L266.5 407ZM259 429.5L260 428.5L260 427L260 425.5L260 425.5L258.5 426.5L259 428L259 429.5ZM258 425.5L260 425L260 423.5L260 422L260 422L258.5 423L258 424L258 425.5ZM272.5 421L272.5 420L270.5 419L270 419L270 419L270 420L271.5 420.5L272.5 421ZM276.5 407L277 407L278 406.5L279 405L279 405L277 405L276 406L276.5 407ZM259.5 429L259.5 427.5L260 426.5L258.5 425.5L258.5 425.5L259 426.5L258 428L259.5 429Z" fill="#2a2a2c"/>
<path d="M260 447H272.200L268.200 459.200 260 465.300zM280.400 447H295.600V463.300L288.500 471.400 280.400 459.200z" fill="#be7e28"/>
<path d="M260 477.500L272.200 481.600 288.500 473.400 295.600 477.500V487.700L284.400 493.800 272.200 495.800 260 497.900z" fill="#be7e28"/>
<path d="M258 520L260 514.100 276.300 501.900 295.600 499.900V514.100L280.400 518.200 272.200 528.400 268.200 540.600 264 555 260 567H258z" fill="#be7e28"/>
<path d="M280.400 540.600L292.600 544.700V556.900H280.400z" fill="#be7e28"/>
<path d="M286 412l6-1 2 6-5 3-4-3z" fill="#be7e28"/>
<path d="M278.5 464.5L280.5 464L282 462.5L281 460.5L281 460.5L279.5 461L278 462.5L278.5 464.5ZM286 465.5L288.5 465L288.5 463.5L288 461.5L288 461.5L286.5 462.5L286 463.5L286 465.5ZM276 478.5L277 476L276 474.5L273.5 475L273.5 475L272.5 478L275 478L276 478.5ZM287 473L288 472L290 470.5L289 468.5L289 468.5L287 469L285.5 471L287 473ZM290 469.5L291.5 467L291.5 465L289.5 463L289.5 463L287.5 465L288 467L290 469.5Z" fill="#bc3429"/>
<path d="M271 506L270.5 504.5L269.5 503L267 503.5L267 503.5L268.5 505L269.5 505.5L271 506ZM272 511.5L275 511.5L276.5 510.5L278.5 508.5L278.5 508.5L276 508L273.5 509L272 511.5ZM277 509.5L277 507L275.5 505.5L273 505.5L273 505.5L273.5 507.5L274.5 509.5L277 509.5Z" fill="#bc3429"/>
<path d="M292.5 534L293.5 532L293.5 529.5L292.5 527L292.5 527L290.5 529.5L290 532L292.5 534ZM295.5 541L296.5 538.5L295 536.5L291.5 537L291.5 537L292.5 539L294.5 540.5L295.5 541ZM284.5 530.5L287 529L288 527.5L288 525L288 525L285 526L285 528L284.5 530.5ZM286 536.5L285.5 534.5L282.5 534L279.5 534L279.5 534L281.5 536L284 536.5L286 536.5ZM283.5 531L283.5 529L282.5 527L280.5 526L280.5 526L279.5 529L281.5 530L283.5 531Z" fill="#bc3429"/>
<path d="M275 547.5L275 544.5L274 542L272 540L272 540L272 543L272.5 545.5L275 547.5ZM275.5 556L277.5 555L278.5 553.5L278 551L278 551L276 552.5L274.5 554L275.5 556ZM280.5 556.5L282 554.5L281 552.5L280 550L280 550L279.5 552.5L280.5 554.5L280.5 556.5Z" fill="#bc3429"/>
<path d="M275.5 442L275 441L273 439.5L272 440.5L272 440.5L272.5 441.5L274 442.5L275.5 442ZM258 525.5L259.5 525L260 523.5L259 522L259 522L258.5 523L257.5 524L258 525.5ZM285.5 472L283.5 470.5L282.5 469L281 469.5L281 469.5L281.5 471L283 472L285.5 472ZM292.5 454L293.5 452.5L293.5 451.5L292 450.5L292 450.5L290 451.5L290.5 453L292.5 454ZM280 492.5L283 492L283 491L281.5 489.5L281.5 489.5L280.5 490L280.5 491L280 492.5ZM265 485L266 482.5L264 481L262.5 479.5L262.5 479.5L262 481.5L263.5 483.5L265 485ZM267 540L266.5 537.5L263.5 536L260.5 536L260.5 536L261.5 539L265 539.5L267 540ZM289.5 555.5L291 553L290 551L288 549L288 549L287.5 551.5L288 553.5L289.5 555.5ZM279 445L280 443L280 441.5L278.5 440L278.5 440L276.5 441.5L277.5 443.5L279 445ZM264.5 525L265.5 523L264 522L263.5 521.5L263.5 521.5L262.5 523L262.5 524L264.5 525ZM258 563.5L260 563.5L261 562L261 560L261 560L259 560L257 561L258 563.5ZM272.5 538L272.5 535L271 533L268 531.5L268 531.5L269.5 534L270.5 536.5L272.5 538ZM257.5 552.5L259.5 553L260 552.5L259.5 550.5L259.5 550.5L257.5 549.5L257.5 551L257.5 552.5ZM262.5 507.5L263.5 505.5L264 504L264 501.5L264 501.5L262.5 503L261.5 505L262.5 507.5ZM291.5 491.5L293.5 490.5L293 489L293.5 487.5L293.5 487.5L290.5 488L291.5 489.5L291.5 491.5ZM292 488.5L294 489L296 488L298.5 486.5L298.5 486.5L295.5 486.5L293.5 487L292 488.5ZM260 558.5L264 558L265.5 557L266.5 554.5L266.5 554.5L264 554.5L262.5 556L260 558.5ZM262 464.5L263.5 463L263.5 461.5L261.5 461L261.5 461L260 463L261 463.5L262 464.5ZM279 563.5L279.5 561L279.5 559L276.5 557.5L276.5 557.5L277 559.5L276.5 562L279 563.5ZM256.5 485.5L258.5 486L260.5 485L261.5 483.5L261.5 483.5L259.5 483L257 483.5L256.5 485.5ZM257.5 454.5L260 453.5L260.5 452.5L259.5 450.5L259.5 450.5L259 451.5L258 452.5L257.5 454.5ZM282 545.5L284 544.5L286 542.5L286 539.5L286 539.5L283 540L282 543L282 545.5ZM290 502.5L290.5 500L291 498L290 495L290 495L289.5 497.5L288.5 500L290 502.5ZM288 516L287.5 513L286.5 511.5L284 512L284 512L284.5 514.5L286 515.5L288 516Z" fill="#bc3429"/>
<path d="M278.5 550L277 549L276.5 548L275 548L275 548L276 549L276.5 549.5L278.5 550ZM268.5 461L270.5 461.5L273.5 460L273.5 458.5L273.5 458.5L272.5 458.5L269.5 459L268.5 461ZM286.5 528.5L287 527.5L288 526L287 525L287 525L286.5 526.5L286 527.5L286.5 528.5ZM294.5 461.5L293.5 459.5L291 458L288.5 457.5L288.5 457.5L290 459.5L292.5 461L294.5 461.5ZM284 486L284.5 483.5L283.5 481L282.5 479L282.5 479L282 481.5L282 484L284 486ZM276 498L276.5 496L276.5 494L275.5 492.5L275.5 492.5L274.5 494.5L273.5 496.5L276 498ZM276.5 511.5L275 509L272.5 508.5L271 508.5L271 508.5L272 510L273.5 511.5L276.5 511.5ZM265 564.5L266 563L267.5 561L266.5 559L266.5 559L266 561L265 562.5L265 564.5ZM279.5 485.5L278.5 483.5L276.5 482.5L275 482L275 482L276 483.5L277 485.5L279.5 485.5ZM293.5 516.5L295 515L297.5 513L297.5 510.5L297.5 510.5L296.5 512L294 514L293.5 516.5ZM259 515L260 513L259 511.5L257 510.5L257 510.5L257 513L258 514L259 515ZM282 547.5L283.5 548.5L284.5 548L284 546L284 546L283.5 545.5L282.5 546.5L282 547.5ZM274 545L276 544.5L275.5 543.5L275 542L275 542L272.5 542.5L273.5 543.5L274 545ZM272 556.5L272.5 554.5L270 554.5L269 554.5L269 554.5L269.5 556L271.5 556.5L272 556.5ZM258 466L261 465L261 464L261 462L261 462L259 463L259 464.5L258 466ZM283 515L282 513L280.5 511L279 510.5L279 510.5L279 512.5L281 514L283 515ZM267 455.5L267.5 453L265 451.5L264 450L264 450L263 453L265.5 454L267 455.5ZM280 499.5L280 496.5L278.5 494L277.5 492L277.5 492L276.5 495L277.5 497.5L280 499.5ZM276.5 544.5L276.5 542.5L274.5 542L272.5 541.5L272.5 541.5L273.5 543.5L275 544.5L276.5 544.5ZM287.5 472.5L288 471L288 469.5L287.5 467.5L287.5 467.5L287 469L286 471L287.5 472.5ZM285 450L287.5 450.5L288 450L288 448.5L288 448.5L287 448L286.5 448.5L285 450ZM280.5 456L282 454.5L282.5 453L282 451L282 451L281 452.5L280.5 454L280.5 456ZM262.5 503.5L262 501L261.5 498.5L260.5 496L260.5 496L260 499L260.5 501.5L262.5 503.5ZM276 457L277 455L275 453.5L274.5 452.5L274.5 452.5L273 454.5L275.5 456L276 457ZM292.5 479L292 477.5L292 476L290 476L290 476L290.5 477.5L290 479L292.5 479ZM276.5 486.5L275 484L275 482L272 482L272 482L272.5 484.5L273.5 486L276.5 486.5ZM286 456.5L284.5 454.5L283 453.5L280.5 453L280.5 453L282 455L283 456L286 456.5ZM291 454.5L289 452.5L287 451.5L285 450.5L285 450.5L286.5 452.5L288 453.5L291 454.5ZM278.5 533L279.5 530L279.5 527.5L278.5 525L278.5 525L277.5 528L277.5 530.5L278.5 533ZM276 507L277 506L277.5 505L276.5 503.5L276.5 503.5L275.5 504.5L274.5 505.5L276 507ZM292 565.5L292 564L291 563.5L291 562.5L291 562.5L290 564L290.5 565L292 565.5ZM285 531.5L285.5 530L285.5 528L284 526.5L284 526.5L283.5 528.5L283.5 530L285 531.5ZM258.5 546L259.5 545L260 543.5L259.5 542L259.5 542L258.5 543L258 544.5L258.5 546ZM280 534L281.5 533.5L282 532.5L283 531.5L283 531.5L281.5 532L280.5 533L280 534ZM286 535.5L287 533.5L285.5 531.5L284.5 529.5L284.5 529.5L284.5 531.5L285 533.5L286 535.5ZM285.5 462L286.5 461.5L288 461.5L287.5 459.5L287.5 459.5L287 459.5L285.5 460.5L285.5 462ZM288 479L286 477L284 476L282.5 475.5L282.5 475.5L283 478L285 478.5L288 479ZM292.5 476L293.5 475.5L295 475L296.5 473.5L296.5 473.5L294 473.5L292.5 474.5L292.5 476ZM265 512L263 511L262.5 510L261 510L261 510L262 511.5L262.5 512L265 512ZM262 557L263 557.5L265 557L266.5 555.5L266.5 555.5L264 554.5L262.5 556L262 557Z" fill="#2a2a2c"/>
<path d="M284 500.5L285.5 501L286.5 500L287 498L287 498L284.5 498L284 498.5L284 500.5ZM266.5 511.5L269 511L270 510L271 508.5L271 508.5L269.5 509L268 510L266.5 511.5ZM275.5 493L276.5 494L278.5 493L279 491.5L279 491.5L277.5 491.5L275.5 491.5L275.5 493ZM270 561L270.5 558.5L268.5 558L268 557L268 557L267 559L268 560.5L270 561ZM267 510.5L266 508.5L264.5 507.5L262.5 507.5L262.5 507.5L263.5 509L265.5 510L267 510.5ZM266 467.5L265.5 466L265 465L263.5 464.5L263.5 464.5L264 466L264 467L266 467.5ZM276 530L275.5 528L273 528L271.5 527.5L271.5 527.5L272.5 529.5L274.5 530L276 530ZM281 537L283.5 536.5L285.5 535L285 533.5L285 533.5L284 534L281.5 535L281 537Z" fill="#be7e28"/>
<path d="M274 548L271.5 546.5L270.5 546.5L269 547L269 547L270 548.5L271 549L274 548ZM291 548.5L292 549L293.5 548.5L294 547.5L294 547.5L293 547L291.5 547.5L291 548.5ZM287 557.5L288.5 557L289.5 556L290.5 554.5L290.5 554.5L288.5 555L287 555.5L287 557.5ZM294.5 521L294.5 520L293 520L291.5 520L291.5 520L292 521L293 521.5L294.5 521ZM281.5 537.5L282.5 537L282.5 536.5L282 535.5L282 535.5L280.5 535.5L281 536.5L281.5 537.5ZM276.5 557L276.5 555L276 554L275 552.5L275 552.5L275 554L274.5 555.5L276.5 557Z" fill="#a03c78"/>
<path d="M296 556V568H282z" fill="#c4b394"/>
</g>
<rect x="258" y="597" width="38" height="177" fill="#2a2a2c"/>
<g clip-path="url(#k17)">
<path d="M274 687.5L277 685L279.5 682L280 678.5L281 675L281 675L278 677.5L276.5 680.5L275 683.5L274 687.5ZM276 679L280 676.5L281.5 673.5L283 670.5L284.5 666.5L284.5 666.5L280.5 668.5L279.5 672L278 675.5L276 679ZM279.5 629L281.5 626L283.5 622.5L285 618.5L285 618.5L281.5 621L279 625L279.5 629ZM268 649L270 647L272 645L271 642.5L271 642.5L270 644L268.5 646.5L268 649ZM261.5 697L263.5 694.5L264.5 692L265.5 689L265.5 689L263 691.5L261.5 694L261.5 697ZM260.5 631L262.5 628L265 625L265.5 621.5L265.5 617.5L265.5 617.5L262 620L261 623.5L260 627L260.5 631ZM268.5 605.5L271 603L272.5 600.5L273 597.5L273 594L273 594L270 596L268.5 599L267.5 602L268.5 605.5ZM284.5 723L286.5 721L287 718L287.5 715.5L287.5 715.5L285 717.5L284.5 720L284.5 723ZM291.5 777L293.5 775L295.5 772L297 769.5L298 766.5L298 766.5L295.5 768.5L293.5 771L292 774L291.5 777ZM285.5 746.5L287.5 744L289.5 741L288.5 737L288.5 737L286.5 740L285.5 743L285.5 746.5ZM268 604L269.5 602L272 599.5L271 596.5L271 596.5L269 598.5L266.5 600.5L268 604ZM267 763.5L270 760.5L270.5 756.5L271.5 752.5L271.5 752.5L267 755L266.5 759L267 763.5ZM263 717L266 716L267 713.5L266.5 711L266.5 711L263 712L263 714.5L263 717ZM268.5 717.5L271 715L271.5 712L272.5 709L274.5 706L274.5 702.5L274.5 702.5L272.5 705.5L271 708.5L269 711L269.5 714L268.5 717.5ZM282 634.5L284.5 632L286.5 629.5L287 626L287 623L288 620L288 620L284.5 622L284 625L282 627.5L282.5 631L282 634.5ZM288 694.5L290.5 693L292.5 691L292 688L292 688L290.5 689.5L288 691.5L288 694.5ZM266.5 649L270.5 647.5L271.5 645.5L270 642L270 642L268 644L266.5 645.5L266.5 649ZM282 683.5L284.5 681.5L286 679.5L285.5 676L285.5 676L282.5 677.5L281.5 680L282 683.5ZM288 721L290.5 720L291 717.5L292 715.5L292 715.5L288.5 716.5L287.5 718L288 721ZM283 778L286.5 775.5L288.5 773L289.5 770L290.5 766.5L290.5 766.5L287 768.5L285 771L284.5 774L283 778ZM291 746L293 743.5L294.5 741L296.5 737.5L296.5 734L296.5 734L294 736.5L292 739.5L290.5 742.5L291 746ZM257.5 750.5L260 749.5L261.5 748L260 745L260 745L257.5 746L255.5 747.5L257.5 750.5ZM267.5 635L270 634L272 632.5L271 629.5L271 629.5L269.5 630.5L267.5 632L267.5 635ZM268 687L271 684.5L271.5 681L273 677.5L274 674L274 674L272 677L270.5 680.5L269.5 683.5L268 687ZM275 769.5L277.5 766.5L278 762.5L278.5 759L278.5 759L276.5 762L275 765.5L275 769.5ZM265.5 658.5L267.5 655L270.5 652L269.5 647.5L269.5 647.5L267 650.5L265 654L265.5 658.5ZM280.5 633L283 631L286 628.5L287 625.5L287.5 622.5L287.5 618.5L287.5 618.5L284.5 621L283 623.5L282.5 626.5L280.5 629.5L280.5 633ZM289.5 637.5L291.5 634.5L293.5 631.5L293 628L294 624L294 624L290.5 627L291 630.5L289.5 634L289.5 637.5ZM270.5 647L273.5 644.5L275.5 642L276 639L277 636L276.5 632.5L276.5 632.5L274 635L272.5 637.5L271.5 640.5L270 643.5L270.5 647ZM289.5 635.5L291.5 634L294 631.5L295 628L296 625L296 625L293.5 627.5L291.5 629.5L290 632.5L289.5 635.5ZM269 764.5L271 762L272 759L273.5 756L274.5 752.5L274.5 752.5L271.5 755L270 758L269.5 761L269 764.5ZM258.5 760.5L260 759.5L262.5 757.5L263 755L263 755L260.5 756.5L258.5 758L258.5 760.5ZM275.5 607.5L278 605L279 602L281 599L281.5 596L281.5 596L280 598.5L277 601L276.5 604L275.5 607.5ZM273.5 737.5L275 735.5L277.5 733L278.5 730L279 727L279 727L277 729L275.5 732L274 734.5L273.5 737.5ZM285.5 630.5L288.5 628L288.5 625L289.5 622L289.5 622L287 624.5L285.5 627L285.5 630.5ZM266.5 762.5L269 760L272 758L273 754.5L273.5 751.5L273.5 751.5L271 753.5L270 756.5L268 759.5L266.5 762.5ZM273 618.5L275.5 615.5L277 611.5L276.5 607.5L276.5 607.5L274 610.5L273 614.5L273 618.5ZM269.5 660.5L271.5 658L274.5 655.5L274 652.5L275.5 649.5L274.5 646L274.5 646L272 648L270 651L269.5 653.5L269 657L269.5 660.5ZM281 726.5L284 724L285.5 721L286.5 718L287.5 715L288 711.5L288 711.5L285.5 714L284 717L282.5 720L281.5 723L281 726.5ZM269.5 747.5L272 744.5L274 741L275 737L275 737L272 740L270.5 743.5L269.5 747.5ZM268.5 736.5L271 734L273.5 731L274 727.5L274 727.5L271.5 730L269 732.5L268.5 736.5ZM267.5 668.5L270 666L271 663.5L273 661L275 658L275.5 654.5L275.5 654.5L272.5 657L270.5 659.5L269 662L268.5 665L267.5 668.5ZM286 658L287.5 656L289.5 653.5L290 650.5L290 650.5L287.5 652.5L286 655L286 658ZM273 755.5L275.5 753.5L278.5 751.5L279 748L280 745L280 745L276 746.5L276 749.5L273 752L273 755.5ZM284 720L287.5 717L288 713L289 709L289 709L285.5 712.5L285.5 716L284 720ZM289.5 614L293.5 611.5L292.5 608.5L293.5 605.5L293.5 605.5L289.5 607.5L290 610.5L289.5 614ZM291 744L294 742L294.5 738.5L296.5 735.5L296 731.5L296 731.5L292.5 734L291 737L290 740L291 744ZM278.5 649.5L280.5 647.5L282.5 645.5L284.5 643L287 640.5L287 636.5L287 636.5L284 638L282 641L279.5 643.5L279.5 646.5L278.5 649.5ZM291 614L293.5 611.5L295.5 608.5L297 604.5L297.5 601L297.5 601L295.5 604L292.5 606.5L291 610L291 614ZM284 756.5L286.5 754L288 750.5L290 747.5L290 743.5L290 743.5L287 746.5L286 750L284.5 753L284 756.5ZM258.5 723L261 721L263 718.5L265 716.5L265.5 712.5L265.5 712.5L262 714.5L260.5 716.5L259.5 719.5L258.5 723ZM268 652.5L271 650L273 648L274.5 645L276 642.5L276 639.5L276 639.5L273 641L272 644L270.5 646.5L268.5 648.5L268 652.5ZM290.5 642L293 641L294 639L292 636.5L292 636.5L291 638L290 639.5L290.5 642ZM292.5 658.5L295.5 657L296.5 655.5L297 652.5L297 652.5L293.5 653.5L293.5 655.5L292.5 658.5ZM273.5 736.5L276.5 735.5L276.5 733.5L276 730.5L276 730.5L273.5 731.5L273.5 734L273.5 736.5ZM273.5 699.5L275.5 698.5L277 696.5L276 694L276 694L272.5 695L271.5 696.5L273.5 699.5ZM290.5 684L292.5 682.5L293.5 680L294.5 677.5L294.5 677.5L292 679.5L291 681.5L290.5 684ZM285 725L287.5 722L289.5 719.5L290 715L290 715L287 718L285.5 721L285 725ZM266.5 730.5L268.5 727.5L270 724.5L270 721L270 721L268 723.5L266 726.5L266.5 730.5ZM278 743L279.5 740.5L280.5 738.5L279.5 736L279.5 736L277.5 737.5L278 740L278 743ZM273.5 746L275 743L277 739.5L277.5 735.5L277.5 735.5L275.5 739L273.5 742.5L273.5 746ZM279.5 761L281.5 759L283.5 756.5L285 753.5L285 750.5L285 750.5L282 752L280.5 754.5L279 757L279.5 761ZM275.5 778L278.5 775L280 771.5L280.5 767.5L280.5 767.5L278 770.5L276.5 774L275.5 778ZM257 761.5L259.5 759.5L262 756.5L263.5 753.5L263.5 750.5L263.5 750.5L261 752L259 755L257.5 758L257 761.5ZM286.5 633.5L288 631.5L291 630L290 627L290 627L289 628.5L286 630.5L286.5 633.5ZM287 617L289.5 614.5L291.5 611.5L292.5 608L294 604.5L294 604.5L290.5 607L288.5 610L287 613L287 617ZM271 619L272.5 617L275.5 615L274 611.5L274 611.5L272 613.5L269.5 615.5L271 619ZM287 741L290.5 739.5L292.5 736.5L294 733.5L294 730.5L294 730.5L292.5 732.5L290.5 735L288 738L287 741ZM277.5 621L281.5 619.5L284 616.5L284.5 612.5L284.5 612.5L281 615L279 617.5L277.5 621ZM273.5 757.5L275 755.5L275.5 752.5L276 749.5L276 749.5L273 751.5L271.5 754L273.5 757.5ZM277.5 668L280 666.5L282 664.5L281.5 661.5L281.5 661.5L280 663.5L277.5 665L277.5 668ZM258 747.5L262 745.5L264.5 742.5L265.5 739L265.5 735.5L265.5 735.5L262.5 737.5L260 740.5L259.5 744L258 747.5ZM274 603.5L277 602L277.5 599L278.5 595.5L278.5 595.5L275 597.5L274.5 600.5L274 603.5ZM290.5 749L292 747L293.5 745L293.5 742.5L293.5 742.5L291.5 744L290.5 746.5L290.5 749ZM270 682.5L273.5 680.5L275 678L275 674L275 674L272 676L269.5 678.5L270 682.5ZM281.5 714L284 712L286.5 709.5L287 706.5L287 706.5L284 708L282 710.5L281.5 714ZM276.5 764.5L279.5 763L281 761.5L280.5 758.5L280.5 758.5L278.5 760L277.5 761.5L276.5 764.5ZM278 723L281 722L281 719L280.5 716.5L280.5 716.5L278.5 718L277 720L278 723ZM271 672L274 671L274.5 668L274 665L274 665L270.5 666.5L271 669.5L271 672ZM271.5 706.5L273 704.5L274.5 702L276 699L276 699L273 701L271.5 703.5L271.5 706.5ZM279.5 623L283 620.5L283.5 617L282.5 613.5L282.5 613.5L280 616L280.5 619.5L279.5 623ZM280.5 747L282.5 745L283.5 742L282.5 739L282.5 739L281 741L279 743.5L280.5 747ZM262 667.5L265 665.5L266.5 662.5L267.5 659L267.5 659L264 661L262.5 664L262 667.5ZM281 748L284 745L287 742.5L288 739.5L288 735L288 735L285 738L282.5 740.5L282 744.5L281 748ZM263 691L264 689L265 687.5L266 685L266 685L263 686.5L262 688.5L263 691ZM282.5 640L284.5 637.5L287 635L288.5 631.5L289.5 628L289.5 628L287 630.5L285 633.5L283 636.5L282.5 640ZM267.5 665.5L270.5 663.5L273 661L274 658L275.5 655L275.5 655L272.5 657L271 659.5L269 662.5L267.5 665.5ZM257 753.5L259 751L261 748.5L260.5 744.5L260.5 744.5L258 747L256 749.5L257 753.5ZM277.5 624.5L281 623L281 621L279.5 618L279.5 618L277 619.5L277.5 622L277.5 624.5ZM257.5 761L261 758.5L262 755.5L262.5 752L262.5 748.5L262.5 748.5L260.5 751.5L259.5 754.5L258 757.5L257.5 761ZM277.5 650L280 647L280.5 644L283 641L283 637L283 637L280.5 640L279.5 643L278 646L277.5 650ZM260.5 717L263 716L263.5 714L263 711.5L263 711.5L261 713L260 714.5L260.5 717ZM277 757.5L279.5 755.5L281.5 753L282 749L282 749L279 751L277 754L277 757.5ZM276.5 699L280 697.5L281 694.5L283 692L283.5 689L283.5 689L280.5 691L278.5 693.5L277.5 696L276.5 699ZM272.5 610L275.5 607.5L276 605L278 602L278 599L279 596L279 596L276.5 598L275 600.5L273.5 603.5L273 606.5L272.5 610Z" fill="#bc3429"/>
<path d="M281 620.500H296V639.700L289.700 651.900 284.500 662.300 277.500 669.300 270.600 676.300 269.700 665.800 274 655.400 279.300 643.200 281.900 631z" fill="#be7e28"/>
<path d="M261.800 676.300L268.800 672.800 270.600 681.500 263.600 685zM259.200 702.400L265.300 699 266.200 707.700 260.100 710.300zM273.200 770.400L282.800 765.200 285.400 768.700 275.800 773zM289.700 746L296 742.500V756.500H290.600z" fill="#be7e28"/>
<path d="M284 597h12v14l-8 6z" fill="#be7e28"/>
<path d="M293.5 719.5L294.5 718L295.5 716L294.5 714L294.5 714L293 715L292 717L293.5 719.5ZM290.5 768L292.5 766L295 763.5L294 760L294 760L292.5 762L290.5 765L290.5 768ZM281.5 601.5L284.5 599.5L285.5 597.5L285 595L285 595L283.5 597L283 599L281.5 601.5ZM286.5 710L288.5 707.5L290 705L290 702L290 702L287.5 704L286 706.5L286.5 710ZM267 696L268.5 695.5L269.5 694L269.5 692.5L269.5 692.5L267.5 693L266.5 694.5L267 696ZM291 774L292 772.5L293 771L292.5 769L292.5 769L291 770.5L290.5 772L291 774ZM290 699.5L291.5 697L294 695L294 691.5L294 691.5L290.5 693.5L289.5 696L290 699.5ZM262.5 667L263 665.5L263 664L263.5 662.5L263.5 662.5L262 663.5L261.5 665L262.5 667ZM285.5 646.5L287.5 645L289.5 643L289.5 640L289.5 640L286.5 641L285.5 643.5L285.5 646.5ZM272 777.5L274.5 775.5L276 773.5L276 770.5L276 770.5L274 772.5L272.5 774.5L272 777.5ZM283.5 634L286.5 633.5L287 631.5L287 629.5L287 629.5L285 630.5L284 631.5L283.5 634ZM287.5 697L289 696L289.5 695L289 693L289 693L286.5 694L287 695.5L287.5 697ZM280 707.5L281 705.5L282 703L282 700L282 700L279.5 702L278 704L280 707.5ZM265 639L266.5 637L267 634.5L267.5 632L267.5 632L266.5 634.5L265 636.5L265 639ZM287 675.5L288 673L290 670.5L289 667.5L289 667.5L288 670L286.5 672.5L287 675.5ZM279.5 641.5L280.5 639L282 636.5L283 633L283 633L281 635.5L279 638.5L279.5 641.5Z" fill="#be7e28"/>
<path d="M256 715L259 713L261 709.5L262 705.5L262 705.5L258.5 707.5L257 711.5L256 715ZM255 653L258 650.5L260.5 647.5L261.5 644L261.5 644L258 646L256.5 649.5L255 653ZM257.5 628.5L260.5 626.5L262 624.5L261 621.5L261 621.5L260 623L258.5 625.5L257.5 628.5ZM266 702L269 700L271.5 697.5L271 693.5L271 693.5L268 695.5L266 698L266 702ZM273.5 714L275.5 712L275.5 709.5L275.5 707L275.5 707L273.5 709L274 711.5L273.5 714ZM275.5 646.5L277.5 645L280 643L279.5 640.5L279.5 640.5L276.5 641.5L274.5 643.5L275.5 646.5ZM268 693.5L270 691L271 687.5L271.5 684L271.5 684L269 686.5L267.5 689.5L268 693.5ZM271.5 621L274.5 620L275.5 617.5L275.5 614.5L275.5 614.5L273.5 616L272 618L271.5 621ZM275.5 697.5L277 695L278 692.5L279.5 689.5L279.5 689.5L276.5 691.5L275 694L275.5 697.5ZM267 777L269 775L271 773L270.5 769.5L270.5 769.5L267.5 771L267 774L267 777ZM269.5 681.5L272.5 680.5L275 679L273.5 676L273.5 676L271.5 677L270 679L269.5 681.5ZM273.5 641.5L275.5 639.5L277.5 636.5L277.5 633L277.5 633L275 635.5L273.5 638.5L273.5 641.5ZM290 696.5L292.5 694.5L293 692L293 689L293 689L291.5 691L291 693.5L290 696.5ZM270.5 711L273 709L273.5 706L275 703.5L275 700L275 700L272.5 702.5L271 705L271 708L270.5 711ZM268 619L270.5 618L270.5 615.5L271.5 613L271.5 613L269 614.5L268 616.5L268 619ZM270 662.5L272.5 661L273 659L273 657L273 657L272 658.5L270.5 660.5L270 662.5ZM258.5 706L259 704.5L260 703.5L260 701.5L260 701.5L258.5 702.5L257.5 704L258.5 706ZM291.5 763.5L292.5 761.5L294.5 759.5L293.5 757L293.5 757L292.5 758.5L290.5 761L291.5 763.5ZM275.5 715.5L278.5 714L279.5 712L279.5 709L279.5 709L277 710.5L275.5 712.5L275.5 715.5ZM276 704L278 702.5L279.5 700L279.5 697.5L279.5 697.5L278.5 699.5L276.5 701.5L276 704ZM263 754L265.5 751.5L267.5 748.5L268.5 744.5L268.5 744.5L265 747.5L264.5 750.5L263 754ZM284.5 721L286.5 719L287.5 717.5L288 715L288 715L286 716.5L285 718L284.5 721ZM268.5 742.5L271 740.5L272 738L273 735L273 735L271 737L269.5 739.5L268.5 742.5ZM265 754L268 751.5L269.5 748.5L270.5 745L270.5 745L267.5 747.5L266 750.5L265 754ZM256.5 759L258.5 757L259 754L260 751.5L260 751.5L258 753.5L257 756L256.5 759ZM273.5 622.5L277 619L278 615.5L278 611.5L278 611.5L276.5 615L275 618.5L273.5 622.5ZM273 646.5L275.5 643.5L276.5 640.5L277 636.5L277 636.5L274.5 639.5L274 643L273 646.5ZM264.5 758.5L267 757L268.5 754L269.5 750L269.5 750L265.5 752L264.5 755L264.5 758.5ZM269.5 633.5L271 631.5L273 629.5L273.5 626.5L273.5 626.5L270.5 628L268.5 630L269.5 633.5ZM291.5 731.5L293.5 729L294 726L294.5 723L294.5 723L293 726L292 728.5L291.5 731.5ZM270.5 750L272.5 748.5L272.5 746.5L273 744L273 744L270.5 745.5L270.5 747.5L270.5 750ZM280 761L282.5 759L284.5 756L284.5 752.5L284.5 752.5L282.5 755L280.5 757.5L280 761ZM290 668.5L293 666L294 662.5L294.5 659L294.5 659L292.5 662L290.5 664.5L290 668.5ZM264.5 704L267.5 702L268.5 699L270.5 696L270.5 696L267.5 698L266.5 701L264.5 704ZM275 624.5L276.5 623.5L277.5 622L277.5 619.5L277.5 619.5L274.5 620L274 621.5L275 624.5ZM271.5 644L273.5 641.5L275.5 638.5L275 635.5L276 632L276 632L273 635L273 638L271 640.5L271.5 644ZM269.5 611L272.5 608.5L274.5 606L275 603L275.5 600L275.5 600L272.5 602L272.5 605L270 607.5L269.5 611ZM279.5 675.5L281.5 674.5L281.5 672.5L281.5 670.5L281.5 670.5L278 671.5L278.5 673.5L279.5 675.5ZM282.5 762L285 759L286.5 756L286 752L286 752L284 755L283 758L282.5 762ZM271.5 648L274 647L274.5 645L274 643.5L274 643.5L273 644.5L272.5 646.5L271.5 648ZM275 695.5L277.5 693.5L278.5 691L278 688L278 688L276 690L275 692.5L275 695.5ZM280 602L283 601L284.5 599.5L283 596.5L283 596.5L280.5 597.5L280.5 600L280 602ZM290.5 701.5L292 700.5L293.5 699.5L294 697L294 697L290.5 697.5L290.5 699.5L290.5 701.5ZM275.5 648.5L278 646.5L277.5 643.5L278 641L278 641L275.5 643L275.5 645.5L275.5 648.5ZM260.5 685.5L263.5 682.5L265 679L265.5 675.5L265.5 675.5L263.5 678.5L261.5 682L260.5 685.5ZM256.5 737L258.5 734.5L261 731.5L259.5 728L259.5 728L257.5 730.5L255.5 733L256.5 737ZM286.5 645L289 643L291 640.5L292.5 637.5L292.5 634L292.5 634L290 636.5L288 639L287 641.5L286.5 645ZM266 740L269 738.5L270.5 736L270.5 733L270.5 733L268 734.5L267.5 737.5L266 740ZM276 604.5L278.5 602L280.5 599.5L281.5 597L282.5 594L282.5 594L280 596L278.5 599L277 601.5L276 604.5ZM270.5 721L273 720.5L274 718.5L273.5 716L273.5 716L271 717L270.5 718.5L270.5 721ZM264 763L265.5 760.5L268 758L269.5 755.5L270 752L270 752L268 754.5L266 757.5L264.5 760L264 763ZM287.5 667L290.5 665L291.5 662.5L292.5 659.5L293.5 656.5L293.5 656.5L291 658.5L289 661L288 664L287.5 667ZM260 743L264 740.5L266 737L267.5 733L267.5 733L263.5 735.5L261.5 739L260 743ZM268.5 706L271 703.5L272.5 700.5L273.5 698L275 695L275 695L272 697L271 700L269.5 702.5L268.5 706ZM263.5 713L265.5 711L267 708.5L268 705.5L268 705.5L265.5 708L264.5 710.5L263.5 713ZM259 663L261.5 660.5L263.5 657.5L265 654L265 654L262.5 656.5L260.5 659.5L259 663ZM293 619.5L296 618L296 615.5L296.5 613L296.5 613L294.5 615L293 616.5L293 619.5ZM257.5 665L260 663L262 660L263 656.5L263 656.5L259 658.5L258 662L257.5 665ZM281 674L283 671L284.5 668L286 664.5L286 664.5L283 667.5L282 670.5L281 674ZM289 643.5L290.5 640.5L292 637.5L292 634L292 634L290 636.5L289 640L289 643.5Z" fill="#2a2a2c"/>
<path d="M290 719h2v1h-2zM292 749h1v1h-1zM261 756h1v1h-1zM282 624h1v1h-1zM283 677h1v1h-1zM272 674h2v1h-2zM290 746h1v1h-1zM292 720h1v1h-1zM276 758h1v1h-1zM279 649h2v1h-2zM270 628h2v1h-2zM280 743h1v1h-1zM271 741h1v1h-1zM278 655h1v1h-1zM259 728h2v1h-2zM273 636h1v1h-1zM262 701h1v1h-1zM277 738h1v1h-1zM276 649h1v1h-1zM259 754h2v1h-2zM279 723h2v1h-2zM269 762h1v1h-1z" fill="#a03c78"/>
</g>
<rect x="258" y="20" width="38" height="93" fill="#000"/>
<g clip-path="url(#ks)">
<path d="M284.200 112V97.300L288.800 88 286.500 76.400 290 66 295.600 64.800V112z" fill="#f01808"/>
<path d="M273 41.5L275 40.5L275.5 38.5L276.5 36L276.5 36L274 37L272.5 39L273 41.5ZM267.5 40.5L269 39L270.5 37L271 34.5L271 34.5L269 36L268.5 38.5L267.5 40.5ZM263.5 29L265.5 27L266.5 24.5L268 21.5L268 21.5L265.5 23.5L264.5 26.5L263.5 29ZM270 33.5L271.5 32L272.5 30.5L272 28L272 28L270.5 29.5L269.5 31L270 33.5ZM268.5 44.5L270.5 41L272.5 37.5L273.5 34L273.5 34L271.5 37L269.5 40.5L268.5 44.5ZM269.5 39L272 36.5L274.5 33.5L275.5 30L276 26.5L276 26.5L274 29.5L272.5 32.5L270 35.5L269.5 39ZM270.5 38L272.5 36L273 34L274 31.5L274 31.5L272 33.5L271.5 35.5L270.5 38ZM273.5 45L275 43L276.5 41L276 38L276 38L274.5 40L273 42.5L273.5 45ZM269 37.5L271 35L272.5 32L273 29L273 29L271.5 31.5L270 34.5L269 37.5Z" fill="#f01808"/>
<path d="M272.500 53l2-1 2 11-3 2z" fill="#f01808"/>
<path d="M280.5 79.5L282.5 78.5L283.5 77L284 75L284 75L282 76.5L281.5 77.5L280.5 79.5ZM275 94L277 93L278 91.5L277 89L277 89L276 90.5L274.5 92L275 94ZM276 77L278 74.5L279.5 72L280 69.5L280 69.5L278.5 72L276.5 74.5L276 77ZM265 115.5L267.5 113.5L269.5 111.5L269.5 108.5L269.5 108.5L268 110.5L266.5 112.5L265 115.5ZM281 111L283.5 109.5L284 108L285 105.5L285 105.5L282.5 107L282 109L281 111ZM262 73.5L264.5 73L265 72L263.5 70.5L263.5 70.5L263 71L262.5 72L262 73.5ZM271 90L273 88L274.5 86L274.5 83.5L274.5 83.5L273.5 85.5L272 87.5L271 90ZM280 91.5L280.5 89L281.5 86.5L282.5 84L282.5 84L280.5 86L280 88.5L280 91.5ZM290.5 77L292.5 74.5L293 72.5L293.5 69.5L293.5 69.5L292 72L291.5 74.5L290.5 77ZM277 83L278 82L279 80.5L278.5 78.5L278.5 78.5L278 80L277 81.5L277 83ZM266 68L267 67L267.5 65.5L268 64.5L268 64.5L266 65L266 66.5L266 68ZM291 64.5L292.5 63.5L293 62L293 60.5L293 60.5L291.5 61.5L290.5 62.5L291 64.5ZM277.5 107.5L278.5 105.5L279.5 103L280.5 100L280.5 100L278.5 102.5L277.5 105L277.5 107.5ZM262 88.5L265 87.5L265.5 86L266 83.5L266 83.5L264 85L263 86.5L262 88.5ZM263.5 96.5L265.5 94.5L266 92L265.5 89.5L265.5 89.5L265 91.5L263.5 94L263.5 96.5ZM293.5 62.5L293.5 61.5L294.5 60.5L295 59L295 59L293.5 60L293 61L293.5 62.5Z" fill="#f01808"/>
<path d="M292 90.5L294.5 88.5L297 86L296.5 83L296.5 83L294.5 84.5L292 87L292 90.5ZM291 97.5L292.5 97L293 95L293.5 93L293.5 93L291.5 94L291 96L291 97.5ZM293.5 91.5L294.5 90.5L295 89L294.5 87.5L294.5 87.5L293 88.5L292.5 90L293.5 91.5ZM292.5 76L294.5 75L294 73.5L294.5 72L294.5 72L293 73L293.5 74.5L292.5 76ZM288.5 94L289 93L290 91.5L289.5 89.5L289.5 89.5L288.5 91L287 92L288.5 94ZM292 89L293.5 87.5L294.5 86L295 84L295 84L293.5 85.5L292.5 87L292 89ZM289 85.5L290 84.5L290.5 83.5L290.5 82L290.5 82L288 82.5L288 84L289 85.5ZM286 76L288.5 75L289 73L288.5 71L288.5 71L287.5 72.5L286.5 73.5L286 76ZM289 92.5L290.5 91.5L291.5 89.5L292 87.5L292 87.5L289.5 88.5L288.5 90.5L289 92.5ZM289.5 106L291 104.5L291.5 103L291 101.5L291 101.5L289.5 102.5L289.5 104L289.5 106ZM292 105L293.5 103L295 101L295.5 98.5L295.5 98.5L293 100L291.5 102L292 105ZM294.5 80.5L297 80.5L296.5 79.5L296.5 78L296.5 78L295 78.5L294.5 79L294.5 80.5ZM288 80.5L289.5 80L290 78L290.5 76.5L290.5 76.5L288.5 77.5L287.5 79L288 80.5ZM290.5 99L292 97.5L291.5 96L292 93.5L292 93.5L290 95L290.5 97L290.5 99Z" fill="#000"/>
<path d="M258 76.400V56.600L262.700 45 267.900 35.700 271.400 25.200 273.700 24 272.500 36.900 269 49.700 265.600 61.300 260.900 74z" fill="#ff8c00"/>
<path d="M283 52L287.700 47.300 294.600 46.200 295.200 53.100 288.800 55.500 284.200 54.900z" fill="#ff8c00"/>
<path d="M268.500 88L272.500 83.400 278.300 78.700 280.100 81 276 88 271.400 93.300z" fill="#ff8c00"/>
<path d="M258.600 98.500L262.700 93.300 263.800 96.200 259.700 103.100zM265.600 105.500L271.400 98.500 272 103.100 268.100 109z" fill="#ff8c00"/>
<path d="M286.500 29.900L288.800 29.300 289.400 34.500 287 35.700zM288.800 36.900L294.600 34.500V41.500H290z" fill="#ff8c00"/>
<path d="M292 21h4v4l-3 1z" fill="#ff8c00"/>
<path d="M264.5 34.5L265 33.5L266.5 32L267 30.5L267 30.5L265.5 31.5L264 33L264.5 34.5ZM267.5 74L269 73L270.5 71L270.5 69L270.5 69L269 70.5L268 72L267.5 74ZM263.5 70L265.5 68L266.5 66.5L266.5 64.5L266.5 64.5L265.5 66L264.5 68L263.5 70ZM270 45.5L271 44.5L272 43.5L270.5 42L270.5 42L270.5 42.5L269.5 44L270 45.5ZM257.5 73L259 71.5L260.5 70L260 68L260 68L259.5 69.5L258 71L257.5 73ZM263.5 52.5L265 51L265.5 49L266.5 47L266.5 47L264.5 48.5L263.5 50L263.5 52.5Z" fill="#000"/>
<path d="M291 93h1v1h-1zM291 27h1v1h-1zM294 49h2v1h-2zM278 80h2v1h-2zM288 42h1v1h-1zM272 77h2v1h-2zM268 42h1v1h-1zM264 110h2v1h-2zM264 30h1v1h-1zM282 90h1v1h-1zM268 45h1v1h-1zM278 24h2v1h-2zM286 56h2v1h-2zM291 72h1v1h-1z" fill="#e040e0"/>
<path d="M279 49h2v1h-2zM279 92h1v1h-1zM268 42h1v1h-1zM278 62h2v1h-2zM282 78h1v1h-1zM285 23h1v1h-1z" fill="#40c0e0"/>
<path d="M258.500 20.500h5v5h-5z" fill="#f0e0d0"/>
</g>
<path d="M15.5 35H53V96H15.5zM15.5 67H53" fill="none" stroke="#f01a10" stroke-width="1"/>
<path d="M15.5 106H53V402H15.5zM15.5 170H53M15.5 262H53M15.5 354H53" fill="none" stroke="#f01a10" stroke-width="1"/>
<path d="M15.5 424H53V767H15.5zM15.5 469H53M15.5 562H53M15.5 654H53M15.5 746H53" fill="none" stroke="#f01a10" stroke-width="1"/>
<path d="M75.5 35H113V172H75.5zM75.5 97H113" fill="none" stroke="#f01a10" stroke-width="1"/>
<path d="M75.5 195H113V324H75.5zM75.5 211H113M75.5 304H113" fill="none" stroke="#f01a10" stroke-width="1"/>
<path d="M75.5 345H113V479H75.5zM75.5 416H113" fill="none" stroke="#f01a10" stroke-width="1"/>
<path d="M75.5 493H113V767H75.5zM75.5 522H113M75.5 614H113M75.5 708H113" fill="none" stroke="#f01a10" stroke-width="1"/>
<path d="M134 20H172V124H134zM134 41H172" fill="none" stroke="#f01a10" stroke-width="1"/>
<path d="M134 136H172V357H134zM134 145H172M134 237H172M134 330H172" fill="none" stroke="#f01a10" stroke-width="1"/>
<path d="M134 363H172V606H134zM134 427H172M134 519H172" fill="none" stroke="#f01a10" stroke-width="1"/>
<path d="M134 639H172V767H134zM134 644H172M134 737H172" fill="none" stroke="#f01a10" stroke-width="1"/>
<path d="M188 61H225.5V123H188zM188 91H225.5" fill="none" stroke="#f01a10" stroke-width="1"/>
<path d="M188 134H225.5V353H188zM188 193H225.5M188 285.5H225.5" fill="none" stroke="#f01a10" stroke-width="1"/>
<path d="M188 357H225.5V466H188zM188 383H225.5" fill="none" stroke="#f01a10" stroke-width="1"/>
<path d="M188 500H225.5V764H188zM188 509H225.5M188 601H225.5M188 693H225.5" fill="none" stroke="#f01a10" stroke-width="1"/>
<path d="M258 113H296V222H258zM258 205H296" fill="none" stroke="#f01a10" stroke-width="1"/>
<path d="M258 238H296V568H258zM258 313H296M258 405.5H296M258 498.5H296" fill="none" stroke="#f01a10" stroke-width="1"/>
<path d="M258 597H296V774H258zM258 619.5H296M258 711.5H296" fill="none" stroke="#f01a10" stroke-width="1"/>
<rect x="258" y="20" width="38" height="93" fill="none" stroke="#f2e010" stroke-width="1"/>
</svg></div></div>
<div id="selbar"><svg style="left:10px;top:12px" width="12" height="8" viewBox="0 0 12 8" fill="none" stroke="#000" stroke-width="2"><path d="M1 7l5-5 5 5"/></svg><span style="left:30px;top:8px;line-height:18px;font-size:13.400px;color:#3a3a3a;white-space:nowrap;letter-spacing:0">Selected Measurements</span></div>
<div id="legend"><h1>Type</h1>
<div class="li" style="top:55.8px"><i style="background:#000000"></i><b>-</b></div>
<div class="li" style="top:85.3px"><i style="background:#e8d20e"></i><b>Buddingtonite</b></div>
<div class="li" style="top:114.9px"><i style="background:#2a8012"></i><b>Carbonate</b></div>
<div class="li" style="top:144.4px"><i style="background:#b5b072"></i><b>Carbonate+Montmorillonite</b></div>
<div class="li" style="top:173.9px"><i style="background:#6f9f5f"></i><b>Carbonate+Muscovite</b></div>
<div class="li" style="top:203.5px"><i style="background:#b02368"></i><b>Chlorite+Muscovite</b></div>
<div class="li" style="top:233.0px"><i style="background:#e61a0e"></i><b>Epidote/Chlorite</b></div>
<div class="li" style="top:262.5px"><i style="background:#f21cf0"></i><b>Gypsum</b></div>
<div class="li" style="top:292.0px"><i style="background:#fdfd84"></i><b>Hydrated SiO2</b></div>
<div class="li" style="top:321.6px"><i style="background:#d96c06"></i><b>Illite</b></div>
<div class="li" style="top:351.1px"><i style="background:#44dcd8"></i><b>Jarosite</b></div>
<div class="li" style="top:380.6px"><i style="background:#1f4fd8"></i><b>Kaolin</b></div>
<div class="li" style="top:410.2px"><i style="background:#2d84f5"></i><b>Kaolin+White Mica</b></div>
<div class="li" style="top:439.7px"><i style="background:#ee8a0a"></i><b>Muscovite</b></div>
<div class="li" style="top:469.2px"><i style="background:#7b5f5a"></i><b>Plastic</b></div>
<div class="li" style="top:498.8px"><i style="background:#8c1436"></i><b>Pyrophyllite</b></div>
<div class="li" style="top:528.3px"><i style="background:#8fd32a"></i><b>Serpentine</b></div>
<div class="li" style="top:557.8px"><i style="background:#82d3a0"></i><b>Smectite</b></div>
<div class="li" style="top:587.3px"><i style="background:#fcfcc0"></i><b>Topaz</b></div>
<div class="li" style="top:616.9px"><i style="background:#f2d9a8"></i><b>Vegetation</b></div>
<i class="cb" style="top:661px"><svg style="left:0;top:0" width="13" height="13" viewBox="0 0 13 13" fill="none" stroke="#fff" stroke-width="1.100"><path d="M3.200 6.800l2.300 2.300 4.300-4.600"/></svg></i><span class="cbl" style="top:661px">Sort by name</span>
<i class="cb" style="top:686px"><svg style="left:0;top:0" width="13" height="13" viewBox="0 0 13 13" fill="none" stroke="#fff" stroke-width="1.100"><path d="M3.200 6.800l2.300 2.300 4.300-4.600"/></svg></i><span class="cbl" style="top:686px">Only included</span>
</div>
<div id="info"><span style="left:5px;top:6px">X,Y</span><span style="left:65px;top:6px">610, 364</span><span style="left:5px;top:26px">Sample</span><span style="left:5px;top:46px">Value</span></div>

</div>
<div id="right">
<div class="col" style="left:0;border-radius:0 5px 5px 0"><svg style="left:6px;top:10px" width="14" height="29" viewBox="0 0 14 29" fill="none" stroke="#808080" stroke-width="2.600" stroke-linecap="round" stroke-linejoin="round"><path d="M11.500 2L2.500 14.500 11.500 27"/></svg></div>
<div id="tbl">
<span class="th" style="left:0;width:199px;font-weight:bold;color:#333;letter-spacing:0"><span style="position:static">Sample</span><svg style="position:static;margin-left:4px;vertical-align:-3px" width="17" height="16" viewBox="0 0 17 16"><path d="M.5 15.500L8.500.5" stroke="#b0b0b0" fill="none"/><path d="M8.500.5l8 15H.5" stroke="#fff" fill="none"/></svg></span>
<span class="th" style="left:199px;width:200px;padding-right:19px">Group</span>
<span class="th" style="left:399px;width:200px;padding-right:19px">Image</span>
<span class="th blue" style="left:599px;width:200px;padding-right:19px">Start depth (m)</span>
<span class="th blue" style="left:799px;width:19px;border-right:0"></span>
<i style="left:0;top:40px;width:830px;height:40px;background:#e0eefa;z-index:0"></i>
<div class="tr sel" style="top:39px"><span class="c c1">Box 1 (1:1)</span><span class="c c2">Group</span><span class="c c3"></span><span class="c c4">0.000 m</span></div>
<div class="tr" style="top:79px"><span class="c c1">Box 1 (1:2)</span><span class="c c2">Group</span><span class="c c3"></span><span class="c c4">0.100 m</span></div>
<div class="tr" style="top:119px"><span class="c c1">Box 1 (1:3)</span><span class="c c2">Group</span><span class="c c3"></span><span class="c c4">0.200 m</span></div>
<div class="tr" style="top:159px"><span class="c c1">Box 1 (1:4)</span><span class="c c2">Group</span><span class="c c3"></span><span class="c c4">0.300 m</span></div>
<div class="tr" style="top:199px"><span class="c c1">Box 1 (1:5)</span><span class="c c2">Group</span><span class="c c3"></span><span class="c c4">0.400 m</span></div>
<div class="tr" style="top:239px"><span class="c c1">Box 1 (1:6)</span><span class="c c2">Group</span><span class="c c3"></span><span class="c c4">0.500 m</span></div>
<div class="tr" style="top:279px"><span class="c c1">Box 1 (1:7)</span><span class="c c2">Group</span><span class="c c3"></span><span class="c c4">0.600 m</span></div>
<div class="tr" style="top:319px"><span class="c c1">Box 1 (1:8)</span><span class="c c2">Group</span><span class="c c3"></span><span class="c c4">0.700 m</span></div>
<div class="tr" style="top:359px"><span class="c c1">Box 1 (1:9)</span><span class="c c2">Group</span><span class="c c3"></span><span class="c c4">0.800 m</span></div>
<div class="tr" style="top:399px"><span class="c c1">Box 1 (1:10)</span><span class="c c2">Group</span><span class="c c3"></span><span class="c c4">0.900 m</span></div>
<div class="tr" style="top:439px"><span class="c c1">Box 1 (1:11)</span><span class="c c2">Group</span><span class="c c3"></span><span class="c c4">1.000 m</span></div>
<div class="tr" style="top:479px"><span class="c c1">Box 1 (1:12)</span><span class="c c2">Group</span><span class="c c3"></span><span class="c c4">1.100 m</span></div>
<div class="tr" style="top:519px"><span class="c c1">Box 1 (1:13)</span><span class="c c2">Group</span><span class="c c3"></span><span class="c c4">1.200 m</span></div>
<div class="tr" style="top:559px"><span class="c c1">Box 1 (1:14)</span><span class="c c2">Group</span><span class="c c3"></span><span class="c c4">1.300 m</span></div>
<div class="tr" style="top:599px"><span class="c c1">Box 1 (1:15)</span><span class="c c2">Group</span><span class="c c3"></span><span class="c c4">1.400 m</span></div>
<div class="tr" style="top:639px"><span class="c c1">Box 1 (1:16)</span><span class="c c2">Group</span><span class="c c3"></span><span class="c c4">1.500 m</span></div>
<div class="tr" style="top:679px"><span class="c c1">Box 1 (1:17)</span><span class="c c2">Group</span><span class="c c3"></span><span class="c c4">1.600 m</span></div>
<div class="tr" style="top:719px"><span class="c c1">Box 1 (1:18)</span><span class="c c2">Group</span><span class="c c3"></span><span class="c c4">1.700 m</span></div>
<div class="tr" style="top:759px"><span class="c c1">Box 1 (1:19)</span><span class="c c2">Group</span><span class="c c3"></span><span class="c c4">1.800 m</span></div>
<svg style="left:0;top:0;z-index:1" width="818" height="778" viewBox="1049 119 818 778"><defs><filter id="sn" x="0" y="0" width="100%" height="100%"><feTurbulence type="fractalNoise" baseFrequency=".35 .12" numOctaves="3" seed="5" result="n"/><feColorMatrix in="n" values="0 0 0 0 .8 0 0 0 0 .81 0 0 0 0 .85 1 0 0 0 -.44" result="w"/><feComposite in="w" in2="SourceGraphic" operator="in" result="wi"/><feColorMatrix in="n" values="0 0 0 0 .05 0 0 0 0 .05 0 0 0 0 .12 0 1.400 0 0 -.55" result="d"/><feComposite in="d" in2="SourceGraphic" operator="in" result="di"/><feMerge><feMergeNode in="SourceGraphic"/><feMergeNode in="wi"/><feMergeNode in="di"/></feMerge></filter></defs><g filter="url(#sn)"><rect x="1541" y="160" width="15" height="38" fill="#5f687d"/><rect x="1541" y="198" width="15" height="46" fill="#636c83"/><rect x="1542" y="250" width="13" height="28" fill="#6a7591"/><rect x="1541" y="278" width="15" height="40" fill="#636b81"/><rect x="1541" y="318" width="15" height="40" fill="#6a7185"/><rect x="1543" y="358" width="11" height="22" fill="#727b94"/><rect x="1543" y="391" width="11" height="7" fill="#51596d"/><rect x="1541" y="398" width="15" height="39" fill="#636b7f"/><rect x="1541" y="478" width="14" height="12" fill="#838ba1"/><rect x="1541" y="496" width="14" height="22" fill="#6e7993"/><rect x="1541" y="518" width="15" height="40" fill="#5c6885"/><rect x="1541" y="558" width="15" height="26" fill="#646e89"/><rect x="1541" y="588" width="15" height="10" fill="#535b71"/><rect x="1543" y="598" width="11" height="26" fill="#5f6880"/><rect x="1543" y="635" width="11" height="3" fill="#555"/><rect x="1541" y="638" width="15" height="40" fill="#545c73"/><rect x="1541" y="678" width="15" height="40" fill="#575d71"/><rect x="1542" y="758" width="13" height="32" fill="#a5a6b4"/><rect x="1542" y="794" width="13" height="4" fill="#222"/><rect x="1541" y="798" width="15" height="40" fill="#677187"/><rect x="1541" y="838" width="15" height="40" fill="#636e86"/><rect x="1541" y="878" width="14" height="11" fill="#566280"/><rect x="1541" y="892" width="14" height="5" fill="#414960"/></g></svg>
<div id="vs"><svg style="left:3px;top:5px" width="10" height="6" viewBox="0 0 10 6"><path d="M0 6h10L5 .5z" fill="#777"/></svg><i style="left:0;top:16px;width:16px;height:155px;background:#9a9a9a"></i><svg style="left:3px;top:727px" width="10" height="6" viewBox="0 0 10 6"><path d="M0 0h10L5 5.500z" fill="#777"/></svg></div>
<div id="hs"><svg style="left:5px;top:4px" width="6" height="10" viewBox="0 0 6 10"><path d="M6 0v10L.5 5z" fill="#666"/></svg><i style="left:16px;top:0;width:458px;height:16px;background:#969696"></i><svg style="left:806px;top:4px" width="6" height="10" viewBox="0 0 6 10"><path d="M0 0v10l5.500-5z" fill="#666"/></svg></div>
<i style="left:818px;top:778px;width:17px;height:17px;background:#fff;z-index:5"></i>
</div>
<span style="left:35px;top:823px;line-height:18px;font-size:14px;white-space:nowrap;letter-spacing:-.15px">Segmentation</span>
<div style="left:130px;top:819px;width:200px;height:26px;border:1px solid #7a7a7a;background:#fff"><span style="left:6px;top:4px;line-height:18px;font-size:14px;white-space:nowrap;letter-spacing:-.1px">Depth interval registration</span><svg style="left:180px;top:8px" width="13" height="9" viewBox="0 0 13 9"><path d="M.5.5h12L6.500 8.500z" fill="#000"/></svg></div>
<svg style="left:776px;top:822px" width="90" height="20" viewBox="0 0 90 20" fill="none" stroke="#000" stroke-width="2" stroke-linecap="round" stroke-linejoin="round"><path d="M6 2v16M2.500 5.500L6 2l3.500 3.500M2.500 14.500L6 18l3.500-3.500"/><path d="M32 10h16M35.500 6.500L32 10l3.500 3.500M44.500 6.500L48 10l-3.500 3.500"/><path d="M66 1.500v17M82 1.500v17" stroke-linecap="butt"/><path d="M70 10h1.500M73.250 10h1.500M76.500 10h1.500" stroke-linecap="butt" stroke-width="1.600"/></svg>
<div class="col" style="left:882px;border-radius:5px 0 0 5px"><svg style="left:5px;top:10px" width="14" height="29" viewBox="0 0 14 29" fill="none" stroke="#808080" stroke-width="2.600" stroke-linecap="round" stroke-linejoin="round"><path d="M11.500 2L2.500 14.500 11.500 27"/></svg></div>
</div>
<div id="bottom">
<svg style="left:55px;top:12px" width="24" height="24" viewBox="0 0 24 24" fill="#000"><path d="M10.090 15.590L11.500 17l5-5-5-5-1.410 1.410L12.670 11H3v2h9.670l-2.580 2.590zM19 3H5c-1.110 0-2 .9-2 2v4h2V5h14v14H5v-4H3v4c0 1.100.89 2 2 2h14c1.100 0 2-.9 2-2V5c0-1.100-.9-2-2-2z"/></svg>
<span class="bl" style="left:7px;width:120px;letter-spacing:.2px">Go to measurement</span>
<i class="sep" style="left:134px"></i>
<svg style="left:187px;top:12px" width="24" height="24" viewBox="0 0 24 24" fill="#000"><path d="M19 13v-8H5v14h8v2H5c-1.100 0-2-.9-2-2V5c0-1.100.9-2 2-2h14c1.100 0 2 .9 2 2v8h-2z"/><path d="M11 7h2v4h4v2h-4v4h-2v-4H7v-2h4z"/><path d="M15 19h5.200l-1.600-1.600 1.200-1.200L23.500 20l-3.700 3.800-1.200-1.200 1.600-1.600H15z"/></svg>
<span class="bl" style="left:139px;width:120px">Add Sample model</span>
<svg style="left:298px;top:12px" width="26" height="24" viewBox="0 0 26 24" fill="#000"><path d="M3 6h18v5h-2V8H5v7h9v2H3z"/><path d="M19 12h2v3h3v2h-3v3h-2v-3h-3v-2h3z"/></svg>
<span class="bl" style="left:251px;width:120px">Add Variable or Id</span>
<i class="sep" style="left:372px"></i>
<svg style="left:414px;top:12px" width="24" height="24" viewBox="0 0 24 24" fill="#000"><path d="M18.600 19.500H21v2h-6v-6h2v2.730c1.830-1.470 3-3.710 3-6.230 0-4.070-3.060-7.440-7-7.930V2.050c5.050.5 9 4.760 9 9.950 0 2.990-1.320 5.670-3.400 7.500zM4 12c0-2.520 1.170-4.770 3-6.230V8.500h2v-6H3v2h2.400C3.320 6.330 2 9.010 2 12c0 5.190 3.950 9.450 9 9.950v-2.020c-3.940-.49-7-3.860-7-7.930zm12.240-3.890l-5.660 5.660-2.830-2.830-1.410 1.410 4.240 4.240 7.070-7.070-1.410-1.410z"/></svg>
<span class="bl" style="left:366px;width:120px">Apply Changes</span>
<div id="rec"><svg style="left:38px;top:7px" width="22" height="18" viewBox="0 0 22 18" fill="none"><rect x="1.200" y="1.200" width="13.600" height="14.400" rx="1.500" stroke="#fff" stroke-width="2.200"/><path d="M16 8.500L20.500 4v9.500z" fill="#fff"/></svg><span>Recorder</span></div>
</div>

</body></html>
